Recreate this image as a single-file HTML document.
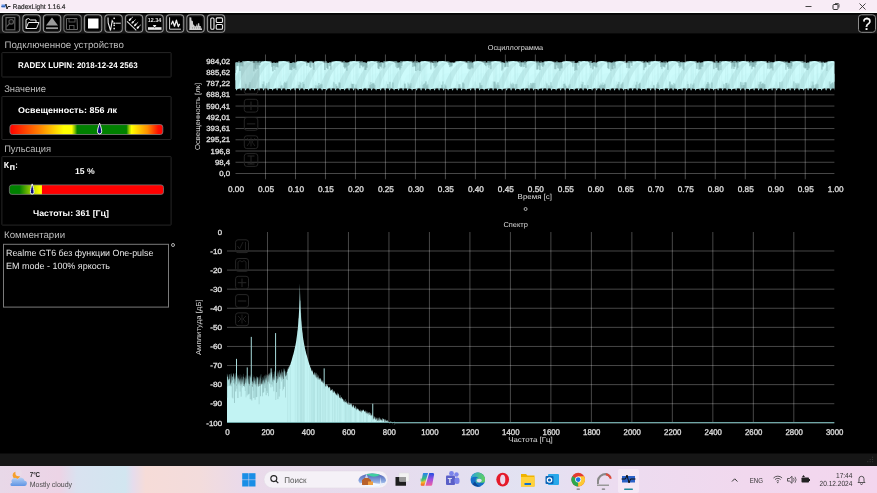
<!DOCTYPE html>
<html><head><meta charset="utf-8"><style>
*{margin:0;padding:0}
html,body{width:877px;height:493px;overflow:hidden;background:#000}
svg{display:block;will-change:transform;font-family:"Liberation Sans", sans-serif;-webkit-font-smoothing:antialiased}
text{text-rendering:geometricPrecision}
</style></head><body>
<svg width="877" height="493" viewBox="0 0 877 493">
<rect x="0" y="0" width="877" height="493" fill="#000"/>
<rect x="0" y="0" width="877" height="12" fill="#f8ecf6"/>
<rect x="0" y="11.6" width="877" height="1.4" fill="#ffffff"/>
<rect x="0" y="13" width="877" height="2" fill="#050505"/>
<rect x="0" y="14.8" width="877" height="18.6" fill="#181818"/>
<rect x="0" y="453.5" width="877" height="12.5" fill="#161616"/>
<defs><linearGradient id="tg" x1="0" x2="1" y1="0" y2="0">
<stop offset="0" stop-color="#e8d8e8"/>
<stop offset="0.068" stop-color="#ecd4e6"/>
<stop offset="0.088" stop-color="#d9e2f0"/>
<stop offset="0.143" stop-color="#d2e6f0"/>
<stop offset="0.152" stop-color="#e6dcec"/>
<stop offset="0.166" stop-color="#f6dcd8"/>
<stop offset="0.228" stop-color="#f3dcdc"/>
<stop offset="0.275" stop-color="#eadaea"/>
<stop offset="0.45" stop-color="#e6dcee"/>
<stop offset="0.6" stop-color="#e2e2f2"/>
<stop offset="0.7" stop-color="#ecdcf0"/>
<stop offset="0.85" stop-color="#f1d8ee"/>
<stop offset="1" stop-color="#f3d6ee"/>
</linearGradient></defs>
<rect x="0" y="466" width="877" height="27" fill="url(#tg)"/>
<path d="M1.5,6.5 L5,6.5 L6,4 L7,9 L8,6.5 L10.5,6.5" stroke="#222" stroke-width="1" fill="none"/>
<rect x="1.5" y="4.5" width="4" height="3" fill="#3b78e0" opacity="0.8"/>
<text x="12.80" y="8.80" font-size="6.8" font-weight="normal" fill="#1e1e1e" textLength="52.60" lengthAdjust="spacingAndGlyphs" stroke="#1e1e1e" stroke-width="0.15" >RadexLight 1.16.4</text>
<rect x="805.5" y="6" width="6" height="0.9" fill="#333"/>
<rect x="833" y="4.5" width="5" height="5" rx="1" fill="none" stroke="#333" stroke-width="1"/>
<path d="M835,3.5 h3 a1,1 0 0 1 1,1 v3" fill="none" stroke="#333" stroke-width="0.8"/>
<path d="M859.5,3.5 L865.5,9.5 M865.5,3.5 L859.5,9.5" stroke="#333" stroke-width="0.9"/>
<rect x="2.40" y="14.9" width="17.3" height="17.2" rx="3.2" fill="#0a0a0a" stroke="#707070" stroke-width="1.2"/>
<rect x="3.50" y="16.0" width="15.1" height="15.0" rx="2.2" fill="#000" stroke="#1e1e1e" stroke-width="0.8"/>
<rect x="22.90" y="14.9" width="17.3" height="17.2" rx="3.2" fill="#0a0a0a" stroke="#8e8e8e" stroke-width="1.2"/>
<rect x="24.00" y="16.0" width="15.1" height="15.0" rx="2.2" fill="#000" stroke="#1e1e1e" stroke-width="0.8"/>
<rect x="43.40" y="14.9" width="17.3" height="17.2" rx="3.2" fill="#0a0a0a" stroke="#8e8e8e" stroke-width="1.2"/>
<rect x="44.50" y="16.0" width="15.1" height="15.0" rx="2.2" fill="#000" stroke="#1e1e1e" stroke-width="0.8"/>
<rect x="63.90" y="14.9" width="17.3" height="17.2" rx="3.2" fill="#0a0a0a" stroke="#707070" stroke-width="1.2"/>
<rect x="65.00" y="16.0" width="15.1" height="15.0" rx="2.2" fill="#000" stroke="#1e1e1e" stroke-width="0.8"/>
<rect x="84.40" y="14.9" width="17.3" height="17.2" rx="3.2" fill="#0a0a0a" stroke="#8e8e8e" stroke-width="1.2"/>
<rect x="85.50" y="16.0" width="15.1" height="15.0" rx="2.2" fill="#000" stroke="#1e1e1e" stroke-width="0.8"/>
<rect x="104.90" y="14.9" width="17.3" height="17.2" rx="3.2" fill="#0a0a0a" stroke="#8e8e8e" stroke-width="1.2"/>
<rect x="106.00" y="16.0" width="15.1" height="15.0" rx="2.2" fill="#000" stroke="#1e1e1e" stroke-width="0.8"/>
<rect x="125.40" y="14.9" width="17.3" height="17.2" rx="3.2" fill="#0a0a0a" stroke="#8e8e8e" stroke-width="1.2"/>
<rect x="126.50" y="16.0" width="15.1" height="15.0" rx="2.2" fill="#000" stroke="#1e1e1e" stroke-width="0.8"/>
<rect x="145.90" y="14.9" width="17.3" height="17.2" rx="3.2" fill="#0a0a0a" stroke="#8e8e8e" stroke-width="1.2"/>
<rect x="147.00" y="16.0" width="15.1" height="15.0" rx="2.2" fill="#000" stroke="#1e1e1e" stroke-width="0.8"/>
<rect x="166.40" y="14.9" width="17.3" height="17.2" rx="3.2" fill="#0a0a0a" stroke="#8e8e8e" stroke-width="1.2"/>
<rect x="167.50" y="16.0" width="15.1" height="15.0" rx="2.2" fill="#000" stroke="#1e1e1e" stroke-width="0.8"/>
<rect x="186.90" y="14.9" width="17.3" height="17.2" rx="3.2" fill="#0a0a0a" stroke="#8e8e8e" stroke-width="1.2"/>
<rect x="188.00" y="16.0" width="15.1" height="15.0" rx="2.2" fill="#000" stroke="#1e1e1e" stroke-width="0.8"/>
<rect x="207.40" y="14.9" width="17.3" height="17.2" rx="3.2" fill="#0a0a0a" stroke="#8e8e8e" stroke-width="1.2"/>
<rect x="208.50" y="16.0" width="15.1" height="15.0" rx="2.2" fill="#000" stroke="#1e1e1e" stroke-width="0.8"/>
<rect x="858.5" y="14.8" width="17" height="17.5" rx="3" fill="#050505" stroke="#8c8c8c" stroke-width="1"/>
<text x="862.4" y="30.4" font-size="17.5" fill="#fff" stroke="#fff" stroke-width="0.2" textLength="8.6" lengthAdjust="spacingAndGlyphs">?</text>
<rect x="6" y="17.6" width="8.8" height="12.2" fill="none" stroke="#606060" stroke-width="1.2"/>
<circle cx="11.2" cy="21.8" r="2.3" fill="#111" stroke="#5a5a5a" stroke-width="1.1"/>
<path d="M9.6,23.5 L6.6,26.6" stroke="#5a5a5a" stroke-width="1.1"/>
<path d="M26,28.5 L26,19.5 L28.5,18.5 L30.5,20 L36,20 L36,22 M26,28.5 L36.5,28.5 L39,22.5 L28.5,22.5 L26,28.5" fill="none" stroke="#eee" stroke-width="1"/>
<path d="M52,17.5 L58,25.5 L46,25.5 Z" fill="#9a9a9a"/>
<rect x="46" y="27.3" width="12" height="1.8" fill="#9a9a9a"/>
<path d="M66.5,18.5 L77,18.5 L77.5,29.5 L66.5,29.5 Z" fill="none" stroke="#666" stroke-width="1"/>
<rect x="69" y="18.5" width="6" height="3.5" fill="none" stroke="#666" stroke-width="0.8"/>
<rect x="69.5" y="25.5" width="4.5" height="4" fill="none" stroke="#666" stroke-width="0.8"/>
<rect x="88" y="18.5" width="10.5" height="10" fill="#fff"/>
<path d="M108,17.5 L108.2,23 L110.5,30.5 L112.2,20.8 L113.2,22.3" fill="none" stroke="#eee" stroke-width="1.1"/>
<rect x="113.4" y="17.6" width="1.6" height="1.5" fill="#ddd"/>
<rect x="113.4" y="22.5" width="1.6" height="1.5" fill="#ddd"/>
<rect x="113.4" y="24.6" width="1.6" height="1.5" fill="#ddd"/>
<rect x="113.4" y="27.8" width="1.6" height="1.5" fill="#ddd"/>
<rect x="115.3" y="22.7" width="5.5" height="1" fill="#ddd"/>
<path d="M127,21.3 L136.3,30.4" stroke="#ddd" stroke-width="1.1"/>
<path d="M129.4,20.2 L132.6,17.2" stroke="#eee" stroke-width="0.8" stroke-linecap="round"/>
<ellipse cx="130.0" cy="19.6" rx="1.5" ry="0.95" transform="rotate(-45 130.0 19.6)" fill="#f2f2f2"/>
<path d="M132.1,22.9 L135.3,19.9" stroke="#eee" stroke-width="0.8" stroke-linecap="round"/>
<ellipse cx="132.7" cy="22.3" rx="1.5" ry="0.95" transform="rotate(-45 132.7 22.3)" fill="#f2f2f2"/>
<path d="M134.7,25.5 L137.9,22.5" stroke="#eee" stroke-width="0.8" stroke-linecap="round"/>
<ellipse cx="135.3" cy="24.9" rx="1.5" ry="0.95" transform="rotate(-45 135.3 24.9)" fill="#f2f2f2"/>
<path d="M137.3,28.1 L140.5,25.1" stroke="#eee" stroke-width="0.8" stroke-linecap="round"/>
<ellipse cx="137.9" cy="27.5" rx="1.5" ry="0.95" transform="rotate(-45 137.9 27.5)" fill="#f2f2f2"/>
<text x="147.8" y="21.8" font-size="5.8" font-weight="bold" fill="#ddd" textLength="13.5" lengthAdjust="spacingAndGlyphs">12.34</text>
<rect x="148" y="27.2" width="13.5" height="2.6" fill="#eee"/>
<path d="M152.8,25.1 L156.4,25.1 L154.6,27.9 Z" fill="#eee"/>
<circle cx="154.6" cy="27.6" r="0.6" fill="#555"/>
<path d="M169.6,17.3 L169.6,29.2 L180.9,29.2" fill="none" stroke="#ddd" stroke-width="1"/>
<path d="M171.3,24.5 L172.8,21.1 L174.5,26.2 L176.4,20.2 L178.3,26.6 L179.6,23.9" fill="none" stroke="#eee" stroke-width="1.3" stroke-linejoin="round"/>
<path d="M189.4,29.6 L189.4,17.3 L191.3,17.5 L191.5,20.6 L192.8,21 L193.2,24.5 L194.2,25 L194.6,26.2 L196.2,26.2 L196.6,23.8 L197.4,26.5 L198,23.2 L199.2,23.3 L199.5,25.9 L200.6,26 L201,27 L201.8,29.6 Z" fill="#cfcfcf"/>
<rect x="192.1" y="27" width="0.5" height="2" fill="#777"/>
<rect x="194.1" y="27" width="0.5" height="2" fill="#777"/>
<rect x="196.0" y="27" width="0.5" height="2" fill="#777"/>
<rect x="198.6" y="27" width="0.5" height="2" fill="#777"/>
<rect x="200.5" y="27" width="0.5" height="2" fill="#777"/>
<rect x="189.4" y="28.8" width="12.6" height="1" fill="#eee"/>
<rect x="210.8" y="18" width="3.2" height="11.2" rx="1" fill="none" stroke="#eee" stroke-width="1.1"/>
<rect x="216.2" y="17.9" width="6.3" height="4.6" rx="1" fill="none" stroke="#eee" stroke-width="1.1"/>
<rect x="216.2" y="24.5" width="6.3" height="4.8" rx="1" fill="none" stroke="#eee" stroke-width="1.1"/>
<text x="4.45" y="48.20" font-size="9.6" font-weight="normal" fill="#bdbdbd" textLength="119.35" lengthAdjust="spacingAndGlyphs"  >Подключенное устройство</text>
<rect x="1.9" y="52.6" width="169.2" height="24.4" rx="0.5" fill="none" stroke="#262626" stroke-width="1"/>
<text x="18.10" y="68.10" font-size="8.2" font-weight="bold" fill="#fff" textLength="119.50" lengthAdjust="spacingAndGlyphs"  >RADEX LUPIN: 2018-12-24 2563</text>
<text x="4.15" y="91.90" font-size="9.6" font-weight="normal" fill="#bdbdbd" textLength="41.85" lengthAdjust="spacingAndGlyphs"  >Значение</text>
<rect x="1.9" y="96.5" width="169.2" height="43" rx="0.5" fill="none" stroke="#262626" stroke-width="1"/>
<text x="18.10" y="113.40" font-size="8.4" font-weight="bold" fill="#fff" textLength="99.00" lengthAdjust="spacingAndGlyphs"  >Освещенность: 856 лк</text>
<defs><linearGradient id="g1" x1="0" x2="1">
<stop offset="0" stop-color="#ff0000"/><stop offset="0.19" stop-color="#ff8000"/><stop offset="0.352" stop-color="#ffff00"/>
<stop offset="0.405" stop-color="#ffff00"/><stop offset="0.425" stop-color="#80c000"/><stop offset="0.44" stop-color="#008000"/>
<stop offset="0.762" stop-color="#008000"/><stop offset="0.78" stop-color="#a0d000"/><stop offset="0.795" stop-color="#ffff00"/>
<stop offset="0.9" stop-color="#ff9000"/><stop offset="0.97" stop-color="#ff1000"/><stop offset="1" stop-color="#ff0000"/></linearGradient>
<linearGradient id="g2" x1="0" x2="1">
<stop offset="0" stop-color="#008000"/><stop offset="0.065" stop-color="#008000"/><stop offset="0.175" stop-color="#e0f000"/><stop offset="0.2" stop-color="#ffff00"/><stop offset="0.208" stop-color="#ffff00"/><stop offset="0.213" stop-color="#ff0000"/><stop offset="1" stop-color="#ff0000"/></linearGradient></defs>
<rect x="9.9" y="124.6" width="152.9" height="9.9" rx="2.5" fill="url(#g1)" stroke="#808080" stroke-width="0.8"/>
<path d="M99.6,123.2 C101,127 101.7,129.5 101.7,131.8 A2.1,2.1 0 0 1 97.5,131.8 C97.5,129.5 98.2,127 99.6,123.2 Z" fill="#0c0c80" stroke="#fff" stroke-width="0.9"/>
<text x="4.15" y="151.90" font-size="9.6" font-weight="normal" fill="#bdbdbd" textLength="46.95" lengthAdjust="spacingAndGlyphs"  >Пульсация</text>
<rect x="1.9" y="156.6" width="169.2" height="68.5" rx="0.5" fill="none" stroke="#262626" stroke-width="1"/>
<text x="3.80" y="167.90" font-size="8.8" font-weight="bold" fill="#fff" textLength="5.30" lengthAdjust="spacingAndGlyphs"  >К</text>
<text x="9.60" y="169.90" font-size="8.8" font-weight="bold" fill="#fff" textLength="5.70" lengthAdjust="spacingAndGlyphs"  >п</text>
<text x="15.40" y="167.90" font-size="8.8" font-weight="bold" fill="#fff" textLength="2.20" lengthAdjust="spacingAndGlyphs"  >:</text>
<text x="74.90" y="173.80" font-size="8.4" font-weight="bold" fill="#fff" textLength="19.70" lengthAdjust="spacingAndGlyphs"  >15 %</text>
<rect x="9.4" y="184.9" width="154.1" height="9.5" rx="2.5" fill="url(#g2)" stroke="#777" stroke-width="0.8"/>
<path d="M32.2,183.9 C33.4,187.5 34.0,189.8 34.0,192.3 A1.8,1.8 0 0 1 30.4,192.3 C30.4,189.8 31.0,187.5 32.2,183.9 Z" fill="#0c0c80" stroke="#fff" stroke-width="0.9"/>
<text x="33.00" y="216.00" font-size="8.4" font-weight="bold" fill="#fff" textLength="75.90" lengthAdjust="spacingAndGlyphs"  >Частоты: 361 [Гц]</text>
<text x="4.00" y="237.80" font-size="9.6" font-weight="normal" fill="#bdbdbd" textLength="61.10" lengthAdjust="spacingAndGlyphs"  >Комментарии</text>
<rect x="3.5" y="244.3" width="165" height="62.8" fill="none" stroke="#7a7a7a" stroke-width="1"/>
<text x="6.00" y="256.00" font-size="9.0" font-weight="normal" fill="#e6e6e6" textLength="147.30" lengthAdjust="spacingAndGlyphs"  >Realme GT6 без функции One-pulse</text>
<text x="6.00" y="268.80" font-size="9.0" font-weight="normal" fill="#e6e6e6" textLength="104.00" lengthAdjust="spacingAndGlyphs"  >EM mode - 100% яркость</text>
<circle cx="173" cy="245" r="1.5" fill="none" stroke="#d8d8d8" stroke-width="0.8"/>
<circle cx="525.6" cy="209" r="1.5" fill="none" stroke="#d8d8d8" stroke-width="0.8"/>
<line x1="235.5" y1="173.50" x2="834.4" y2="173.50" stroke="rgba(255,255,255,0.28)" stroke-width="1"/>
<line x1="235.5" y1="162.26" x2="834.4" y2="162.26" stroke="rgba(255,255,255,0.28)" stroke-width="1"/>
<line x1="235.5" y1="151.02" x2="834.4" y2="151.02" stroke="rgba(255,255,255,0.28)" stroke-width="1"/>
<line x1="235.5" y1="139.78" x2="834.4" y2="139.78" stroke="rgba(255,255,255,0.28)" stroke-width="1"/>
<line x1="235.5" y1="128.54" x2="834.4" y2="128.54" stroke="rgba(255,255,255,0.28)" stroke-width="1"/>
<line x1="235.5" y1="117.30" x2="834.4" y2="117.30" stroke="rgba(255,255,255,0.28)" stroke-width="1"/>
<line x1="235.5" y1="106.06" x2="834.4" y2="106.06" stroke="rgba(255,255,255,0.28)" stroke-width="1"/>
<line x1="235.5" y1="94.82" x2="834.4" y2="94.82" stroke="rgba(255,255,255,0.28)" stroke-width="1"/>
<line x1="265.49" y1="54.5" x2="265.49" y2="179.3" stroke="rgba(255,255,255,0.28)" stroke-width="1"/>
<line x1="295.47" y1="54.5" x2="295.47" y2="179.3" stroke="rgba(255,255,255,0.28)" stroke-width="1"/>
<line x1="325.45" y1="54.5" x2="325.45" y2="179.3" stroke="rgba(255,255,255,0.28)" stroke-width="1"/>
<line x1="355.44" y1="54.5" x2="355.44" y2="179.3" stroke="rgba(255,255,255,0.28)" stroke-width="1"/>
<line x1="385.43" y1="54.5" x2="385.43" y2="179.3" stroke="rgba(255,255,255,0.28)" stroke-width="1"/>
<line x1="415.41" y1="54.5" x2="415.41" y2="179.3" stroke="rgba(255,255,255,0.28)" stroke-width="1"/>
<line x1="445.39" y1="54.5" x2="445.39" y2="179.3" stroke="rgba(255,255,255,0.28)" stroke-width="1"/>
<line x1="475.38" y1="54.5" x2="475.38" y2="179.3" stroke="rgba(255,255,255,0.28)" stroke-width="1"/>
<line x1="505.37" y1="54.5" x2="505.37" y2="179.3" stroke="rgba(255,255,255,0.28)" stroke-width="1"/>
<line x1="535.35" y1="54.5" x2="535.35" y2="179.3" stroke="rgba(255,255,255,0.28)" stroke-width="1"/>
<line x1="565.34" y1="54.5" x2="565.34" y2="179.3" stroke="rgba(255,255,255,0.28)" stroke-width="1"/>
<line x1="595.32" y1="54.5" x2="595.32" y2="179.3" stroke="rgba(255,255,255,0.28)" stroke-width="1"/>
<line x1="625.31" y1="54.5" x2="625.31" y2="179.3" stroke="rgba(255,255,255,0.28)" stroke-width="1"/>
<line x1="655.29" y1="54.5" x2="655.29" y2="179.3" stroke="rgba(255,255,255,0.28)" stroke-width="1"/>
<line x1="685.28" y1="54.5" x2="685.28" y2="179.3" stroke="rgba(255,255,255,0.28)" stroke-width="1"/>
<line x1="715.26" y1="54.5" x2="715.26" y2="179.3" stroke="rgba(255,255,255,0.28)" stroke-width="1"/>
<line x1="745.25" y1="54.5" x2="745.25" y2="179.3" stroke="rgba(255,255,255,0.28)" stroke-width="1"/>
<line x1="775.23" y1="54.5" x2="775.23" y2="179.3" stroke="rgba(255,255,255,0.28)" stroke-width="1"/>
<line x1="805.22" y1="54.5" x2="805.22" y2="179.3" stroke="rgba(255,255,255,0.28)" stroke-width="1"/>
<rect x="244.3" y="81" width="13.5" height="12.8" rx="2.5" fill="none" stroke="#262626" stroke-width="1"/>
<rect x="244.3" y="99.3" width="13.5" height="12.8" rx="2.5" fill="none" stroke="#262626" stroke-width="1"/>
<rect x="244.3" y="117.5" width="13.5" height="12.8" rx="2.5" fill="none" stroke="#262626" stroke-width="1"/>
<rect x="244.3" y="135.8" width="13.5" height="12.8" rx="2.5" fill="none" stroke="#262626" stroke-width="1"/>
<rect x="244.3" y="153.6" width="13.5" height="12.8" rx="2.5" fill="none" stroke="#262626" stroke-width="1"/>
<path d="M251,101.5 v8.5 M246.8,105.7 h8.5" stroke="#262626" stroke-width="1"/>
<path d="M246.8,123.9 h8.5" stroke="#262626" stroke-width="1"/>
<path d="M247,138 L250,142 L247,146 M255,138 L252,142 L255,146 M251,137.5 v9" stroke="#262626" stroke-width="0.8" fill="none"/>
<path d="M247.5,156 h7 M251,156 v8 M247.5,164 h7" stroke="#262626" stroke-width="1" fill="none"/>
<clipPath id="bandclip"><rect x="235.5" y="55" width="598.9" height="40"/></clipPath><g clip-path="url(#bandclip)">
<rect x="235.5" y="63" width="598.9" height="25.4" fill="#bfefef"/>
<ellipse cx="230.19" cy="71.5" rx="9.6" ry="10.5" fill="#cdfbfb"/>
<ellipse cx="236.19" cy="81" rx="8.5" ry="8" fill="#c9f9f9"/>
<ellipse cx="247.89" cy="71.5" rx="9.6" ry="10.5" fill="#cdfbfb"/>
<ellipse cx="253.89" cy="81" rx="8.5" ry="8" fill="#c9f9f9"/>
<ellipse cx="265.59" cy="71.5" rx="9.6" ry="10.5" fill="#cdfbfb"/>
<ellipse cx="271.59" cy="81" rx="8.5" ry="8" fill="#c9f9f9"/>
<ellipse cx="283.29" cy="71.5" rx="9.6" ry="10.5" fill="#cdfbfb"/>
<ellipse cx="289.29" cy="81" rx="8.5" ry="8" fill="#c9f9f9"/>
<ellipse cx="300.99" cy="71.5" rx="9.6" ry="10.5" fill="#cdfbfb"/>
<ellipse cx="306.99" cy="81" rx="8.5" ry="8" fill="#c9f9f9"/>
<ellipse cx="318.69" cy="71.5" rx="9.6" ry="10.5" fill="#cdfbfb"/>
<ellipse cx="324.69" cy="81" rx="8.5" ry="8" fill="#c9f9f9"/>
<ellipse cx="336.39" cy="71.5" rx="9.6" ry="10.5" fill="#cdfbfb"/>
<ellipse cx="342.39" cy="81" rx="8.5" ry="8" fill="#c9f9f9"/>
<ellipse cx="354.09" cy="71.5" rx="9.6" ry="10.5" fill="#cdfbfb"/>
<ellipse cx="360.09" cy="81" rx="8.5" ry="8" fill="#c9f9f9"/>
<ellipse cx="371.79" cy="71.5" rx="9.6" ry="10.5" fill="#cdfbfb"/>
<ellipse cx="377.79" cy="81" rx="8.5" ry="8" fill="#c9f9f9"/>
<ellipse cx="389.49" cy="71.5" rx="9.6" ry="10.5" fill="#cdfbfb"/>
<ellipse cx="395.49" cy="81" rx="8.5" ry="8" fill="#c9f9f9"/>
<ellipse cx="407.19" cy="71.5" rx="9.6" ry="10.5" fill="#cdfbfb"/>
<ellipse cx="413.19" cy="81" rx="8.5" ry="8" fill="#c9f9f9"/>
<ellipse cx="424.89" cy="71.5" rx="9.6" ry="10.5" fill="#cdfbfb"/>
<ellipse cx="430.89" cy="81" rx="8.5" ry="8" fill="#c9f9f9"/>
<ellipse cx="442.59" cy="71.5" rx="9.6" ry="10.5" fill="#cdfbfb"/>
<ellipse cx="448.59" cy="81" rx="8.5" ry="8" fill="#c9f9f9"/>
<ellipse cx="460.29" cy="71.5" rx="9.6" ry="10.5" fill="#cdfbfb"/>
<ellipse cx="466.29" cy="81" rx="8.5" ry="8" fill="#c9f9f9"/>
<ellipse cx="477.99" cy="71.5" rx="9.6" ry="10.5" fill="#cdfbfb"/>
<ellipse cx="483.99" cy="81" rx="8.5" ry="8" fill="#c9f9f9"/>
<ellipse cx="495.69" cy="71.5" rx="9.6" ry="10.5" fill="#cdfbfb"/>
<ellipse cx="501.69" cy="81" rx="8.5" ry="8" fill="#c9f9f9"/>
<ellipse cx="513.39" cy="71.5" rx="9.6" ry="10.5" fill="#cdfbfb"/>
<ellipse cx="519.39" cy="81" rx="8.5" ry="8" fill="#c9f9f9"/>
<ellipse cx="531.09" cy="71.5" rx="9.6" ry="10.5" fill="#cdfbfb"/>
<ellipse cx="537.09" cy="81" rx="8.5" ry="8" fill="#c9f9f9"/>
<ellipse cx="548.79" cy="71.5" rx="9.6" ry="10.5" fill="#cdfbfb"/>
<ellipse cx="554.79" cy="81" rx="8.5" ry="8" fill="#c9f9f9"/>
<ellipse cx="566.49" cy="71.5" rx="9.6" ry="10.5" fill="#cdfbfb"/>
<ellipse cx="572.49" cy="81" rx="8.5" ry="8" fill="#c9f9f9"/>
<ellipse cx="584.19" cy="71.5" rx="9.6" ry="10.5" fill="#cdfbfb"/>
<ellipse cx="590.19" cy="81" rx="8.5" ry="8" fill="#c9f9f9"/>
<ellipse cx="601.89" cy="71.5" rx="9.6" ry="10.5" fill="#cdfbfb"/>
<ellipse cx="607.89" cy="81" rx="8.5" ry="8" fill="#c9f9f9"/>
<ellipse cx="619.59" cy="71.5" rx="9.6" ry="10.5" fill="#cdfbfb"/>
<ellipse cx="625.59" cy="81" rx="8.5" ry="8" fill="#c9f9f9"/>
<ellipse cx="637.29" cy="71.5" rx="9.6" ry="10.5" fill="#cdfbfb"/>
<ellipse cx="643.29" cy="81" rx="8.5" ry="8" fill="#c9f9f9"/>
<ellipse cx="654.99" cy="71.5" rx="9.6" ry="10.5" fill="#cdfbfb"/>
<ellipse cx="660.99" cy="81" rx="8.5" ry="8" fill="#c9f9f9"/>
<ellipse cx="672.69" cy="71.5" rx="9.6" ry="10.5" fill="#cdfbfb"/>
<ellipse cx="678.69" cy="81" rx="8.5" ry="8" fill="#c9f9f9"/>
<ellipse cx="690.39" cy="71.5" rx="9.6" ry="10.5" fill="#cdfbfb"/>
<ellipse cx="696.39" cy="81" rx="8.5" ry="8" fill="#c9f9f9"/>
<ellipse cx="708.09" cy="71.5" rx="9.6" ry="10.5" fill="#cdfbfb"/>
<ellipse cx="714.09" cy="81" rx="8.5" ry="8" fill="#c9f9f9"/>
<ellipse cx="725.79" cy="71.5" rx="9.6" ry="10.5" fill="#cdfbfb"/>
<ellipse cx="731.79" cy="81" rx="8.5" ry="8" fill="#c9f9f9"/>
<ellipse cx="743.49" cy="71.5" rx="9.6" ry="10.5" fill="#cdfbfb"/>
<ellipse cx="749.49" cy="81" rx="8.5" ry="8" fill="#c9f9f9"/>
<ellipse cx="761.19" cy="71.5" rx="9.6" ry="10.5" fill="#cdfbfb"/>
<ellipse cx="767.19" cy="81" rx="8.5" ry="8" fill="#c9f9f9"/>
<ellipse cx="778.89" cy="71.5" rx="9.6" ry="10.5" fill="#cdfbfb"/>
<ellipse cx="784.89" cy="81" rx="8.5" ry="8" fill="#c9f9f9"/>
<ellipse cx="796.59" cy="71.5" rx="9.6" ry="10.5" fill="#cdfbfb"/>
<ellipse cx="802.59" cy="81" rx="8.5" ry="8" fill="#c9f9f9"/>
<ellipse cx="814.29" cy="71.5" rx="9.6" ry="10.5" fill="#cdfbfb"/>
<ellipse cx="820.29" cy="81" rx="8.5" ry="8" fill="#c9f9f9"/>
<ellipse cx="831.99" cy="71.5" rx="9.6" ry="10.5" fill="#cdfbfb"/>
<ellipse cx="837.99" cy="81" rx="8.5" ry="8" fill="#c9f9f9"/>
<ellipse cx="849.69" cy="71.5" rx="9.6" ry="10.5" fill="#cdfbfb"/>
<ellipse cx="855.69" cy="81" rx="8.5" ry="8" fill="#c9f9f9"/>
<rect x="235.50" y="62.00" width="1" height="1.20" fill="#b8eaea"/>
<rect x="235.60" y="62.00" width="0.7" height="8.08" fill="#507e7e" opacity="0.76"/>
<rect x="236.50" y="62.12" width="1" height="1.08" fill="#b8eaea"/>
<rect x="236.60" y="62.12" width="0.7" height="4.02" fill="#507e7e" opacity="0.78"/>
<rect x="237.50" y="62.39" width="1" height="0.81" fill="#b8eaea"/>
<rect x="237.60" y="62.39" width="0.7" height="3.52" fill="#507e7e" opacity="0.71"/>
<rect x="238.50" y="61.20" width="1" height="2.00" fill="#b8eaea"/>
<rect x="239.50" y="62.53" width="1" height="0.67" fill="#b8eaea"/>
<rect x="239.60" y="62.53" width="0.7" height="8.40" fill="#507e7e" opacity="0.94"/>
<rect x="240.50" y="62.44" width="1" height="0.76" fill="#b8eaea"/>
<rect x="240.60" y="62.44" width="0.7" height="3.87" fill="#507e7e" opacity="0.61"/>
<rect x="241.50" y="62.16" width="1" height="1.04" fill="#b8eaea"/>
<rect x="241.60" y="62.16" width="0.7" height="4.05" fill="#507e7e" opacity="0.68"/>
<rect x="242.50" y="61.07" width="1" height="2.13" fill="#b8eaea"/>
<rect x="242.60" y="61.07" width="0.7" height="5.42" fill="#507e7e" opacity="0.89"/>
<rect x="243.50" y="61.36" width="1" height="1.84" fill="#c6f6f6"/>
<rect x="244.50" y="61.45" width="1" height="1.75" fill="#c6f6f6"/>
<rect x="245.50" y="61.35" width="1" height="1.85" fill="#c6f6f6"/>
<rect x="245.60" y="83.84" width="0.7" height="4.56" fill="#5a8a8a" opacity="0.56"/>
<rect x="246.50" y="61.70" width="1" height="1.50" fill="#c6f6f6"/>
<rect x="247.50" y="61.59" width="1" height="1.61" fill="#c6f6f6"/>
<rect x="248.50" y="61.22" width="1" height="1.98" fill="#c6f6f6"/>
<rect x="248.60" y="84.60" width="0.7" height="3.80" fill="#5a8a8a" opacity="0.48"/>
<rect x="249.50" y="61.54" width="1" height="1.66" fill="#c6f6f6"/>
<rect x="249.60" y="82.09" width="0.7" height="6.31" fill="#5a8a8a" opacity="0.60"/>
<rect x="250.50" y="61.67" width="1" height="1.53" fill="#c6f6f6"/>
<rect x="251.50" y="61.00" width="1" height="2.20" fill="#c6f6f6"/>
<rect x="252.50" y="61.15" width="1" height="2.05" fill="#c6f6f6"/>
<rect x="253.50" y="63.00" width="1" height="0.20" fill="#b8eaea"/>
<rect x="253.60" y="63.00" width="0.7" height="8.39" fill="#507e7e" opacity="0.74"/>
<rect x="254.50" y="61.16" width="1" height="2.04" fill="#b8eaea"/>
<rect x="254.60" y="61.16" width="0.7" height="7.28" fill="#507e7e" opacity="0.69"/>
<rect x="255.50" y="61.19" width="1" height="2.01" fill="#b8eaea"/>
<rect x="255.60" y="61.19" width="0.7" height="8.30" fill="#507e7e" opacity="0.87"/>
<rect x="256.50" y="61.26" width="1" height="1.94" fill="#b8eaea"/>
<rect x="256.60" y="61.26" width="0.7" height="3.56" fill="#507e7e" opacity="0.62"/>
<rect x="257.50" y="62.75" width="1" height="0.45" fill="#b8eaea"/>
<rect x="257.60" y="62.75" width="0.7" height="6.08" fill="#507e7e" opacity="0.76"/>
<rect x="258.50" y="61.42" width="1" height="1.78" fill="#b8eaea"/>
<rect x="258.60" y="61.42" width="0.7" height="3.72" fill="#507e7e" opacity="0.83"/>
<rect x="259.50" y="61.26" width="1" height="1.94" fill="#b8eaea"/>
<rect x="259.60" y="61.26" width="0.7" height="4.17" fill="#507e7e" opacity="0.69"/>
<rect x="260.50" y="63.14" width="1" height="0.06" fill="#b8eaea"/>
<rect x="261.50" y="61.21" width="1" height="1.99" fill="#c6f6f6"/>
<rect x="262.50" y="61.62" width="1" height="1.58" fill="#c6f6f6"/>
<rect x="262.60" y="84.13" width="0.7" height="4.27" fill="#5a8a8a" opacity="0.79"/>
<rect x="263.50" y="61.45" width="1" height="1.75" fill="#c6f6f6"/>
<rect x="263.60" y="81.45" width="0.7" height="6.95" fill="#5a8a8a" opacity="0.54"/>
<rect x="264.50" y="61.18" width="1" height="2.02" fill="#c6f6f6"/>
<rect x="265.50" y="61.23" width="1" height="1.97" fill="#c6f6f6"/>
<rect x="265.60" y="85.57" width="0.7" height="2.83" fill="#5a8a8a" opacity="0.49"/>
<rect x="266.50" y="61.41" width="1" height="1.79" fill="#c6f6f6"/>
<rect x="266.60" y="83.19" width="0.7" height="5.21" fill="#5a8a8a" opacity="0.60"/>
<rect x="267.50" y="61.32" width="1" height="1.88" fill="#c6f6f6"/>
<rect x="268.50" y="61.34" width="1" height="1.86" fill="#c6f6f6"/>
<rect x="268.60" y="82.00" width="0.7" height="6.40" fill="#5a8a8a" opacity="0.52"/>
<rect x="269.50" y="61.11" width="1" height="2.09" fill="#c6f6f6"/>
<rect x="270.50" y="61.64" width="1" height="1.56" fill="#c6f6f6"/>
<rect x="271.50" y="62.80" width="1" height="0.40" fill="#b8eaea"/>
<rect x="271.60" y="62.80" width="0.7" height="4.04" fill="#507e7e" opacity="0.86"/>
<rect x="272.50" y="63.07" width="1" height="0.13" fill="#b8eaea"/>
<rect x="272.60" y="63.07" width="0.7" height="8.23" fill="#507e7e" opacity="0.91"/>
<rect x="273.50" y="62.33" width="1" height="0.87" fill="#b8eaea"/>
<rect x="273.60" y="62.33" width="0.7" height="3.57" fill="#507e7e" opacity="0.61"/>
<rect x="274.50" y="63.12" width="1" height="0.08" fill="#b8eaea"/>
<rect x="274.60" y="63.12" width="0.7" height="6.88" fill="#507e7e" opacity="0.69"/>
<rect x="275.50" y="62.81" width="1" height="0.39" fill="#b8eaea"/>
<rect x="275.60" y="62.81" width="0.7" height="4.61" fill="#507e7e" opacity="0.66"/>
<rect x="276.50" y="62.58" width="1" height="0.62" fill="#b8eaea"/>
<rect x="276.60" y="62.58" width="0.7" height="4.26" fill="#507e7e" opacity="0.80"/>
<rect x="277.50" y="62.88" width="1" height="0.32" fill="#b8eaea"/>
<rect x="277.60" y="62.88" width="0.7" height="4.54" fill="#507e7e" opacity="0.92"/>
<rect x="278.50" y="61.14" width="1" height="2.06" fill="#c6f6f6"/>
<rect x="279.50" y="61.01" width="1" height="2.19" fill="#c6f6f6"/>
<rect x="280.50" y="61.19" width="1" height="2.01" fill="#c6f6f6"/>
<rect x="280.60" y="85.63" width="0.7" height="2.77" fill="#5a8a8a" opacity="0.52"/>
<rect x="281.50" y="61.26" width="1" height="1.94" fill="#c6f6f6"/>
<rect x="281.60" y="85.31" width="0.7" height="3.09" fill="#5a8a8a" opacity="0.59"/>
<rect x="282.50" y="61.62" width="1" height="1.58" fill="#c6f6f6"/>
<rect x="283.50" y="61.46" width="1" height="1.74" fill="#c6f6f6"/>
<rect x="283.60" y="83.27" width="0.7" height="5.13" fill="#5a8a8a" opacity="0.51"/>
<rect x="284.50" y="61.02" width="1" height="2.18" fill="#c6f6f6"/>
<rect x="284.60" y="81.80" width="0.7" height="6.60" fill="#5a8a8a" opacity="0.73"/>
<rect x="285.50" y="61.67" width="1" height="1.53" fill="#c6f6f6"/>
<rect x="285.60" y="83.04" width="0.7" height="5.36" fill="#5a8a8a" opacity="0.64"/>
<rect x="286.50" y="61.51" width="1" height="1.69" fill="#c6f6f6"/>
<rect x="286.60" y="81.40" width="0.7" height="7.00" fill="#5a8a8a" opacity="0.48"/>
<rect x="287.50" y="61.38" width="1" height="1.82" fill="#c6f6f6"/>
<rect x="288.50" y="61.52" width="1" height="1.68" fill="#c6f6f6"/>
<rect x="289.50" y="62.98" width="1" height="0.22" fill="#b8eaea"/>
<rect x="289.60" y="62.98" width="0.7" height="6.87" fill="#507e7e" opacity="0.88"/>
<rect x="290.50" y="63.01" width="1" height="0.19" fill="#b8eaea"/>
<rect x="290.60" y="63.01" width="0.7" height="6.77" fill="#507e7e" opacity="0.92"/>
<rect x="291.50" y="62.92" width="1" height="0.28" fill="#b8eaea"/>
<rect x="291.60" y="62.92" width="0.7" height="7.35" fill="#507e7e" opacity="0.90"/>
<rect x="292.50" y="62.26" width="1" height="0.94" fill="#b8eaea"/>
<rect x="292.60" y="62.26" width="0.7" height="5.10" fill="#507e7e" opacity="0.80"/>
<rect x="293.50" y="62.34" width="1" height="0.86" fill="#b8eaea"/>
<rect x="293.60" y="62.34" width="0.7" height="6.52" fill="#507e7e" opacity="0.95"/>
<rect x="294.50" y="62.94" width="1" height="0.26" fill="#b8eaea"/>
<rect x="294.60" y="62.94" width="0.7" height="5.14" fill="#507e7e" opacity="0.86"/>
<rect x="295.50" y="62.28" width="1" height="0.92" fill="#b8eaea"/>
<rect x="295.60" y="62.28" width="0.7" height="7.61" fill="#507e7e" opacity="0.63"/>
<rect x="296.50" y="61.53" width="1" height="1.67" fill="#c6f6f6"/>
<rect x="297.50" y="61.02" width="1" height="2.18" fill="#c6f6f6"/>
<rect x="298.50" y="61.42" width="1" height="1.78" fill="#c6f6f6"/>
<rect x="298.60" y="84.86" width="0.7" height="3.54" fill="#5a8a8a" opacity="0.73"/>
<rect x="299.50" y="61.35" width="1" height="1.85" fill="#c6f6f6"/>
<rect x="299.60" y="81.76" width="0.7" height="6.64" fill="#5a8a8a" opacity="0.55"/>
<rect x="300.50" y="61.01" width="1" height="2.19" fill="#c6f6f6"/>
<rect x="300.60" y="82.85" width="0.7" height="5.55" fill="#5a8a8a" opacity="0.53"/>
<rect x="301.50" y="61.12" width="1" height="2.08" fill="#c6f6f6"/>
<rect x="302.50" y="61.46" width="1" height="1.74" fill="#c6f6f6"/>
<rect x="302.60" y="81.89" width="0.7" height="6.51" fill="#5a8a8a" opacity="0.58"/>
<rect x="303.50" y="61.47" width="1" height="1.73" fill="#c6f6f6"/>
<rect x="303.60" y="83.96" width="0.7" height="4.44" fill="#5a8a8a" opacity="0.77"/>
<rect x="304.50" y="61.64" width="1" height="1.56" fill="#c6f6f6"/>
<rect x="305.50" y="61.27" width="1" height="1.93" fill="#c6f6f6"/>
<rect x="306.50" y="62.28" width="1" height="0.92" fill="#b8eaea"/>
<rect x="306.60" y="62.28" width="0.7" height="3.75" fill="#507e7e" opacity="0.77"/>
<rect x="307.50" y="62.84" width="1" height="0.36" fill="#b8eaea"/>
<rect x="308.50" y="62.56" width="1" height="0.64" fill="#b8eaea"/>
<rect x="309.50" y="61.61" width="1" height="1.59" fill="#b8eaea"/>
<rect x="309.60" y="61.61" width="0.7" height="5.48" fill="#507e7e" opacity="0.70"/>
<rect x="310.50" y="61.47" width="1" height="1.73" fill="#b8eaea"/>
<rect x="310.60" y="61.47" width="0.7" height="6.44" fill="#507e7e" opacity="0.77"/>
<rect x="311.50" y="61.69" width="1" height="1.51" fill="#b8eaea"/>
<rect x="312.50" y="63.16" width="1" height="0.04" fill="#b8eaea"/>
<rect x="312.60" y="63.16" width="0.7" height="3.41" fill="#507e7e" opacity="0.61"/>
<rect x="313.50" y="62.92" width="1" height="0.28" fill="#b8eaea"/>
<rect x="313.60" y="62.92" width="0.7" height="6.90" fill="#507e7e" opacity="0.80"/>
<rect x="314.50" y="61.22" width="1" height="1.98" fill="#c6f6f6"/>
<rect x="315.50" y="61.55" width="1" height="1.65" fill="#c6f6f6"/>
<rect x="315.60" y="85.29" width="0.7" height="3.11" fill="#5a8a8a" opacity="0.63"/>
<rect x="316.50" y="61.02" width="1" height="2.18" fill="#c6f6f6"/>
<rect x="317.50" y="61.17" width="1" height="2.03" fill="#c6f6f6"/>
<rect x="317.60" y="85.69" width="0.7" height="2.71" fill="#5a8a8a" opacity="0.70"/>
<rect x="318.50" y="61.31" width="1" height="1.89" fill="#c6f6f6"/>
<rect x="318.60" y="82.95" width="0.7" height="5.45" fill="#5a8a8a" opacity="0.77"/>
<rect x="319.50" y="61.67" width="1" height="1.53" fill="#c6f6f6"/>
<rect x="319.60" y="85.00" width="0.7" height="3.40" fill="#5a8a8a" opacity="0.64"/>
<rect x="320.50" y="61.13" width="1" height="2.07" fill="#c6f6f6"/>
<rect x="320.60" y="83.78" width="0.7" height="4.62" fill="#5a8a8a" opacity="0.74"/>
<rect x="321.50" y="61.13" width="1" height="2.07" fill="#c6f6f6"/>
<rect x="321.60" y="84.34" width="0.7" height="4.06" fill="#5a8a8a" opacity="0.73"/>
<rect x="322.50" y="61.36" width="1" height="1.84" fill="#c6f6f6"/>
<rect x="323.50" y="61.43" width="1" height="1.77" fill="#c6f6f6"/>
<rect x="324.50" y="62.66" width="1" height="0.54" fill="#b8eaea"/>
<rect x="324.60" y="62.66" width="0.7" height="7.36" fill="#507e7e" opacity="0.92"/>
<rect x="325.50" y="61.19" width="1" height="2.01" fill="#b8eaea"/>
<rect x="326.50" y="62.59" width="1" height="0.61" fill="#b8eaea"/>
<rect x="326.60" y="62.59" width="0.7" height="5.49" fill="#507e7e" opacity="0.82"/>
<rect x="327.50" y="63.00" width="1" height="0.20" fill="#b8eaea"/>
<rect x="327.60" y="63.00" width="0.7" height="6.13" fill="#507e7e" opacity="0.91"/>
<rect x="328.50" y="62.75" width="1" height="0.45" fill="#b8eaea"/>
<rect x="329.50" y="62.02" width="1" height="1.18" fill="#b8eaea"/>
<rect x="329.60" y="62.02" width="0.7" height="4.13" fill="#507e7e" opacity="0.85"/>
<rect x="330.50" y="62.80" width="1" height="0.40" fill="#b8eaea"/>
<rect x="330.60" y="62.80" width="0.7" height="6.95" fill="#507e7e" opacity="0.67"/>
<rect x="331.50" y="61.63" width="1" height="1.57" fill="#c6f6f6"/>
<rect x="332.50" y="61.69" width="1" height="1.51" fill="#c6f6f6"/>
<rect x="333.50" y="61.68" width="1" height="1.52" fill="#c6f6f6"/>
<rect x="333.60" y="82.34" width="0.7" height="6.06" fill="#5a8a8a" opacity="0.58"/>
<rect x="334.50" y="61.64" width="1" height="1.56" fill="#c6f6f6"/>
<rect x="335.50" y="61.24" width="1" height="1.96" fill="#c6f6f6"/>
<rect x="335.60" y="83.92" width="0.7" height="4.48" fill="#5a8a8a" opacity="0.67"/>
<rect x="336.50" y="61.54" width="1" height="1.66" fill="#c6f6f6"/>
<rect x="336.60" y="85.77" width="0.7" height="2.63" fill="#5a8a8a" opacity="0.77"/>
<rect x="337.50" y="61.04" width="1" height="2.16" fill="#c6f6f6"/>
<rect x="338.50" y="61.12" width="1" height="2.08" fill="#c6f6f6"/>
<rect x="338.60" y="82.35" width="0.7" height="6.05" fill="#5a8a8a" opacity="0.51"/>
<rect x="339.50" y="61.10" width="1" height="2.10" fill="#c6f6f6"/>
<rect x="339.60" y="82.64" width="0.7" height="5.76" fill="#5a8a8a" opacity="0.79"/>
<rect x="340.50" y="61.48" width="1" height="1.72" fill="#c6f6f6"/>
<rect x="341.50" y="61.66" width="1" height="1.54" fill="#c6f6f6"/>
<rect x="342.50" y="62.08" width="1" height="1.12" fill="#b8eaea"/>
<rect x="343.50" y="61.19" width="1" height="2.01" fill="#b8eaea"/>
<rect x="343.60" y="61.19" width="0.7" height="5.90" fill="#507e7e" opacity="0.70"/>
<rect x="344.50" y="62.60" width="1" height="0.60" fill="#b8eaea"/>
<rect x="344.60" y="62.60" width="0.7" height="5.88" fill="#507e7e" opacity="0.90"/>
<rect x="345.50" y="62.23" width="1" height="0.97" fill="#b8eaea"/>
<rect x="345.60" y="62.23" width="0.7" height="5.10" fill="#507e7e" opacity="0.90"/>
<rect x="346.50" y="62.98" width="1" height="0.22" fill="#b8eaea"/>
<rect x="346.60" y="62.98" width="0.7" height="7.68" fill="#507e7e" opacity="0.94"/>
<rect x="347.50" y="62.15" width="1" height="1.05" fill="#b8eaea"/>
<rect x="347.60" y="62.15" width="0.7" height="4.11" fill="#507e7e" opacity="0.79"/>
<rect x="348.50" y="62.11" width="1" height="1.09" fill="#b8eaea"/>
<rect x="348.60" y="62.11" width="0.7" height="3.15" fill="#507e7e" opacity="0.94"/>
<rect x="349.50" y="61.36" width="1" height="1.84" fill="#c6f6f6"/>
<rect x="350.50" y="61.28" width="1" height="1.92" fill="#c6f6f6"/>
<rect x="351.50" y="61.56" width="1" height="1.64" fill="#c6f6f6"/>
<rect x="351.60" y="83.69" width="0.7" height="4.71" fill="#5a8a8a" opacity="0.73"/>
<rect x="352.50" y="61.05" width="1" height="2.15" fill="#c6f6f6"/>
<rect x="352.60" y="84.04" width="0.7" height="4.36" fill="#5a8a8a" opacity="0.83"/>
<rect x="353.50" y="61.65" width="1" height="1.55" fill="#c6f6f6"/>
<rect x="353.60" y="83.77" width="0.7" height="4.63" fill="#5a8a8a" opacity="0.50"/>
<rect x="354.50" y="61.30" width="1" height="1.90" fill="#c6f6f6"/>
<rect x="355.50" y="61.63" width="1" height="1.57" fill="#c6f6f6"/>
<rect x="355.60" y="84.47" width="0.7" height="3.93" fill="#5a8a8a" opacity="0.53"/>
<rect x="356.50" y="61.43" width="1" height="1.77" fill="#c6f6f6"/>
<rect x="357.50" y="61.09" width="1" height="2.11" fill="#c6f6f6"/>
<rect x="358.50" y="61.02" width="1" height="2.18" fill="#c6f6f6"/>
<rect x="359.50" y="61.43" width="1" height="1.77" fill="#b8eaea"/>
<rect x="359.60" y="61.43" width="0.7" height="6.78" fill="#507e7e" opacity="0.71"/>
<rect x="360.50" y="61.78" width="1" height="1.42" fill="#b8eaea"/>
<rect x="360.60" y="61.78" width="0.7" height="3.58" fill="#507e7e" opacity="0.86"/>
<rect x="361.50" y="61.27" width="1" height="1.93" fill="#b8eaea"/>
<rect x="361.60" y="61.27" width="0.7" height="4.38" fill="#507e7e" opacity="0.67"/>
<rect x="362.50" y="62.17" width="1" height="1.03" fill="#b8eaea"/>
<rect x="362.60" y="62.17" width="0.7" height="5.07" fill="#507e7e" opacity="0.74"/>
<rect x="363.50" y="62.16" width="1" height="1.04" fill="#b8eaea"/>
<rect x="363.60" y="62.16" width="0.7" height="4.12" fill="#507e7e" opacity="0.82"/>
<rect x="364.50" y="62.40" width="1" height="0.80" fill="#b8eaea"/>
<rect x="364.60" y="62.40" width="0.7" height="7.68" fill="#507e7e" opacity="0.81"/>
<rect x="365.50" y="62.88" width="1" height="0.32" fill="#b8eaea"/>
<rect x="365.60" y="62.88" width="0.7" height="7.07" fill="#507e7e" opacity="0.88"/>
<rect x="366.50" y="62.99" width="1" height="0.21" fill="#b8eaea"/>
<rect x="366.60" y="62.99" width="0.7" height="4.73" fill="#507e7e" opacity="0.92"/>
<rect x="367.50" y="61.15" width="1" height="2.05" fill="#c6f6f6"/>
<rect x="368.50" y="61.70" width="1" height="1.50" fill="#c6f6f6"/>
<rect x="369.50" y="61.62" width="1" height="1.58" fill="#c6f6f6"/>
<rect x="369.60" y="84.82" width="0.7" height="3.58" fill="#5a8a8a" opacity="0.74"/>
<rect x="370.50" y="61.18" width="1" height="2.02" fill="#c6f6f6"/>
<rect x="370.60" y="82.16" width="0.7" height="6.24" fill="#5a8a8a" opacity="0.62"/>
<rect x="371.50" y="61.55" width="1" height="1.65" fill="#c6f6f6"/>
<rect x="371.60" y="84.09" width="0.7" height="4.31" fill="#5a8a8a" opacity="0.72"/>
<rect x="372.50" y="61.01" width="1" height="2.19" fill="#c6f6f6"/>
<rect x="372.60" y="82.83" width="0.7" height="5.57" fill="#5a8a8a" opacity="0.81"/>
<rect x="373.50" y="61.68" width="1" height="1.52" fill="#c6f6f6"/>
<rect x="373.60" y="83.62" width="0.7" height="4.78" fill="#5a8a8a" opacity="0.75"/>
<rect x="374.50" y="61.35" width="1" height="1.85" fill="#c6f6f6"/>
<rect x="374.60" y="85.05" width="0.7" height="3.35" fill="#5a8a8a" opacity="0.48"/>
<rect x="375.50" y="61.07" width="1" height="2.13" fill="#c6f6f6"/>
<rect x="376.50" y="61.03" width="1" height="2.17" fill="#c6f6f6"/>
<rect x="377.50" y="62.21" width="1" height="0.99" fill="#b8eaea"/>
<rect x="377.60" y="62.21" width="0.7" height="6.13" fill="#507e7e" opacity="0.65"/>
<rect x="378.50" y="61.41" width="1" height="1.79" fill="#b8eaea"/>
<rect x="378.60" y="61.41" width="0.7" height="7.62" fill="#507e7e" opacity="0.95"/>
<rect x="379.50" y="63.04" width="1" height="0.16" fill="#b8eaea"/>
<rect x="379.60" y="63.04" width="0.7" height="3.34" fill="#507e7e" opacity="0.93"/>
<rect x="380.50" y="62.02" width="1" height="1.18" fill="#b8eaea"/>
<rect x="380.60" y="62.02" width="0.7" height="4.80" fill="#507e7e" opacity="0.76"/>
<rect x="381.50" y="62.13" width="1" height="1.07" fill="#b8eaea"/>
<rect x="381.60" y="62.13" width="0.7" height="6.31" fill="#507e7e" opacity="0.60"/>
<rect x="382.50" y="62.54" width="1" height="0.66" fill="#b8eaea"/>
<rect x="383.50" y="61.40" width="1" height="1.80" fill="#b8eaea"/>
<rect x="383.60" y="61.40" width="0.7" height="7.07" fill="#507e7e" opacity="0.74"/>
<rect x="384.50" y="61.43" width="1" height="1.77" fill="#b8eaea"/>
<rect x="384.60" y="61.43" width="0.7" height="5.82" fill="#507e7e" opacity="0.61"/>
<rect x="385.50" y="61.63" width="1" height="1.57" fill="#c6f6f6"/>
<rect x="386.50" y="61.56" width="1" height="1.64" fill="#c6f6f6"/>
<rect x="387.50" y="61.60" width="1" height="1.60" fill="#c6f6f6"/>
<rect x="387.60" y="84.08" width="0.7" height="4.32" fill="#5a8a8a" opacity="0.69"/>
<rect x="388.50" y="61.35" width="1" height="1.85" fill="#c6f6f6"/>
<rect x="389.50" y="61.56" width="1" height="1.64" fill="#c6f6f6"/>
<rect x="389.60" y="81.80" width="0.7" height="6.60" fill="#5a8a8a" opacity="0.75"/>
<rect x="390.50" y="61.54" width="1" height="1.66" fill="#c6f6f6"/>
<rect x="391.50" y="61.28" width="1" height="1.92" fill="#c6f6f6"/>
<rect x="392.50" y="61.62" width="1" height="1.58" fill="#c6f6f6"/>
<rect x="392.60" y="82.45" width="0.7" height="5.95" fill="#5a8a8a" opacity="0.76"/>
<rect x="393.50" y="61.28" width="1" height="1.92" fill="#c6f6f6"/>
<rect x="394.50" y="61.51" width="1" height="1.69" fill="#c6f6f6"/>
<rect x="395.50" y="61.16" width="1" height="2.04" fill="#b8eaea"/>
<rect x="395.60" y="61.16" width="0.7" height="5.58" fill="#507e7e" opacity="0.60"/>
<rect x="396.50" y="61.78" width="1" height="1.42" fill="#b8eaea"/>
<rect x="396.60" y="61.78" width="0.7" height="6.43" fill="#507e7e" opacity="0.68"/>
<rect x="397.50" y="63.08" width="1" height="0.12" fill="#b8eaea"/>
<rect x="397.60" y="63.08" width="0.7" height="4.86" fill="#507e7e" opacity="0.83"/>
<rect x="398.50" y="62.25" width="1" height="0.95" fill="#b8eaea"/>
<rect x="398.60" y="62.25" width="0.7" height="5.14" fill="#507e7e" opacity="0.95"/>
<rect x="399.50" y="62.41" width="1" height="0.79" fill="#b8eaea"/>
<rect x="399.60" y="62.41" width="0.7" height="7.19" fill="#507e7e" opacity="0.94"/>
<rect x="400.50" y="61.05" width="1" height="2.15" fill="#b8eaea"/>
<rect x="400.60" y="61.05" width="0.7" height="7.06" fill="#507e7e" opacity="0.69"/>
<rect x="401.50" y="61.88" width="1" height="1.32" fill="#b8eaea"/>
<rect x="401.60" y="61.88" width="0.7" height="4.07" fill="#507e7e" opacity="0.73"/>
<rect x="402.50" y="61.07" width="1" height="2.13" fill="#c6f6f6"/>
<rect x="403.50" y="61.18" width="1" height="2.02" fill="#c6f6f6"/>
<rect x="404.50" y="61.63" width="1" height="1.57" fill="#c6f6f6"/>
<rect x="404.60" y="83.61" width="0.7" height="4.79" fill="#5a8a8a" opacity="0.84"/>
<rect x="405.50" y="61.40" width="1" height="1.80" fill="#c6f6f6"/>
<rect x="406.50" y="61.45" width="1" height="1.75" fill="#c6f6f6"/>
<rect x="407.50" y="61.05" width="1" height="2.15" fill="#c6f6f6"/>
<rect x="407.60" y="82.48" width="0.7" height="5.92" fill="#5a8a8a" opacity="0.47"/>
<rect x="408.50" y="61.65" width="1" height="1.55" fill="#c6f6f6"/>
<rect x="408.60" y="83.78" width="0.7" height="4.62" fill="#5a8a8a" opacity="0.52"/>
<rect x="409.50" y="61.35" width="1" height="1.85" fill="#c6f6f6"/>
<rect x="409.60" y="85.64" width="0.7" height="2.76" fill="#5a8a8a" opacity="0.83"/>
<rect x="410.50" y="61.29" width="1" height="1.91" fill="#c6f6f6"/>
<rect x="410.60" y="83.21" width="0.7" height="5.19" fill="#5a8a8a" opacity="0.60"/>
<rect x="411.50" y="61.20" width="1" height="2.00" fill="#c6f6f6"/>
<rect x="412.50" y="62.44" width="1" height="0.76" fill="#b8eaea"/>
<rect x="412.60" y="62.44" width="0.7" height="4.56" fill="#507e7e" opacity="0.85"/>
<rect x="413.50" y="61.65" width="1" height="1.55" fill="#b8eaea"/>
<rect x="413.60" y="61.65" width="0.7" height="4.35" fill="#507e7e" opacity="0.61"/>
<rect x="414.50" y="61.34" width="1" height="1.86" fill="#b8eaea"/>
<rect x="414.60" y="61.34" width="0.7" height="5.14" fill="#507e7e" opacity="0.91"/>
<rect x="415.50" y="62.65" width="1" height="0.55" fill="#b8eaea"/>
<rect x="415.60" y="62.65" width="0.7" height="8.44" fill="#507e7e" opacity="0.93"/>
<rect x="416.50" y="61.16" width="1" height="2.04" fill="#b8eaea"/>
<rect x="417.50" y="61.94" width="1" height="1.26" fill="#b8eaea"/>
<rect x="417.60" y="61.94" width="0.7" height="8.35" fill="#507e7e" opacity="0.69"/>
<rect x="418.50" y="62.15" width="1" height="1.05" fill="#b8eaea"/>
<rect x="419.50" y="62.59" width="1" height="0.61" fill="#b8eaea"/>
<rect x="419.60" y="62.59" width="0.7" height="8.38" fill="#507e7e" opacity="0.89"/>
<rect x="420.50" y="61.42" width="1" height="1.78" fill="#c6f6f6"/>
<rect x="421.50" y="61.08" width="1" height="2.12" fill="#c6f6f6"/>
<rect x="422.50" y="61.44" width="1" height="1.76" fill="#c6f6f6"/>
<rect x="422.60" y="84.98" width="0.7" height="3.42" fill="#5a8a8a" opacity="0.47"/>
<rect x="423.50" y="61.37" width="1" height="1.83" fill="#c6f6f6"/>
<rect x="423.60" y="83.91" width="0.7" height="4.49" fill="#5a8a8a" opacity="0.72"/>
<rect x="424.50" y="61.32" width="1" height="1.88" fill="#c6f6f6"/>
<rect x="424.60" y="83.28" width="0.7" height="5.12" fill="#5a8a8a" opacity="0.62"/>
<rect x="425.50" y="61.54" width="1" height="1.66" fill="#c6f6f6"/>
<rect x="425.60" y="81.41" width="0.7" height="6.99" fill="#5a8a8a" opacity="0.83"/>
<rect x="426.50" y="61.51" width="1" height="1.69" fill="#c6f6f6"/>
<rect x="426.60" y="85.39" width="0.7" height="3.01" fill="#5a8a8a" opacity="0.81"/>
<rect x="427.50" y="61.55" width="1" height="1.65" fill="#c6f6f6"/>
<rect x="427.60" y="84.28" width="0.7" height="4.12" fill="#5a8a8a" opacity="0.56"/>
<rect x="428.50" y="61.48" width="1" height="1.72" fill="#c6f6f6"/>
<rect x="429.50" y="61.40" width="1" height="1.80" fill="#c6f6f6"/>
<rect x="430.50" y="62.30" width="1" height="0.90" fill="#b8eaea"/>
<rect x="430.60" y="62.30" width="0.7" height="7.14" fill="#507e7e" opacity="0.67"/>
<rect x="431.50" y="61.55" width="1" height="1.65" fill="#b8eaea"/>
<rect x="432.50" y="63.01" width="1" height="0.19" fill="#b8eaea"/>
<rect x="433.50" y="61.09" width="1" height="2.11" fill="#b8eaea"/>
<rect x="433.60" y="61.09" width="0.7" height="4.49" fill="#507e7e" opacity="0.75"/>
<rect x="434.50" y="62.37" width="1" height="0.83" fill="#b8eaea"/>
<rect x="434.60" y="62.37" width="0.7" height="5.98" fill="#507e7e" opacity="0.63"/>
<rect x="435.50" y="61.19" width="1" height="2.01" fill="#b8eaea"/>
<rect x="435.60" y="61.19" width="0.7" height="6.03" fill="#507e7e" opacity="0.82"/>
<rect x="436.50" y="61.82" width="1" height="1.38" fill="#b8eaea"/>
<rect x="436.60" y="61.82" width="0.7" height="4.16" fill="#507e7e" opacity="0.72"/>
<rect x="437.50" y="62.64" width="1" height="0.56" fill="#b8eaea"/>
<rect x="438.50" y="61.05" width="1" height="2.15" fill="#c6f6f6"/>
<rect x="439.50" y="61.08" width="1" height="2.12" fill="#c6f6f6"/>
<rect x="440.50" y="61.44" width="1" height="1.76" fill="#c6f6f6"/>
<rect x="441.50" y="61.15" width="1" height="2.05" fill="#c6f6f6"/>
<rect x="441.60" y="84.74" width="0.7" height="3.66" fill="#5a8a8a" opacity="0.77"/>
<rect x="442.50" y="61.26" width="1" height="1.94" fill="#c6f6f6"/>
<rect x="442.60" y="81.45" width="0.7" height="6.95" fill="#5a8a8a" opacity="0.58"/>
<rect x="443.50" y="61.38" width="1" height="1.82" fill="#c6f6f6"/>
<rect x="444.50" y="61.64" width="1" height="1.56" fill="#c6f6f6"/>
<rect x="444.60" y="84.24" width="0.7" height="4.16" fill="#5a8a8a" opacity="0.49"/>
<rect x="445.50" y="61.61" width="1" height="1.59" fill="#c6f6f6"/>
<rect x="445.60" y="85.53" width="0.7" height="2.87" fill="#5a8a8a" opacity="0.68"/>
<rect x="446.50" y="61.34" width="1" height="1.86" fill="#c6f6f6"/>
<rect x="447.50" y="61.48" width="1" height="1.72" fill="#c6f6f6"/>
<rect x="448.50" y="61.66" width="1" height="1.54" fill="#b8eaea"/>
<rect x="448.60" y="61.66" width="0.7" height="3.42" fill="#507e7e" opacity="0.67"/>
<rect x="449.50" y="62.46" width="1" height="0.74" fill="#b8eaea"/>
<rect x="449.60" y="62.46" width="0.7" height="4.67" fill="#507e7e" opacity="0.85"/>
<rect x="450.50" y="62.53" width="1" height="0.67" fill="#b8eaea"/>
<rect x="450.60" y="62.53" width="0.7" height="3.79" fill="#507e7e" opacity="0.73"/>
<rect x="451.50" y="62.60" width="1" height="0.60" fill="#b8eaea"/>
<rect x="451.60" y="62.60" width="0.7" height="3.65" fill="#507e7e" opacity="0.85"/>
<rect x="452.50" y="62.25" width="1" height="0.95" fill="#b8eaea"/>
<rect x="453.50" y="63.07" width="1" height="0.13" fill="#b8eaea"/>
<rect x="454.50" y="61.96" width="1" height="1.24" fill="#b8eaea"/>
<rect x="455.50" y="61.21" width="1" height="1.99" fill="#c6f6f6"/>
<rect x="456.50" y="61.22" width="1" height="1.98" fill="#c6f6f6"/>
<rect x="457.50" y="61.28" width="1" height="1.92" fill="#c6f6f6"/>
<rect x="458.50" y="61.63" width="1" height="1.57" fill="#c6f6f6"/>
<rect x="458.60" y="84.27" width="0.7" height="4.13" fill="#5a8a8a" opacity="0.60"/>
<rect x="459.50" y="61.25" width="1" height="1.95" fill="#c6f6f6"/>
<rect x="459.60" y="84.16" width="0.7" height="4.24" fill="#5a8a8a" opacity="0.53"/>
<rect x="460.50" y="61.39" width="1" height="1.81" fill="#c6f6f6"/>
<rect x="461.50" y="61.38" width="1" height="1.82" fill="#c6f6f6"/>
<rect x="462.50" y="61.39" width="1" height="1.81" fill="#c6f6f6"/>
<rect x="462.60" y="82.48" width="0.7" height="5.92" fill="#5a8a8a" opacity="0.80"/>
<rect x="463.50" y="61.20" width="1" height="2.00" fill="#c6f6f6"/>
<rect x="463.60" y="83.58" width="0.7" height="4.82" fill="#5a8a8a" opacity="0.67"/>
<rect x="464.50" y="61.40" width="1" height="1.80" fill="#c6f6f6"/>
<rect x="465.50" y="61.68" width="1" height="1.52" fill="#c6f6f6"/>
<rect x="466.50" y="62.43" width="1" height="0.77" fill="#b8eaea"/>
<rect x="467.50" y="61.14" width="1" height="2.06" fill="#b8eaea"/>
<rect x="467.60" y="61.14" width="0.7" height="7.33" fill="#507e7e" opacity="0.63"/>
<rect x="468.50" y="61.18" width="1" height="2.02" fill="#b8eaea"/>
<rect x="468.60" y="61.18" width="0.7" height="7.94" fill="#507e7e" opacity="0.63"/>
<rect x="469.50" y="62.40" width="1" height="0.80" fill="#b8eaea"/>
<rect x="469.60" y="62.40" width="0.7" height="7.10" fill="#507e7e" opacity="0.83"/>
<rect x="470.50" y="61.54" width="1" height="1.66" fill="#b8eaea"/>
<rect x="470.60" y="61.54" width="0.7" height="7.21" fill="#507e7e" opacity="0.78"/>
<rect x="471.50" y="62.68" width="1" height="0.52" fill="#b8eaea"/>
<rect x="471.60" y="62.68" width="0.7" height="4.86" fill="#507e7e" opacity="0.94"/>
<rect x="472.50" y="62.48" width="1" height="0.72" fill="#b8eaea"/>
<rect x="472.60" y="62.48" width="0.7" height="5.96" fill="#507e7e" opacity="0.85"/>
<rect x="473.50" y="61.50" width="1" height="1.70" fill="#c6f6f6"/>
<rect x="474.50" y="61.64" width="1" height="1.56" fill="#c6f6f6"/>
<rect x="475.50" y="61.29" width="1" height="1.91" fill="#c6f6f6"/>
<rect x="476.50" y="61.47" width="1" height="1.73" fill="#c6f6f6"/>
<rect x="477.50" y="61.56" width="1" height="1.64" fill="#c6f6f6"/>
<rect x="478.50" y="61.62" width="1" height="1.58" fill="#c6f6f6"/>
<rect x="479.50" y="61.45" width="1" height="1.75" fill="#c6f6f6"/>
<rect x="479.60" y="82.70" width="0.7" height="5.70" fill="#5a8a8a" opacity="0.77"/>
<rect x="480.50" y="61.30" width="1" height="1.90" fill="#c6f6f6"/>
<rect x="480.60" y="85.24" width="0.7" height="3.16" fill="#5a8a8a" opacity="0.75"/>
<rect x="481.50" y="61.69" width="1" height="1.51" fill="#c6f6f6"/>
<rect x="481.60" y="85.15" width="0.7" height="3.25" fill="#5a8a8a" opacity="0.53"/>
<rect x="482.50" y="61.30" width="1" height="1.90" fill="#c6f6f6"/>
<rect x="483.50" y="61.64" width="1" height="1.56" fill="#b8eaea"/>
<rect x="484.50" y="61.13" width="1" height="2.07" fill="#b8eaea"/>
<rect x="484.60" y="61.13" width="0.7" height="3.63" fill="#507e7e" opacity="0.83"/>
<rect x="485.50" y="62.71" width="1" height="0.49" fill="#b8eaea"/>
<rect x="485.60" y="62.71" width="0.7" height="3.34" fill="#507e7e" opacity="0.76"/>
<rect x="486.50" y="62.28" width="1" height="0.92" fill="#b8eaea"/>
<rect x="487.50" y="61.08" width="1" height="2.12" fill="#b8eaea"/>
<rect x="487.60" y="61.08" width="0.7" height="4.01" fill="#507e7e" opacity="0.68"/>
<rect x="488.50" y="61.52" width="1" height="1.68" fill="#b8eaea"/>
<rect x="488.60" y="61.52" width="0.7" height="6.27" fill="#507e7e" opacity="0.68"/>
<rect x="489.50" y="61.41" width="1" height="1.79" fill="#b8eaea"/>
<rect x="489.60" y="61.41" width="0.7" height="3.95" fill="#507e7e" opacity="0.87"/>
<rect x="490.50" y="61.69" width="1" height="1.51" fill="#b8eaea"/>
<rect x="490.60" y="61.69" width="0.7" height="7.49" fill="#507e7e" opacity="0.77"/>
<rect x="491.50" y="61.18" width="1" height="2.02" fill="#c6f6f6"/>
<rect x="492.50" y="61.62" width="1" height="1.58" fill="#c6f6f6"/>
<rect x="493.50" y="61.24" width="1" height="1.96" fill="#c6f6f6"/>
<rect x="493.60" y="81.59" width="0.7" height="6.81" fill="#5a8a8a" opacity="0.64"/>
<rect x="494.50" y="61.15" width="1" height="2.05" fill="#c6f6f6"/>
<rect x="494.60" y="81.64" width="0.7" height="6.76" fill="#5a8a8a" opacity="0.77"/>
<rect x="495.50" y="61.27" width="1" height="1.93" fill="#c6f6f6"/>
<rect x="495.60" y="83.58" width="0.7" height="4.82" fill="#5a8a8a" opacity="0.56"/>
<rect x="496.50" y="61.69" width="1" height="1.51" fill="#c6f6f6"/>
<rect x="496.60" y="84.83" width="0.7" height="3.57" fill="#5a8a8a" opacity="0.45"/>
<rect x="497.50" y="61.33" width="1" height="1.87" fill="#c6f6f6"/>
<rect x="497.60" y="82.31" width="0.7" height="6.09" fill="#5a8a8a" opacity="0.74"/>
<rect x="498.50" y="61.42" width="1" height="1.78" fill="#c6f6f6"/>
<rect x="498.60" y="85.19" width="0.7" height="3.21" fill="#5a8a8a" opacity="0.58"/>
<rect x="499.50" y="61.18" width="1" height="2.02" fill="#c6f6f6"/>
<rect x="500.50" y="61.61" width="1" height="1.59" fill="#c6f6f6"/>
<rect x="501.50" y="62.14" width="1" height="1.06" fill="#b8eaea"/>
<rect x="501.60" y="62.14" width="0.7" height="8.46" fill="#507e7e" opacity="0.69"/>
<rect x="502.50" y="62.18" width="1" height="1.02" fill="#b8eaea"/>
<rect x="502.60" y="62.18" width="0.7" height="7.24" fill="#507e7e" opacity="0.60"/>
<rect x="503.50" y="62.81" width="1" height="0.39" fill="#b8eaea"/>
<rect x="504.50" y="62.81" width="1" height="0.39" fill="#b8eaea"/>
<rect x="504.60" y="62.81" width="0.7" height="4.48" fill="#507e7e" opacity="0.85"/>
<rect x="505.50" y="61.21" width="1" height="1.99" fill="#b8eaea"/>
<rect x="505.60" y="61.21" width="0.7" height="5.58" fill="#507e7e" opacity="0.93"/>
<rect x="506.50" y="62.29" width="1" height="0.91" fill="#b8eaea"/>
<rect x="507.50" y="61.67" width="1" height="1.53" fill="#b8eaea"/>
<rect x="507.60" y="61.67" width="0.7" height="5.29" fill="#507e7e" opacity="0.92"/>
<rect x="508.50" y="61.06" width="1" height="2.14" fill="#c6f6f6"/>
<rect x="509.50" y="61.58" width="1" height="1.62" fill="#c6f6f6"/>
<rect x="510.50" y="61.15" width="1" height="2.05" fill="#c6f6f6"/>
<rect x="510.60" y="83.53" width="0.7" height="4.87" fill="#5a8a8a" opacity="0.51"/>
<rect x="511.50" y="61.58" width="1" height="1.62" fill="#c6f6f6"/>
<rect x="511.60" y="84.50" width="0.7" height="3.90" fill="#5a8a8a" opacity="0.48"/>
<rect x="512.50" y="61.21" width="1" height="1.99" fill="#c6f6f6"/>
<rect x="512.60" y="82.68" width="0.7" height="5.72" fill="#5a8a8a" opacity="0.59"/>
<rect x="513.50" y="61.48" width="1" height="1.72" fill="#c6f6f6"/>
<rect x="513.60" y="84.13" width="0.7" height="4.27" fill="#5a8a8a" opacity="0.63"/>
<rect x="514.50" y="61.68" width="1" height="1.52" fill="#c6f6f6"/>
<rect x="515.50" y="61.46" width="1" height="1.74" fill="#c6f6f6"/>
<rect x="515.60" y="84.20" width="0.7" height="4.20" fill="#5a8a8a" opacity="0.73"/>
<rect x="516.50" y="61.17" width="1" height="2.03" fill="#c6f6f6"/>
<rect x="516.60" y="83.84" width="0.7" height="4.56" fill="#5a8a8a" opacity="0.45"/>
<rect x="517.50" y="61.69" width="1" height="1.51" fill="#c6f6f6"/>
<rect x="518.50" y="61.56" width="1" height="1.64" fill="#c6f6f6"/>
<rect x="519.50" y="61.45" width="1" height="1.75" fill="#b8eaea"/>
<rect x="519.60" y="61.45" width="0.7" height="4.60" fill="#507e7e" opacity="0.73"/>
<rect x="520.50" y="62.19" width="1" height="1.01" fill="#b8eaea"/>
<rect x="520.60" y="62.19" width="0.7" height="4.86" fill="#507e7e" opacity="0.74"/>
<rect x="521.50" y="62.47" width="1" height="0.73" fill="#b8eaea"/>
<rect x="521.60" y="62.47" width="0.7" height="4.10" fill="#507e7e" opacity="0.86"/>
<rect x="522.50" y="61.72" width="1" height="1.48" fill="#b8eaea"/>
<rect x="523.50" y="62.24" width="1" height="0.96" fill="#b8eaea"/>
<rect x="523.60" y="62.24" width="0.7" height="4.82" fill="#507e7e" opacity="0.89"/>
<rect x="524.50" y="61.20" width="1" height="2.00" fill="#b8eaea"/>
<rect x="524.60" y="61.20" width="0.7" height="3.52" fill="#507e7e" opacity="0.84"/>
<rect x="525.50" y="62.56" width="1" height="0.64" fill="#b8eaea"/>
<rect x="525.60" y="62.56" width="0.7" height="5.21" fill="#507e7e" opacity="0.89"/>
<rect x="526.50" y="61.41" width="1" height="1.79" fill="#c6f6f6"/>
<rect x="527.50" y="61.06" width="1" height="2.14" fill="#c6f6f6"/>
<rect x="528.50" y="61.16" width="1" height="2.04" fill="#c6f6f6"/>
<rect x="528.60" y="85.34" width="0.7" height="3.06" fill="#5a8a8a" opacity="0.61"/>
<rect x="529.50" y="61.05" width="1" height="2.15" fill="#c6f6f6"/>
<rect x="530.50" y="61.30" width="1" height="1.90" fill="#c6f6f6"/>
<rect x="530.60" y="82.99" width="0.7" height="5.41" fill="#5a8a8a" opacity="0.76"/>
<rect x="531.50" y="61.57" width="1" height="1.63" fill="#c6f6f6"/>
<rect x="531.60" y="84.41" width="0.7" height="3.99" fill="#5a8a8a" opacity="0.61"/>
<rect x="532.50" y="61.01" width="1" height="2.19" fill="#c6f6f6"/>
<rect x="532.60" y="82.75" width="0.7" height="5.65" fill="#5a8a8a" opacity="0.84"/>
<rect x="533.50" y="61.55" width="1" height="1.65" fill="#c6f6f6"/>
<rect x="533.60" y="83.16" width="0.7" height="5.24" fill="#5a8a8a" opacity="0.46"/>
<rect x="534.50" y="61.23" width="1" height="1.97" fill="#c6f6f6"/>
<rect x="534.60" y="82.97" width="0.7" height="5.43" fill="#5a8a8a" opacity="0.49"/>
<rect x="535.50" y="61.26" width="1" height="1.94" fill="#c6f6f6"/>
<rect x="536.50" y="62.12" width="1" height="1.08" fill="#b8eaea"/>
<rect x="536.60" y="62.12" width="0.7" height="7.54" fill="#507e7e" opacity="0.81"/>
<rect x="537.50" y="61.35" width="1" height="1.85" fill="#b8eaea"/>
<rect x="537.60" y="61.35" width="0.7" height="7.97" fill="#507e7e" opacity="0.79"/>
<rect x="538.50" y="61.78" width="1" height="1.42" fill="#b8eaea"/>
<rect x="538.60" y="61.78" width="0.7" height="3.78" fill="#507e7e" opacity="0.85"/>
<rect x="539.50" y="63.17" width="1" height="0.03" fill="#b8eaea"/>
<rect x="539.60" y="63.17" width="0.7" height="6.93" fill="#507e7e" opacity="0.89"/>
<rect x="540.50" y="61.43" width="1" height="1.77" fill="#b8eaea"/>
<rect x="541.50" y="62.38" width="1" height="0.82" fill="#b8eaea"/>
<rect x="541.60" y="62.38" width="0.7" height="3.46" fill="#507e7e" opacity="0.69"/>
<rect x="542.50" y="62.27" width="1" height="0.93" fill="#b8eaea"/>
<rect x="542.60" y="62.27" width="0.7" height="4.81" fill="#507e7e" opacity="0.93"/>
<rect x="543.50" y="61.79" width="1" height="1.41" fill="#b8eaea"/>
<rect x="543.60" y="61.79" width="0.7" height="3.68" fill="#507e7e" opacity="0.94"/>
<rect x="544.50" y="61.09" width="1" height="2.11" fill="#c6f6f6"/>
<rect x="545.50" y="61.63" width="1" height="1.57" fill="#c6f6f6"/>
<rect x="546.50" y="61.38" width="1" height="1.82" fill="#c6f6f6"/>
<rect x="546.60" y="83.38" width="0.7" height="5.02" fill="#5a8a8a" opacity="0.56"/>
<rect x="547.50" y="61.64" width="1" height="1.56" fill="#c6f6f6"/>
<rect x="548.50" y="61.57" width="1" height="1.63" fill="#c6f6f6"/>
<rect x="548.60" y="85.35" width="0.7" height="3.05" fill="#5a8a8a" opacity="0.78"/>
<rect x="549.50" y="61.20" width="1" height="2.00" fill="#c6f6f6"/>
<rect x="550.50" y="61.17" width="1" height="2.03" fill="#c6f6f6"/>
<rect x="550.60" y="82.16" width="0.7" height="6.24" fill="#5a8a8a" opacity="0.52"/>
<rect x="551.50" y="61.38" width="1" height="1.82" fill="#c6f6f6"/>
<rect x="551.60" y="85.76" width="0.7" height="2.64" fill="#5a8a8a" opacity="0.52"/>
<rect x="552.50" y="61.69" width="1" height="1.51" fill="#c6f6f6"/>
<rect x="553.50" y="61.66" width="1" height="1.54" fill="#c6f6f6"/>
<rect x="554.50" y="62.45" width="1" height="0.75" fill="#b8eaea"/>
<rect x="554.60" y="62.45" width="0.7" height="6.69" fill="#507e7e" opacity="0.86"/>
<rect x="555.50" y="61.84" width="1" height="1.36" fill="#b8eaea"/>
<rect x="555.60" y="61.84" width="0.7" height="7.42" fill="#507e7e" opacity="0.61"/>
<rect x="556.50" y="61.44" width="1" height="1.76" fill="#b8eaea"/>
<rect x="556.60" y="61.44" width="0.7" height="3.79" fill="#507e7e" opacity="0.74"/>
<rect x="557.50" y="62.25" width="1" height="0.95" fill="#b8eaea"/>
<rect x="557.60" y="62.25" width="0.7" height="5.86" fill="#507e7e" opacity="0.69"/>
<rect x="558.50" y="62.25" width="1" height="0.95" fill="#b8eaea"/>
<rect x="558.60" y="62.25" width="0.7" height="6.53" fill="#507e7e" opacity="0.61"/>
<rect x="559.50" y="62.48" width="1" height="0.72" fill="#b8eaea"/>
<rect x="559.60" y="62.48" width="0.7" height="8.28" fill="#507e7e" opacity="0.81"/>
<rect x="560.50" y="62.03" width="1" height="1.17" fill="#b8eaea"/>
<rect x="560.60" y="62.03" width="0.7" height="6.43" fill="#507e7e" opacity="0.84"/>
<rect x="561.50" y="62.67" width="1" height="0.53" fill="#b8eaea"/>
<rect x="561.60" y="62.67" width="0.7" height="5.67" fill="#507e7e" opacity="0.95"/>
<rect x="562.50" y="61.59" width="1" height="1.61" fill="#c6f6f6"/>
<rect x="563.50" y="61.60" width="1" height="1.60" fill="#c6f6f6"/>
<rect x="563.60" y="83.95" width="0.7" height="4.45" fill="#5a8a8a" opacity="0.68"/>
<rect x="564.50" y="61.63" width="1" height="1.57" fill="#c6f6f6"/>
<rect x="564.60" y="83.54" width="0.7" height="4.86" fill="#5a8a8a" opacity="0.62"/>
<rect x="565.50" y="61.63" width="1" height="1.57" fill="#c6f6f6"/>
<rect x="565.60" y="85.65" width="0.7" height="2.75" fill="#5a8a8a" opacity="0.74"/>
<rect x="566.50" y="61.63" width="1" height="1.57" fill="#c6f6f6"/>
<rect x="567.50" y="61.42" width="1" height="1.78" fill="#c6f6f6"/>
<rect x="568.50" y="61.21" width="1" height="1.99" fill="#c6f6f6"/>
<rect x="568.60" y="85.59" width="0.7" height="2.81" fill="#5a8a8a" opacity="0.50"/>
<rect x="569.50" y="61.31" width="1" height="1.89" fill="#c6f6f6"/>
<rect x="569.60" y="84.11" width="0.7" height="4.29" fill="#5a8a8a" opacity="0.47"/>
<rect x="570.50" y="61.49" width="1" height="1.71" fill="#c6f6f6"/>
<rect x="571.50" y="61.37" width="1" height="1.83" fill="#c6f6f6"/>
<rect x="572.50" y="61.53" width="1" height="1.67" fill="#b8eaea"/>
<rect x="572.60" y="61.53" width="0.7" height="5.18" fill="#507e7e" opacity="0.68"/>
<rect x="573.50" y="61.15" width="1" height="2.05" fill="#b8eaea"/>
<rect x="574.50" y="63.13" width="1" height="0.07" fill="#b8eaea"/>
<rect x="574.60" y="63.13" width="0.7" height="7.77" fill="#507e7e" opacity="0.75"/>
<rect x="575.50" y="62.77" width="1" height="0.43" fill="#b8eaea"/>
<rect x="575.60" y="62.77" width="0.7" height="7.11" fill="#507e7e" opacity="0.80"/>
<rect x="576.50" y="62.99" width="1" height="0.21" fill="#b8eaea"/>
<rect x="576.60" y="62.99" width="0.7" height="7.36" fill="#507e7e" opacity="0.64"/>
<rect x="577.50" y="62.18" width="1" height="1.02" fill="#b8eaea"/>
<rect x="578.50" y="61.00" width="1" height="2.20" fill="#b8eaea"/>
<rect x="578.60" y="61.00" width="0.7" height="4.65" fill="#507e7e" opacity="0.71"/>
<rect x="579.50" y="61.04" width="1" height="2.16" fill="#c6f6f6"/>
<rect x="580.50" y="61.63" width="1" height="1.57" fill="#c6f6f6"/>
<rect x="581.50" y="61.57" width="1" height="1.63" fill="#c6f6f6"/>
<rect x="581.60" y="84.30" width="0.7" height="4.10" fill="#5a8a8a" opacity="0.68"/>
<rect x="582.50" y="61.03" width="1" height="2.17" fill="#c6f6f6"/>
<rect x="582.60" y="81.86" width="0.7" height="6.54" fill="#5a8a8a" opacity="0.57"/>
<rect x="583.50" y="61.35" width="1" height="1.85" fill="#c6f6f6"/>
<rect x="584.50" y="61.68" width="1" height="1.52" fill="#c6f6f6"/>
<rect x="584.60" y="84.97" width="0.7" height="3.43" fill="#5a8a8a" opacity="0.57"/>
<rect x="585.50" y="61.65" width="1" height="1.55" fill="#c6f6f6"/>
<rect x="586.50" y="61.14" width="1" height="2.06" fill="#c6f6f6"/>
<rect x="587.50" y="61.25" width="1" height="1.95" fill="#c6f6f6"/>
<rect x="587.60" y="85.13" width="0.7" height="3.27" fill="#5a8a8a" opacity="0.80"/>
<rect x="588.50" y="61.70" width="1" height="1.50" fill="#c6f6f6"/>
<rect x="589.50" y="61.44" width="1" height="1.76" fill="#b8eaea"/>
<rect x="589.60" y="61.44" width="0.7" height="4.05" fill="#507e7e" opacity="0.91"/>
<rect x="590.50" y="61.11" width="1" height="2.09" fill="#b8eaea"/>
<rect x="590.60" y="61.11" width="0.7" height="6.99" fill="#507e7e" opacity="0.71"/>
<rect x="591.50" y="62.98" width="1" height="0.22" fill="#b8eaea"/>
<rect x="592.50" y="62.57" width="1" height="0.63" fill="#b8eaea"/>
<rect x="592.60" y="62.57" width="0.7" height="6.83" fill="#507e7e" opacity="0.93"/>
<rect x="593.50" y="61.98" width="1" height="1.22" fill="#b8eaea"/>
<rect x="593.60" y="61.98" width="0.7" height="4.23" fill="#507e7e" opacity="0.71"/>
<rect x="594.50" y="62.56" width="1" height="0.64" fill="#b8eaea"/>
<rect x="594.60" y="62.56" width="0.7" height="4.00" fill="#507e7e" opacity="0.68"/>
<rect x="595.50" y="62.46" width="1" height="0.74" fill="#b8eaea"/>
<rect x="595.60" y="62.46" width="0.7" height="5.05" fill="#507e7e" opacity="0.83"/>
<rect x="596.50" y="62.95" width="1" height="0.25" fill="#b8eaea"/>
<rect x="596.60" y="62.95" width="0.7" height="4.26" fill="#507e7e" opacity="0.71"/>
<rect x="597.50" y="61.65" width="1" height="1.55" fill="#c6f6f6"/>
<rect x="598.50" y="61.47" width="1" height="1.73" fill="#c6f6f6"/>
<rect x="599.50" y="61.19" width="1" height="2.01" fill="#c6f6f6"/>
<rect x="599.60" y="85.50" width="0.7" height="2.90" fill="#5a8a8a" opacity="0.84"/>
<rect x="600.50" y="61.31" width="1" height="1.89" fill="#c6f6f6"/>
<rect x="600.60" y="83.51" width="0.7" height="4.89" fill="#5a8a8a" opacity="0.47"/>
<rect x="601.50" y="61.42" width="1" height="1.78" fill="#c6f6f6"/>
<rect x="601.60" y="84.77" width="0.7" height="3.63" fill="#5a8a8a" opacity="0.77"/>
<rect x="602.50" y="61.06" width="1" height="2.14" fill="#c6f6f6"/>
<rect x="602.60" y="82.50" width="0.7" height="5.90" fill="#5a8a8a" opacity="0.55"/>
<rect x="603.50" y="61.20" width="1" height="2.00" fill="#c6f6f6"/>
<rect x="603.60" y="85.06" width="0.7" height="3.34" fill="#5a8a8a" opacity="0.81"/>
<rect x="604.50" y="61.69" width="1" height="1.51" fill="#c6f6f6"/>
<rect x="604.60" y="83.82" width="0.7" height="4.58" fill="#5a8a8a" opacity="0.75"/>
<rect x="605.50" y="61.27" width="1" height="1.93" fill="#c6f6f6"/>
<rect x="606.50" y="61.65" width="1" height="1.55" fill="#c6f6f6"/>
<rect x="607.50" y="62.10" width="1" height="1.10" fill="#b8eaea"/>
<rect x="607.60" y="62.10" width="0.7" height="6.06" fill="#507e7e" opacity="0.83"/>
<rect x="608.50" y="61.79" width="1" height="1.41" fill="#b8eaea"/>
<rect x="608.60" y="61.79" width="0.7" height="7.31" fill="#507e7e" opacity="0.78"/>
<rect x="609.50" y="62.11" width="1" height="1.09" fill="#b8eaea"/>
<rect x="610.50" y="62.51" width="1" height="0.69" fill="#b8eaea"/>
<rect x="610.60" y="62.51" width="0.7" height="8.23" fill="#507e7e" opacity="0.66"/>
<rect x="611.50" y="62.72" width="1" height="0.48" fill="#b8eaea"/>
<rect x="611.60" y="62.72" width="0.7" height="6.34" fill="#507e7e" opacity="0.68"/>
<rect x="612.50" y="61.97" width="1" height="1.23" fill="#b8eaea"/>
<rect x="612.60" y="61.97" width="0.7" height="7.33" fill="#507e7e" opacity="0.88"/>
<rect x="613.50" y="61.52" width="1" height="1.68" fill="#b8eaea"/>
<rect x="613.60" y="61.52" width="0.7" height="4.22" fill="#507e7e" opacity="0.80"/>
<rect x="614.50" y="62.10" width="1" height="1.10" fill="#b8eaea"/>
<rect x="614.60" y="62.10" width="0.7" height="6.28" fill="#507e7e" opacity="0.85"/>
<rect x="615.50" y="61.40" width="1" height="1.80" fill="#c6f6f6"/>
<rect x="616.50" y="61.61" width="1" height="1.59" fill="#c6f6f6"/>
<rect x="616.60" y="85.22" width="0.7" height="3.18" fill="#5a8a8a" opacity="0.46"/>
<rect x="617.50" y="61.35" width="1" height="1.85" fill="#c6f6f6"/>
<rect x="617.60" y="83.91" width="0.7" height="4.49" fill="#5a8a8a" opacity="0.56"/>
<rect x="618.50" y="61.56" width="1" height="1.64" fill="#c6f6f6"/>
<rect x="618.60" y="81.82" width="0.7" height="6.58" fill="#5a8a8a" opacity="0.68"/>
<rect x="619.50" y="61.38" width="1" height="1.82" fill="#c6f6f6"/>
<rect x="620.50" y="61.17" width="1" height="2.03" fill="#c6f6f6"/>
<rect x="620.60" y="84.50" width="0.7" height="3.90" fill="#5a8a8a" opacity="0.47"/>
<rect x="621.50" y="61.22" width="1" height="1.98" fill="#c6f6f6"/>
<rect x="621.60" y="83.54" width="0.7" height="4.86" fill="#5a8a8a" opacity="0.56"/>
<rect x="622.50" y="61.41" width="1" height="1.79" fill="#c6f6f6"/>
<rect x="622.60" y="82.21" width="0.7" height="6.19" fill="#5a8a8a" opacity="0.52"/>
<rect x="623.50" y="61.18" width="1" height="2.02" fill="#c6f6f6"/>
<rect x="624.50" y="61.11" width="1" height="2.09" fill="#c6f6f6"/>
<rect x="625.50" y="62.52" width="1" height="0.68" fill="#b8eaea"/>
<rect x="626.50" y="62.73" width="1" height="0.47" fill="#b8eaea"/>
<rect x="626.60" y="62.73" width="0.7" height="5.26" fill="#507e7e" opacity="0.73"/>
<rect x="627.50" y="61.48" width="1" height="1.72" fill="#b8eaea"/>
<rect x="628.50" y="61.09" width="1" height="2.11" fill="#b8eaea"/>
<rect x="628.60" y="61.09" width="0.7" height="7.19" fill="#507e7e" opacity="0.95"/>
<rect x="629.50" y="61.32" width="1" height="1.88" fill="#b8eaea"/>
<rect x="629.60" y="61.32" width="0.7" height="7.10" fill="#507e7e" opacity="0.61"/>
<rect x="630.50" y="61.53" width="1" height="1.67" fill="#b8eaea"/>
<rect x="631.50" y="61.31" width="1" height="1.89" fill="#b8eaea"/>
<rect x="631.60" y="61.31" width="0.7" height="4.64" fill="#507e7e" opacity="0.75"/>
<rect x="632.50" y="61.05" width="1" height="2.15" fill="#c6f6f6"/>
<rect x="633.50" y="61.02" width="1" height="2.18" fill="#c6f6f6"/>
<rect x="634.50" y="61.70" width="1" height="1.50" fill="#c6f6f6"/>
<rect x="635.50" y="61.51" width="1" height="1.69" fill="#c6f6f6"/>
<rect x="635.60" y="84.76" width="0.7" height="3.64" fill="#5a8a8a" opacity="0.67"/>
<rect x="636.50" y="61.17" width="1" height="2.03" fill="#c6f6f6"/>
<rect x="636.60" y="81.70" width="0.7" height="6.70" fill="#5a8a8a" opacity="0.60"/>
<rect x="637.50" y="61.24" width="1" height="1.96" fill="#c6f6f6"/>
<rect x="638.50" y="61.43" width="1" height="1.77" fill="#c6f6f6"/>
<rect x="638.60" y="84.09" width="0.7" height="4.31" fill="#5a8a8a" opacity="0.71"/>
<rect x="639.50" y="61.04" width="1" height="2.16" fill="#c6f6f6"/>
<rect x="639.60" y="82.77" width="0.7" height="5.63" fill="#5a8a8a" opacity="0.80"/>
<rect x="640.50" y="61.41" width="1" height="1.79" fill="#c6f6f6"/>
<rect x="641.50" y="61.32" width="1" height="1.88" fill="#c6f6f6"/>
<rect x="642.50" y="61.28" width="1" height="1.92" fill="#c6f6f6"/>
<rect x="643.50" y="62.85" width="1" height="0.35" fill="#b8eaea"/>
<rect x="643.60" y="62.85" width="0.7" height="7.30" fill="#507e7e" opacity="0.68"/>
<rect x="644.50" y="61.76" width="1" height="1.44" fill="#b8eaea"/>
<rect x="644.60" y="61.76" width="0.7" height="6.02" fill="#507e7e" opacity="0.66"/>
<rect x="645.50" y="61.45" width="1" height="1.75" fill="#b8eaea"/>
<rect x="645.60" y="61.45" width="0.7" height="5.57" fill="#507e7e" opacity="0.71"/>
<rect x="646.50" y="61.98" width="1" height="1.22" fill="#b8eaea"/>
<rect x="647.50" y="62.49" width="1" height="0.71" fill="#b8eaea"/>
<rect x="648.50" y="61.45" width="1" height="1.75" fill="#b8eaea"/>
<rect x="648.60" y="61.45" width="0.7" height="3.40" fill="#507e7e" opacity="0.84"/>
<rect x="649.50" y="61.80" width="1" height="1.40" fill="#b8eaea"/>
<rect x="649.60" y="61.80" width="0.7" height="3.10" fill="#507e7e" opacity="0.66"/>
<rect x="650.50" y="61.18" width="1" height="2.02" fill="#c6f6f6"/>
<rect x="651.50" y="61.28" width="1" height="1.92" fill="#c6f6f6"/>
<rect x="652.50" y="61.65" width="1" height="1.55" fill="#c6f6f6"/>
<rect x="653.50" y="61.19" width="1" height="2.01" fill="#c6f6f6"/>
<rect x="653.60" y="85.21" width="0.7" height="3.19" fill="#5a8a8a" opacity="0.82"/>
<rect x="654.50" y="61.25" width="1" height="1.95" fill="#c6f6f6"/>
<rect x="655.50" y="61.51" width="1" height="1.69" fill="#c6f6f6"/>
<rect x="656.50" y="61.01" width="1" height="2.19" fill="#c6f6f6"/>
<rect x="656.60" y="84.17" width="0.7" height="4.23" fill="#5a8a8a" opacity="0.48"/>
<rect x="657.50" y="61.62" width="1" height="1.58" fill="#c6f6f6"/>
<rect x="657.60" y="82.43" width="0.7" height="5.97" fill="#5a8a8a" opacity="0.66"/>
<rect x="658.50" y="61.04" width="1" height="2.16" fill="#c6f6f6"/>
<rect x="658.60" y="84.83" width="0.7" height="3.57" fill="#5a8a8a" opacity="0.47"/>
<rect x="659.50" y="61.11" width="1" height="2.09" fill="#c6f6f6"/>
<rect x="660.50" y="62.31" width="1" height="0.89" fill="#b8eaea"/>
<rect x="660.60" y="62.31" width="0.7" height="4.72" fill="#507e7e" opacity="0.75"/>
<rect x="661.50" y="62.20" width="1" height="1.00" fill="#b8eaea"/>
<rect x="661.60" y="62.20" width="0.7" height="6.89" fill="#507e7e" opacity="0.69"/>
<rect x="662.50" y="62.60" width="1" height="0.60" fill="#b8eaea"/>
<rect x="662.60" y="62.60" width="0.7" height="3.81" fill="#507e7e" opacity="0.67"/>
<rect x="663.50" y="61.62" width="1" height="1.58" fill="#b8eaea"/>
<rect x="663.60" y="61.62" width="0.7" height="5.23" fill="#507e7e" opacity="0.74"/>
<rect x="664.50" y="62.91" width="1" height="0.29" fill="#b8eaea"/>
<rect x="664.60" y="62.91" width="0.7" height="4.61" fill="#507e7e" opacity="0.72"/>
<rect x="665.50" y="61.47" width="1" height="1.73" fill="#b8eaea"/>
<rect x="665.60" y="61.47" width="0.7" height="3.13" fill="#507e7e" opacity="0.82"/>
<rect x="666.50" y="62.25" width="1" height="0.95" fill="#b8eaea"/>
<rect x="667.50" y="63.15" width="1" height="0.05" fill="#b8eaea"/>
<rect x="667.60" y="63.15" width="0.7" height="6.69" fill="#507e7e" opacity="0.92"/>
<rect x="668.50" y="61.15" width="1" height="2.05" fill="#c6f6f6"/>
<rect x="669.50" y="61.48" width="1" height="1.72" fill="#c6f6f6"/>
<rect x="669.60" y="81.60" width="0.7" height="6.80" fill="#5a8a8a" opacity="0.80"/>
<rect x="670.50" y="61.16" width="1" height="2.04" fill="#c6f6f6"/>
<rect x="670.60" y="85.50" width="0.7" height="2.90" fill="#5a8a8a" opacity="0.62"/>
<rect x="671.50" y="61.27" width="1" height="1.93" fill="#c6f6f6"/>
<rect x="671.60" y="84.17" width="0.7" height="4.23" fill="#5a8a8a" opacity="0.58"/>
<rect x="672.50" y="61.35" width="1" height="1.85" fill="#c6f6f6"/>
<rect x="672.60" y="85.19" width="0.7" height="3.21" fill="#5a8a8a" opacity="0.61"/>
<rect x="673.50" y="61.33" width="1" height="1.87" fill="#c6f6f6"/>
<rect x="673.60" y="82.91" width="0.7" height="5.49" fill="#5a8a8a" opacity="0.55"/>
<rect x="674.50" y="61.07" width="1" height="2.13" fill="#c6f6f6"/>
<rect x="674.60" y="84.00" width="0.7" height="4.40" fill="#5a8a8a" opacity="0.51"/>
<rect x="675.50" y="61.41" width="1" height="1.79" fill="#c6f6f6"/>
<rect x="676.50" y="61.39" width="1" height="1.81" fill="#c6f6f6"/>
<rect x="677.50" y="61.49" width="1" height="1.71" fill="#c6f6f6"/>
<rect x="678.50" y="61.05" width="1" height="2.15" fill="#b8eaea"/>
<rect x="678.60" y="61.05" width="0.7" height="5.00" fill="#507e7e" opacity="0.62"/>
<rect x="679.50" y="61.89" width="1" height="1.31" fill="#b8eaea"/>
<rect x="679.60" y="61.89" width="0.7" height="5.73" fill="#507e7e" opacity="0.81"/>
<rect x="680.50" y="62.03" width="1" height="1.17" fill="#b8eaea"/>
<rect x="680.60" y="62.03" width="0.7" height="4.39" fill="#507e7e" opacity="0.61"/>
<rect x="681.50" y="61.76" width="1" height="1.44" fill="#b8eaea"/>
<rect x="682.50" y="62.24" width="1" height="0.96" fill="#b8eaea"/>
<rect x="682.60" y="62.24" width="0.7" height="6.67" fill="#507e7e" opacity="0.67"/>
<rect x="683.50" y="62.03" width="1" height="1.17" fill="#b8eaea"/>
<rect x="683.60" y="62.03" width="0.7" height="8.25" fill="#507e7e" opacity="0.73"/>
<rect x="684.50" y="62.27" width="1" height="0.93" fill="#b8eaea"/>
<rect x="685.50" y="61.54" width="1" height="1.66" fill="#c6f6f6"/>
<rect x="686.50" y="61.44" width="1" height="1.76" fill="#c6f6f6"/>
<rect x="687.50" y="61.43" width="1" height="1.77" fill="#c6f6f6"/>
<rect x="687.60" y="84.03" width="0.7" height="4.37" fill="#5a8a8a" opacity="0.56"/>
<rect x="688.50" y="61.58" width="1" height="1.62" fill="#c6f6f6"/>
<rect x="689.50" y="61.27" width="1" height="1.93" fill="#c6f6f6"/>
<rect x="690.50" y="61.03" width="1" height="2.17" fill="#c6f6f6"/>
<rect x="690.60" y="83.62" width="0.7" height="4.78" fill="#5a8a8a" opacity="0.57"/>
<rect x="691.50" y="61.25" width="1" height="1.95" fill="#c6f6f6"/>
<rect x="692.50" y="61.10" width="1" height="2.10" fill="#c6f6f6"/>
<rect x="692.60" y="84.87" width="0.7" height="3.53" fill="#5a8a8a" opacity="0.72"/>
<rect x="693.50" y="61.16" width="1" height="2.04" fill="#c6f6f6"/>
<rect x="693.60" y="83.45" width="0.7" height="4.95" fill="#5a8a8a" opacity="0.61"/>
<rect x="694.50" y="61.17" width="1" height="2.03" fill="#c6f6f6"/>
<rect x="695.50" y="61.35" width="1" height="1.85" fill="#c6f6f6"/>
<rect x="696.50" y="62.43" width="1" height="0.77" fill="#b8eaea"/>
<rect x="696.60" y="62.43" width="0.7" height="6.43" fill="#507e7e" opacity="0.80"/>
<rect x="697.50" y="62.83" width="1" height="0.37" fill="#b8eaea"/>
<rect x="698.50" y="61.73" width="1" height="1.47" fill="#b8eaea"/>
<rect x="698.60" y="61.73" width="0.7" height="7.87" fill="#507e7e" opacity="0.71"/>
<rect x="699.50" y="62.58" width="1" height="0.62" fill="#b8eaea"/>
<rect x="699.60" y="62.58" width="0.7" height="6.78" fill="#507e7e" opacity="0.94"/>
<rect x="700.50" y="62.81" width="1" height="0.39" fill="#b8eaea"/>
<rect x="700.60" y="62.81" width="0.7" height="6.42" fill="#507e7e" opacity="0.77"/>
<rect x="701.50" y="62.24" width="1" height="0.96" fill="#b8eaea"/>
<rect x="701.60" y="62.24" width="0.7" height="4.57" fill="#507e7e" opacity="0.86"/>
<rect x="702.50" y="62.17" width="1" height="1.03" fill="#b8eaea"/>
<rect x="702.60" y="62.17" width="0.7" height="4.37" fill="#507e7e" opacity="0.71"/>
<rect x="703.50" y="61.12" width="1" height="2.08" fill="#c6f6f6"/>
<rect x="704.50" y="61.36" width="1" height="1.84" fill="#c6f6f6"/>
<rect x="705.50" y="61.09" width="1" height="2.11" fill="#c6f6f6"/>
<rect x="705.60" y="85.59" width="0.7" height="2.81" fill="#5a8a8a" opacity="0.49"/>
<rect x="706.50" y="61.49" width="1" height="1.71" fill="#c6f6f6"/>
<rect x="706.60" y="83.87" width="0.7" height="4.53" fill="#5a8a8a" opacity="0.76"/>
<rect x="707.50" y="61.34" width="1" height="1.86" fill="#c6f6f6"/>
<rect x="707.60" y="82.00" width="0.7" height="6.40" fill="#5a8a8a" opacity="0.80"/>
<rect x="708.50" y="61.04" width="1" height="2.16" fill="#c6f6f6"/>
<rect x="708.60" y="83.62" width="0.7" height="4.78" fill="#5a8a8a" opacity="0.77"/>
<rect x="709.50" y="61.27" width="1" height="1.93" fill="#c6f6f6"/>
<rect x="710.50" y="61.18" width="1" height="2.02" fill="#c6f6f6"/>
<rect x="711.50" y="61.23" width="1" height="1.97" fill="#c6f6f6"/>
<rect x="711.60" y="82.48" width="0.7" height="5.92" fill="#5a8a8a" opacity="0.79"/>
<rect x="712.50" y="61.58" width="1" height="1.62" fill="#c6f6f6"/>
<rect x="713.50" y="62.25" width="1" height="0.95" fill="#b8eaea"/>
<rect x="713.60" y="62.25" width="0.7" height="6.89" fill="#507e7e" opacity="0.82"/>
<rect x="714.50" y="62.83" width="1" height="0.37" fill="#b8eaea"/>
<rect x="715.50" y="61.28" width="1" height="1.92" fill="#b8eaea"/>
<rect x="715.60" y="61.28" width="0.7" height="6.68" fill="#507e7e" opacity="0.68"/>
<rect x="716.50" y="61.41" width="1" height="1.79" fill="#b8eaea"/>
<rect x="716.60" y="61.41" width="0.7" height="6.22" fill="#507e7e" opacity="0.93"/>
<rect x="717.50" y="63.13" width="1" height="0.07" fill="#b8eaea"/>
<rect x="717.60" y="63.13" width="0.7" height="6.78" fill="#507e7e" opacity="0.75"/>
<rect x="718.50" y="62.39" width="1" height="0.81" fill="#b8eaea"/>
<rect x="718.60" y="62.39" width="0.7" height="8.13" fill="#507e7e" opacity="0.95"/>
<rect x="719.50" y="61.11" width="1" height="2.09" fill="#b8eaea"/>
<rect x="719.60" y="61.11" width="0.7" height="3.65" fill="#507e7e" opacity="0.61"/>
<rect x="720.50" y="61.63" width="1" height="1.57" fill="#b8eaea"/>
<rect x="720.60" y="61.63" width="0.7" height="8.46" fill="#507e7e" opacity="0.64"/>
<rect x="721.50" y="61.23" width="1" height="1.97" fill="#c6f6f6"/>
<rect x="722.50" y="61.02" width="1" height="2.18" fill="#c6f6f6"/>
<rect x="723.50" y="61.38" width="1" height="1.82" fill="#c6f6f6"/>
<rect x="723.60" y="84.22" width="0.7" height="4.18" fill="#5a8a8a" opacity="0.57"/>
<rect x="724.50" y="61.56" width="1" height="1.64" fill="#c6f6f6"/>
<rect x="725.50" y="61.20" width="1" height="2.00" fill="#c6f6f6"/>
<rect x="725.60" y="83.12" width="0.7" height="5.28" fill="#5a8a8a" opacity="0.76"/>
<rect x="726.50" y="61.69" width="1" height="1.51" fill="#c6f6f6"/>
<rect x="726.60" y="82.78" width="0.7" height="5.62" fill="#5a8a8a" opacity="0.67"/>
<rect x="727.50" y="61.56" width="1" height="1.64" fill="#c6f6f6"/>
<rect x="727.60" y="85.11" width="0.7" height="3.29" fill="#5a8a8a" opacity="0.49"/>
<rect x="728.50" y="61.65" width="1" height="1.55" fill="#c6f6f6"/>
<rect x="728.60" y="83.70" width="0.7" height="4.70" fill="#5a8a8a" opacity="0.50"/>
<rect x="729.50" y="61.23" width="1" height="1.97" fill="#c6f6f6"/>
<rect x="730.50" y="61.01" width="1" height="2.19" fill="#c6f6f6"/>
<rect x="731.50" y="62.25" width="1" height="0.95" fill="#b8eaea"/>
<rect x="731.60" y="62.25" width="0.7" height="6.44" fill="#507e7e" opacity="0.70"/>
<rect x="732.50" y="61.50" width="1" height="1.70" fill="#b8eaea"/>
<rect x="732.60" y="61.50" width="0.7" height="5.01" fill="#507e7e" opacity="0.69"/>
<rect x="733.50" y="61.11" width="1" height="2.09" fill="#b8eaea"/>
<rect x="733.60" y="61.11" width="0.7" height="7.91" fill="#507e7e" opacity="0.71"/>
<rect x="734.50" y="61.17" width="1" height="2.03" fill="#b8eaea"/>
<rect x="734.60" y="61.17" width="0.7" height="5.66" fill="#507e7e" opacity="0.95"/>
<rect x="735.50" y="61.44" width="1" height="1.76" fill="#b8eaea"/>
<rect x="736.50" y="62.07" width="1" height="1.13" fill="#b8eaea"/>
<rect x="736.60" y="62.07" width="0.7" height="7.44" fill="#507e7e" opacity="0.74"/>
<rect x="737.50" y="61.13" width="1" height="2.07" fill="#b8eaea"/>
<rect x="737.60" y="61.13" width="0.7" height="6.61" fill="#507e7e" opacity="0.82"/>
<rect x="738.50" y="61.61" width="1" height="1.59" fill="#b8eaea"/>
<rect x="739.50" y="61.61" width="1" height="1.59" fill="#c6f6f6"/>
<rect x="740.50" y="61.70" width="1" height="1.50" fill="#c6f6f6"/>
<rect x="740.60" y="82.15" width="0.7" height="6.25" fill="#5a8a8a" opacity="0.74"/>
<rect x="741.50" y="61.12" width="1" height="2.08" fill="#c6f6f6"/>
<rect x="741.60" y="85.14" width="0.7" height="3.26" fill="#5a8a8a" opacity="0.50"/>
<rect x="742.50" y="61.05" width="1" height="2.15" fill="#c6f6f6"/>
<rect x="742.60" y="82.51" width="0.7" height="5.89" fill="#5a8a8a" opacity="0.57"/>
<rect x="743.50" y="61.36" width="1" height="1.84" fill="#c6f6f6"/>
<rect x="743.60" y="84.95" width="0.7" height="3.45" fill="#5a8a8a" opacity="0.83"/>
<rect x="744.50" y="61.01" width="1" height="2.19" fill="#c6f6f6"/>
<rect x="744.60" y="82.25" width="0.7" height="6.15" fill="#5a8a8a" opacity="0.77"/>
<rect x="745.50" y="61.51" width="1" height="1.69" fill="#c6f6f6"/>
<rect x="745.60" y="82.29" width="0.7" height="6.11" fill="#5a8a8a" opacity="0.78"/>
<rect x="746.50" y="61.54" width="1" height="1.66" fill="#c6f6f6"/>
<rect x="747.50" y="61.07" width="1" height="2.13" fill="#c6f6f6"/>
<rect x="748.50" y="61.67" width="1" height="1.53" fill="#c6f6f6"/>
<rect x="749.50" y="61.88" width="1" height="1.32" fill="#b8eaea"/>
<rect x="749.60" y="61.88" width="0.7" height="4.38" fill="#507e7e" opacity="0.92"/>
<rect x="750.50" y="61.05" width="1" height="2.15" fill="#b8eaea"/>
<rect x="750.60" y="61.05" width="0.7" height="4.25" fill="#507e7e" opacity="0.74"/>
<rect x="751.50" y="61.81" width="1" height="1.39" fill="#b8eaea"/>
<rect x="751.60" y="61.81" width="0.7" height="7.46" fill="#507e7e" opacity="0.73"/>
<rect x="752.50" y="62.40" width="1" height="0.80" fill="#b8eaea"/>
<rect x="752.60" y="62.40" width="0.7" height="4.54" fill="#507e7e" opacity="0.92"/>
<rect x="753.50" y="61.71" width="1" height="1.49" fill="#b8eaea"/>
<rect x="753.60" y="61.71" width="0.7" height="4.84" fill="#507e7e" opacity="0.86"/>
<rect x="754.50" y="61.46" width="1" height="1.74" fill="#b8eaea"/>
<rect x="754.60" y="61.46" width="0.7" height="6.00" fill="#507e7e" opacity="0.84"/>
<rect x="755.50" y="61.39" width="1" height="1.81" fill="#b8eaea"/>
<rect x="755.60" y="61.39" width="0.7" height="3.79" fill="#507e7e" opacity="0.72"/>
<rect x="756.50" y="61.30" width="1" height="1.90" fill="#c6f6f6"/>
<rect x="757.50" y="61.01" width="1" height="2.19" fill="#c6f6f6"/>
<rect x="758.50" y="61.35" width="1" height="1.85" fill="#c6f6f6"/>
<rect x="758.60" y="84.45" width="0.7" height="3.95" fill="#5a8a8a" opacity="0.66"/>
<rect x="759.50" y="61.67" width="1" height="1.53" fill="#c6f6f6"/>
<rect x="759.60" y="81.94" width="0.7" height="6.46" fill="#5a8a8a" opacity="0.58"/>
<rect x="760.50" y="61.53" width="1" height="1.67" fill="#c6f6f6"/>
<rect x="760.60" y="81.46" width="0.7" height="6.94" fill="#5a8a8a" opacity="0.62"/>
<rect x="761.50" y="61.67" width="1" height="1.53" fill="#c6f6f6"/>
<rect x="761.60" y="84.06" width="0.7" height="4.34" fill="#5a8a8a" opacity="0.73"/>
<rect x="762.50" y="61.12" width="1" height="2.08" fill="#c6f6f6"/>
<rect x="762.60" y="82.85" width="0.7" height="5.55" fill="#5a8a8a" opacity="0.83"/>
<rect x="763.50" y="61.23" width="1" height="1.97" fill="#c6f6f6"/>
<rect x="763.60" y="84.29" width="0.7" height="4.11" fill="#5a8a8a" opacity="0.85"/>
<rect x="764.50" y="61.10" width="1" height="2.10" fill="#c6f6f6"/>
<rect x="764.60" y="84.20" width="0.7" height="4.20" fill="#5a8a8a" opacity="0.71"/>
<rect x="765.50" y="61.15" width="1" height="2.05" fill="#c6f6f6"/>
<rect x="766.50" y="62.36" width="1" height="0.84" fill="#b8eaea"/>
<rect x="767.50" y="62.88" width="1" height="0.32" fill="#b8eaea"/>
<rect x="767.60" y="62.88" width="0.7" height="5.78" fill="#507e7e" opacity="0.80"/>
<rect x="768.50" y="61.25" width="1" height="1.95" fill="#b8eaea"/>
<rect x="769.50" y="62.52" width="1" height="0.68" fill="#b8eaea"/>
<rect x="769.60" y="62.52" width="0.7" height="6.66" fill="#507e7e" opacity="0.75"/>
<rect x="770.50" y="61.85" width="1" height="1.35" fill="#b8eaea"/>
<rect x="770.60" y="61.85" width="0.7" height="6.30" fill="#507e7e" opacity="0.80"/>
<rect x="771.50" y="62.13" width="1" height="1.07" fill="#b8eaea"/>
<rect x="771.60" y="62.13" width="0.7" height="6.45" fill="#507e7e" opacity="0.76"/>
<rect x="772.50" y="62.31" width="1" height="0.89" fill="#b8eaea"/>
<rect x="772.60" y="62.31" width="0.7" height="8.12" fill="#507e7e" opacity="0.65"/>
<rect x="773.50" y="62.03" width="1" height="1.17" fill="#b8eaea"/>
<rect x="774.50" y="61.52" width="1" height="1.68" fill="#c6f6f6"/>
<rect x="775.50" y="61.22" width="1" height="1.98" fill="#c6f6f6"/>
<rect x="776.50" y="61.52" width="1" height="1.68" fill="#c6f6f6"/>
<rect x="777.50" y="61.28" width="1" height="1.92" fill="#c6f6f6"/>
<rect x="778.50" y="61.09" width="1" height="2.11" fill="#c6f6f6"/>
<rect x="779.50" y="61.34" width="1" height="1.86" fill="#c6f6f6"/>
<rect x="779.60" y="82.12" width="0.7" height="6.28" fill="#5a8a8a" opacity="0.71"/>
<rect x="780.50" y="61.66" width="1" height="1.54" fill="#c6f6f6"/>
<rect x="781.50" y="61.56" width="1" height="1.64" fill="#c6f6f6"/>
<rect x="781.60" y="81.43" width="0.7" height="6.97" fill="#5a8a8a" opacity="0.48"/>
<rect x="782.50" y="61.61" width="1" height="1.59" fill="#c6f6f6"/>
<rect x="783.50" y="61.50" width="1" height="1.70" fill="#c6f6f6"/>
<rect x="784.50" y="61.55" width="1" height="1.65" fill="#b8eaea"/>
<rect x="785.50" y="62.00" width="1" height="1.20" fill="#b8eaea"/>
<rect x="785.60" y="62.00" width="0.7" height="7.76" fill="#507e7e" opacity="0.67"/>
<rect x="786.50" y="61.62" width="1" height="1.58" fill="#b8eaea"/>
<rect x="786.60" y="61.62" width="0.7" height="3.40" fill="#507e7e" opacity="0.79"/>
<rect x="787.50" y="62.73" width="1" height="0.47" fill="#b8eaea"/>
<rect x="787.60" y="62.73" width="0.7" height="4.33" fill="#507e7e" opacity="0.88"/>
<rect x="788.50" y="62.88" width="1" height="0.32" fill="#b8eaea"/>
<rect x="788.60" y="62.88" width="0.7" height="6.02" fill="#507e7e" opacity="0.92"/>
<rect x="789.50" y="62.75" width="1" height="0.45" fill="#b8eaea"/>
<rect x="789.60" y="62.75" width="0.7" height="5.01" fill="#507e7e" opacity="0.64"/>
<rect x="790.50" y="61.08" width="1" height="2.12" fill="#b8eaea"/>
<rect x="790.60" y="61.08" width="0.7" height="7.76" fill="#507e7e" opacity="0.89"/>
<rect x="791.50" y="61.26" width="1" height="1.94" fill="#b8eaea"/>
<rect x="791.60" y="61.26" width="0.7" height="5.14" fill="#507e7e" opacity="0.90"/>
<rect x="792.50" y="61.43" width="1" height="1.77" fill="#c6f6f6"/>
<rect x="793.50" y="61.63" width="1" height="1.57" fill="#c6f6f6"/>
<rect x="793.60" y="81.45" width="0.7" height="6.95" fill="#5a8a8a" opacity="0.53"/>
<rect x="794.50" y="61.44" width="1" height="1.76" fill="#c6f6f6"/>
<rect x="795.50" y="61.51" width="1" height="1.69" fill="#c6f6f6"/>
<rect x="795.60" y="82.89" width="0.7" height="5.51" fill="#5a8a8a" opacity="0.62"/>
<rect x="796.50" y="61.01" width="1" height="2.19" fill="#c6f6f6"/>
<rect x="796.60" y="84.48" width="0.7" height="3.92" fill="#5a8a8a" opacity="0.70"/>
<rect x="797.50" y="61.19" width="1" height="2.01" fill="#c6f6f6"/>
<rect x="797.60" y="82.77" width="0.7" height="5.63" fill="#5a8a8a" opacity="0.52"/>
<rect x="798.50" y="61.09" width="1" height="2.11" fill="#c6f6f6"/>
<rect x="798.60" y="83.80" width="0.7" height="4.60" fill="#5a8a8a" opacity="0.50"/>
<rect x="799.50" y="61.08" width="1" height="2.12" fill="#c6f6f6"/>
<rect x="800.50" y="61.43" width="1" height="1.77" fill="#c6f6f6"/>
<rect x="801.50" y="61.25" width="1" height="1.95" fill="#c6f6f6"/>
<rect x="802.50" y="61.43" width="1" height="1.77" fill="#b8eaea"/>
<rect x="803.50" y="62.52" width="1" height="0.68" fill="#b8eaea"/>
<rect x="803.60" y="62.52" width="0.7" height="4.98" fill="#507e7e" opacity="0.71"/>
<rect x="804.50" y="61.90" width="1" height="1.30" fill="#b8eaea"/>
<rect x="804.60" y="61.90" width="0.7" height="6.47" fill="#507e7e" opacity="0.75"/>
<rect x="805.50" y="62.80" width="1" height="0.40" fill="#b8eaea"/>
<rect x="805.60" y="62.80" width="0.7" height="5.51" fill="#507e7e" opacity="0.78"/>
<rect x="806.50" y="63.07" width="1" height="0.13" fill="#b8eaea"/>
<rect x="806.60" y="63.07" width="0.7" height="6.87" fill="#507e7e" opacity="0.68"/>
<rect x="807.50" y="62.27" width="1" height="0.93" fill="#b8eaea"/>
<rect x="807.60" y="62.27" width="0.7" height="7.80" fill="#507e7e" opacity="0.70"/>
<rect x="808.50" y="62.88" width="1" height="0.32" fill="#b8eaea"/>
<rect x="808.60" y="62.88" width="0.7" height="5.50" fill="#507e7e" opacity="0.93"/>
<rect x="809.50" y="61.27" width="1" height="1.93" fill="#c6f6f6"/>
<rect x="810.50" y="61.52" width="1" height="1.68" fill="#c6f6f6"/>
<rect x="811.50" y="61.42" width="1" height="1.78" fill="#c6f6f6"/>
<rect x="811.60" y="85.61" width="0.7" height="2.79" fill="#5a8a8a" opacity="0.62"/>
<rect x="812.50" y="61.20" width="1" height="2.00" fill="#c6f6f6"/>
<rect x="812.60" y="81.60" width="0.7" height="6.80" fill="#5a8a8a" opacity="0.57"/>
<rect x="813.50" y="61.49" width="1" height="1.71" fill="#c6f6f6"/>
<rect x="813.60" y="84.80" width="0.7" height="3.60" fill="#5a8a8a" opacity="0.61"/>
<rect x="814.50" y="61.09" width="1" height="2.11" fill="#c6f6f6"/>
<rect x="815.50" y="61.18" width="1" height="2.02" fill="#c6f6f6"/>
<rect x="815.60" y="84.36" width="0.7" height="4.04" fill="#5a8a8a" opacity="0.78"/>
<rect x="816.50" y="61.60" width="1" height="1.60" fill="#c6f6f6"/>
<rect x="816.60" y="83.44" width="0.7" height="4.96" fill="#5a8a8a" opacity="0.49"/>
<rect x="817.50" y="61.63" width="1" height="1.57" fill="#c6f6f6"/>
<rect x="817.60" y="84.26" width="0.7" height="4.14" fill="#5a8a8a" opacity="0.60"/>
<rect x="818.50" y="61.51" width="1" height="1.69" fill="#c6f6f6"/>
<rect x="819.50" y="61.47" width="1" height="1.73" fill="#c6f6f6"/>
<rect x="820.50" y="61.76" width="1" height="1.44" fill="#b8eaea"/>
<rect x="821.50" y="63.09" width="1" height="0.11" fill="#b8eaea"/>
<rect x="821.60" y="63.09" width="0.7" height="6.48" fill="#507e7e" opacity="0.76"/>
<rect x="822.50" y="61.80" width="1" height="1.40" fill="#b8eaea"/>
<rect x="822.60" y="61.80" width="0.7" height="4.74" fill="#507e7e" opacity="0.83"/>
<rect x="823.50" y="62.33" width="1" height="0.87" fill="#b8eaea"/>
<rect x="824.50" y="63.15" width="1" height="0.05" fill="#b8eaea"/>
<rect x="825.50" y="61.87" width="1" height="1.33" fill="#b8eaea"/>
<rect x="826.50" y="62.43" width="1" height="0.77" fill="#b8eaea"/>
<rect x="826.60" y="62.43" width="0.7" height="8.49" fill="#507e7e" opacity="0.62"/>
<rect x="827.50" y="61.32" width="1" height="1.88" fill="#c6f6f6"/>
<rect x="828.50" y="61.28" width="1" height="1.92" fill="#c6f6f6"/>
<rect x="829.50" y="61.46" width="1" height="1.74" fill="#c6f6f6"/>
<rect x="829.60" y="81.45" width="0.7" height="6.95" fill="#5a8a8a" opacity="0.53"/>
<rect x="830.50" y="61.26" width="1" height="1.94" fill="#c6f6f6"/>
<rect x="830.60" y="84.12" width="0.7" height="4.28" fill="#5a8a8a" opacity="0.75"/>
<rect x="831.50" y="61.06" width="1" height="2.14" fill="#c6f6f6"/>
<rect x="831.60" y="82.98" width="0.7" height="5.42" fill="#5a8a8a" opacity="0.70"/>
<rect x="832.50" y="61.52" width="1" height="1.68" fill="#c6f6f6"/>
<rect x="832.60" y="82.25" width="0.7" height="6.15" fill="#5a8a8a" opacity="0.74"/>
<rect x="833.50" y="61.54" width="1" height="1.66" fill="#c6f6f6"/>
<rect x="833.60" y="83.79" width="0.7" height="4.61" fill="#5a8a8a" opacity="0.46"/>
<path d="M195.50,88.3 C199.50,76 204.50,68 211.50,63 L216.50,63 C210.50,68 205.50,76 202.50,88.3 Z" fill="#8fc0c0" opacity="0.25"/>
<path d="M213.20,88.3 C217.20,76 222.20,68 229.20,63 L234.20,63 C228.20,68 223.20,76 220.20,88.3 Z" fill="#8fc0c0" opacity="0.25"/>
<path d="M230.90,88.3 C234.90,76 239.90,68 246.90,63 L251.90,63 C245.90,68 240.90,76 237.90,88.3 Z" fill="#8fc0c0" opacity="0.25"/>
<path d="M248.60,88.3 C252.60,76 257.60,68 264.60,63 L269.60,63 C263.60,68 258.60,76 255.60,88.3 Z" fill="#8fc0c0" opacity="0.25"/>
<path d="M266.30,88.3 C270.30,76 275.30,68 282.30,63 L287.30,63 C281.30,68 276.30,76 273.30,88.3 Z" fill="#8fc0c0" opacity="0.25"/>
<path d="M284.00,88.3 C288.00,76 293.00,68 300.00,63 L305.00,63 C299.00,68 294.00,76 291.00,88.3 Z" fill="#8fc0c0" opacity="0.25"/>
<path d="M301.70,88.3 C305.70,76 310.70,68 317.70,63 L322.70,63 C316.70,68 311.70,76 308.70,88.3 Z" fill="#8fc0c0" opacity="0.25"/>
<path d="M319.40,88.3 C323.40,76 328.40,68 335.40,63 L340.40,63 C334.40,68 329.40,76 326.40,88.3 Z" fill="#8fc0c0" opacity="0.25"/>
<path d="M337.10,88.3 C341.10,76 346.10,68 353.10,63 L358.10,63 C352.10,68 347.10,76 344.10,88.3 Z" fill="#8fc0c0" opacity="0.25"/>
<path d="M354.80,88.3 C358.80,76 363.80,68 370.80,63 L375.80,63 C369.80,68 364.80,76 361.80,88.3 Z" fill="#8fc0c0" opacity="0.25"/>
<path d="M372.50,88.3 C376.50,76 381.50,68 388.50,63 L393.50,63 C387.50,68 382.50,76 379.50,88.3 Z" fill="#8fc0c0" opacity="0.25"/>
<path d="M390.20,88.3 C394.20,76 399.20,68 406.20,63 L411.20,63 C405.20,68 400.20,76 397.20,88.3 Z" fill="#8fc0c0" opacity="0.25"/>
<path d="M407.90,88.3 C411.90,76 416.90,68 423.90,63 L428.90,63 C422.90,68 417.90,76 414.90,88.3 Z" fill="#8fc0c0" opacity="0.25"/>
<path d="M425.60,88.3 C429.60,76 434.60,68 441.60,63 L446.60,63 C440.60,68 435.60,76 432.60,88.3 Z" fill="#8fc0c0" opacity="0.25"/>
<path d="M443.30,88.3 C447.30,76 452.30,68 459.30,63 L464.30,63 C458.30,68 453.30,76 450.30,88.3 Z" fill="#8fc0c0" opacity="0.25"/>
<path d="M461.00,88.3 C465.00,76 470.00,68 477.00,63 L482.00,63 C476.00,68 471.00,76 468.00,88.3 Z" fill="#8fc0c0" opacity="0.25"/>
<path d="M478.70,88.3 C482.70,76 487.70,68 494.70,63 L499.70,63 C493.70,68 488.70,76 485.70,88.3 Z" fill="#8fc0c0" opacity="0.25"/>
<path d="M496.40,88.3 C500.40,76 505.40,68 512.40,63 L517.40,63 C511.40,68 506.40,76 503.40,88.3 Z" fill="#8fc0c0" opacity="0.25"/>
<path d="M514.10,88.3 C518.10,76 523.10,68 530.10,63 L535.10,63 C529.10,68 524.10,76 521.10,88.3 Z" fill="#8fc0c0" opacity="0.25"/>
<path d="M531.80,88.3 C535.80,76 540.80,68 547.80,63 L552.80,63 C546.80,68 541.80,76 538.80,88.3 Z" fill="#8fc0c0" opacity="0.25"/>
<path d="M549.50,88.3 C553.50,76 558.50,68 565.50,63 L570.50,63 C564.50,68 559.50,76 556.50,88.3 Z" fill="#8fc0c0" opacity="0.25"/>
<path d="M567.20,88.3 C571.20,76 576.20,68 583.20,63 L588.20,63 C582.20,68 577.20,76 574.20,88.3 Z" fill="#8fc0c0" opacity="0.25"/>
<path d="M584.90,88.3 C588.90,76 593.90,68 600.90,63 L605.90,63 C599.90,68 594.90,76 591.90,88.3 Z" fill="#8fc0c0" opacity="0.25"/>
<path d="M602.60,88.3 C606.60,76 611.60,68 618.60,63 L623.60,63 C617.60,68 612.60,76 609.60,88.3 Z" fill="#8fc0c0" opacity="0.25"/>
<path d="M620.30,88.3 C624.30,76 629.30,68 636.30,63 L641.30,63 C635.30,68 630.30,76 627.30,88.3 Z" fill="#8fc0c0" opacity="0.25"/>
<path d="M638.00,88.3 C642.00,76 647.00,68 654.00,63 L659.00,63 C653.00,68 648.00,76 645.00,88.3 Z" fill="#8fc0c0" opacity="0.25"/>
<path d="M655.70,88.3 C659.70,76 664.70,68 671.70,63 L676.70,63 C670.70,68 665.70,76 662.70,88.3 Z" fill="#8fc0c0" opacity="0.25"/>
<path d="M673.40,88.3 C677.40,76 682.40,68 689.40,63 L694.40,63 C688.40,68 683.40,76 680.40,88.3 Z" fill="#8fc0c0" opacity="0.25"/>
<path d="M691.10,88.3 C695.10,76 700.10,68 707.10,63 L712.10,63 C706.10,68 701.10,76 698.10,88.3 Z" fill="#8fc0c0" opacity="0.25"/>
<path d="M708.80,88.3 C712.80,76 717.80,68 724.80,63 L729.80,63 C723.80,68 718.80,76 715.80,88.3 Z" fill="#8fc0c0" opacity="0.25"/>
<path d="M726.50,88.3 C730.50,76 735.50,68 742.50,63 L747.50,63 C741.50,68 736.50,76 733.50,88.3 Z" fill="#8fc0c0" opacity="0.25"/>
<path d="M744.20,88.3 C748.20,76 753.20,68 760.20,63 L765.20,63 C759.20,68 754.20,76 751.20,88.3 Z" fill="#8fc0c0" opacity="0.25"/>
<path d="M761.90,88.3 C765.90,76 770.90,68 777.90,63 L782.90,63 C776.90,68 771.90,76 768.90,88.3 Z" fill="#8fc0c0" opacity="0.25"/>
<path d="M779.60,88.3 C783.60,76 788.60,68 795.60,63 L800.60,63 C794.60,68 789.60,76 786.60,88.3 Z" fill="#8fc0c0" opacity="0.25"/>
<path d="M797.30,88.3 C801.30,76 806.30,68 813.30,63 L818.30,63 C812.30,68 807.30,76 804.30,88.3 Z" fill="#8fc0c0" opacity="0.25"/>
<path d="M815.00,88.3 C819.00,76 824.00,68 831.00,63 L836.00,63 C830.00,68 825.00,76 822.00,88.3 Z" fill="#8fc0c0" opacity="0.25"/>
<path d="M832.70,88.3 C836.70,76 841.70,68 848.70,63 L853.70,63 C847.70,68 842.70,76 839.70,88.3 Z" fill="#8fc0c0" opacity="0.25"/>
<path d="M235.50,88.3 L236.60,90.7 L237.80,88.3 Z" fill="#b4e6e6"/>
<path d="M240.00,88.3 L241.10,90.7 L242.30,88.3 Z" fill="#b4e6e6"/>
<path d="M244.50,88.3 L245.60,90.7 L246.80,88.3 Z" fill="#b4e6e6"/>
<path d="M249.00,88.3 L250.10,90.7 L251.30,88.3 Z" fill="#b4e6e6"/>
<path d="M253.50,88.3 L254.60,90.7 L255.80,88.3 Z" fill="#b4e6e6"/>
<path d="M258.00,88.3 L259.10,90.7 L260.30,88.3 Z" fill="#b4e6e6"/>
<path d="M262.50,88.3 L263.60,90.7 L264.80,88.3 Z" fill="#b4e6e6"/>
<path d="M267.00,88.3 L268.10,90.7 L269.30,88.3 Z" fill="#b4e6e6"/>
<path d="M271.50,88.3 L272.60,90.7 L273.80,88.3 Z" fill="#b4e6e6"/>
<path d="M276.00,88.3 L277.10,90.7 L278.30,88.3 Z" fill="#b4e6e6"/>
<path d="M280.50,88.3 L281.60,90.7 L282.80,88.3 Z" fill="#b4e6e6"/>
<path d="M285.00,88.3 L286.10,90.7 L287.30,88.3 Z" fill="#b4e6e6"/>
<path d="M289.50,88.3 L290.60,90.7 L291.80,88.3 Z" fill="#b4e6e6"/>
<path d="M294.00,88.3 L295.10,90.7 L296.30,88.3 Z" fill="#b4e6e6"/>
<path d="M298.50,88.3 L299.60,90.7 L300.80,88.3 Z" fill="#b4e6e6"/>
<path d="M303.00,88.3 L304.10,90.7 L305.30,88.3 Z" fill="#b4e6e6"/>
<path d="M307.50,88.3 L308.60,90.7 L309.80,88.3 Z" fill="#b4e6e6"/>
<path d="M312.00,88.3 L313.10,90.7 L314.30,88.3 Z" fill="#b4e6e6"/>
<path d="M316.50,88.3 L317.60,90.7 L318.80,88.3 Z" fill="#b4e6e6"/>
<path d="M321.00,88.3 L322.10,90.7 L323.30,88.3 Z" fill="#b4e6e6"/>
<path d="M325.50,88.3 L326.60,90.7 L327.80,88.3 Z" fill="#b4e6e6"/>
<path d="M330.00,88.3 L331.10,90.7 L332.30,88.3 Z" fill="#b4e6e6"/>
<path d="M334.50,88.3 L335.60,90.7 L336.80,88.3 Z" fill="#b4e6e6"/>
<path d="M339.00,88.3 L340.10,90.7 L341.30,88.3 Z" fill="#b4e6e6"/>
<path d="M343.50,88.3 L344.60,90.7 L345.80,88.3 Z" fill="#b4e6e6"/>
<path d="M348.00,88.3 L349.10,90.7 L350.30,88.3 Z" fill="#b4e6e6"/>
<path d="M352.50,88.3 L353.60,90.7 L354.80,88.3 Z" fill="#b4e6e6"/>
<path d="M357.00,88.3 L358.10,90.7 L359.30,88.3 Z" fill="#b4e6e6"/>
<path d="M361.50,88.3 L362.60,90.7 L363.80,88.3 Z" fill="#b4e6e6"/>
<path d="M366.00,88.3 L367.10,90.7 L368.30,88.3 Z" fill="#b4e6e6"/>
<path d="M370.50,88.3 L371.60,90.7 L372.80,88.3 Z" fill="#b4e6e6"/>
<path d="M375.00,88.3 L376.10,90.7 L377.30,88.3 Z" fill="#b4e6e6"/>
<path d="M379.50,88.3 L380.60,90.7 L381.80,88.3 Z" fill="#b4e6e6"/>
<path d="M384.00,88.3 L385.10,90.7 L386.30,88.3 Z" fill="#b4e6e6"/>
<path d="M388.50,88.3 L389.60,90.7 L390.80,88.3 Z" fill="#b4e6e6"/>
<path d="M393.00,88.3 L394.10,90.7 L395.30,88.3 Z" fill="#b4e6e6"/>
<path d="M397.50,88.3 L398.60,90.7 L399.80,88.3 Z" fill="#b4e6e6"/>
<path d="M402.00,88.3 L403.10,90.7 L404.30,88.3 Z" fill="#b4e6e6"/>
<path d="M406.50,88.3 L407.60,90.7 L408.80,88.3 Z" fill="#b4e6e6"/>
<path d="M411.00,88.3 L412.10,90.7 L413.30,88.3 Z" fill="#b4e6e6"/>
<path d="M415.50,88.3 L416.60,90.7 L417.80,88.3 Z" fill="#b4e6e6"/>
<path d="M420.00,88.3 L421.10,90.7 L422.30,88.3 Z" fill="#b4e6e6"/>
<path d="M424.50,88.3 L425.60,90.7 L426.80,88.3 Z" fill="#b4e6e6"/>
<path d="M429.00,88.3 L430.10,90.7 L431.30,88.3 Z" fill="#b4e6e6"/>
<path d="M433.50,88.3 L434.60,90.7 L435.80,88.3 Z" fill="#b4e6e6"/>
<path d="M438.00,88.3 L439.10,90.7 L440.30,88.3 Z" fill="#b4e6e6"/>
<path d="M442.50,88.3 L443.60,90.7 L444.80,88.3 Z" fill="#b4e6e6"/>
<path d="M447.00,88.3 L448.10,90.7 L449.30,88.3 Z" fill="#b4e6e6"/>
<path d="M451.50,88.3 L452.60,90.7 L453.80,88.3 Z" fill="#b4e6e6"/>
<path d="M456.00,88.3 L457.10,90.7 L458.30,88.3 Z" fill="#b4e6e6"/>
<path d="M460.50,88.3 L461.60,90.7 L462.80,88.3 Z" fill="#b4e6e6"/>
<path d="M465.00,88.3 L466.10,90.7 L467.30,88.3 Z" fill="#b4e6e6"/>
<path d="M469.50,88.3 L470.60,90.7 L471.80,88.3 Z" fill="#b4e6e6"/>
<path d="M474.00,88.3 L475.10,90.7 L476.30,88.3 Z" fill="#b4e6e6"/>
<path d="M478.50,88.3 L479.60,90.7 L480.80,88.3 Z" fill="#b4e6e6"/>
<path d="M483.00,88.3 L484.10,90.7 L485.30,88.3 Z" fill="#b4e6e6"/>
<path d="M487.50,88.3 L488.60,90.7 L489.80,88.3 Z" fill="#b4e6e6"/>
<path d="M492.00,88.3 L493.10,90.7 L494.30,88.3 Z" fill="#b4e6e6"/>
<path d="M496.50,88.3 L497.60,90.7 L498.80,88.3 Z" fill="#b4e6e6"/>
<path d="M501.00,88.3 L502.10,90.7 L503.30,88.3 Z" fill="#b4e6e6"/>
<path d="M505.50,88.3 L506.60,90.7 L507.80,88.3 Z" fill="#b4e6e6"/>
<path d="M510.00,88.3 L511.10,90.7 L512.30,88.3 Z" fill="#b4e6e6"/>
<path d="M514.50,88.3 L515.60,90.7 L516.80,88.3 Z" fill="#b4e6e6"/>
<path d="M519.00,88.3 L520.10,90.7 L521.30,88.3 Z" fill="#b4e6e6"/>
<path d="M523.50,88.3 L524.60,90.7 L525.80,88.3 Z" fill="#b4e6e6"/>
<path d="M528.00,88.3 L529.10,90.7 L530.30,88.3 Z" fill="#b4e6e6"/>
<path d="M532.50,88.3 L533.60,90.7 L534.80,88.3 Z" fill="#b4e6e6"/>
<path d="M537.00,88.3 L538.10,90.7 L539.30,88.3 Z" fill="#b4e6e6"/>
<path d="M541.50,88.3 L542.60,90.7 L543.80,88.3 Z" fill="#b4e6e6"/>
<path d="M546.00,88.3 L547.10,90.7 L548.30,88.3 Z" fill="#b4e6e6"/>
<path d="M550.50,88.3 L551.60,90.7 L552.80,88.3 Z" fill="#b4e6e6"/>
<path d="M555.00,88.3 L556.10,90.7 L557.30,88.3 Z" fill="#b4e6e6"/>
<path d="M559.50,88.3 L560.60,90.7 L561.80,88.3 Z" fill="#b4e6e6"/>
<path d="M564.00,88.3 L565.10,90.7 L566.30,88.3 Z" fill="#b4e6e6"/>
<path d="M568.50,88.3 L569.60,90.7 L570.80,88.3 Z" fill="#b4e6e6"/>
<path d="M573.00,88.3 L574.10,90.7 L575.30,88.3 Z" fill="#b4e6e6"/>
<path d="M577.50,88.3 L578.60,90.7 L579.80,88.3 Z" fill="#b4e6e6"/>
<path d="M582.00,88.3 L583.10,90.7 L584.30,88.3 Z" fill="#b4e6e6"/>
<path d="M586.50,88.3 L587.60,90.7 L588.80,88.3 Z" fill="#b4e6e6"/>
<path d="M591.00,88.3 L592.10,90.7 L593.30,88.3 Z" fill="#b4e6e6"/>
<path d="M595.50,88.3 L596.60,90.7 L597.80,88.3 Z" fill="#b4e6e6"/>
<path d="M600.00,88.3 L601.10,90.7 L602.30,88.3 Z" fill="#b4e6e6"/>
<path d="M604.50,88.3 L605.60,90.7 L606.80,88.3 Z" fill="#b4e6e6"/>
<path d="M609.00,88.3 L610.10,90.7 L611.30,88.3 Z" fill="#b4e6e6"/>
<path d="M613.50,88.3 L614.60,90.7 L615.80,88.3 Z" fill="#b4e6e6"/>
<path d="M618.00,88.3 L619.10,90.7 L620.30,88.3 Z" fill="#b4e6e6"/>
<path d="M622.50,88.3 L623.60,90.7 L624.80,88.3 Z" fill="#b4e6e6"/>
<path d="M627.00,88.3 L628.10,90.7 L629.30,88.3 Z" fill="#b4e6e6"/>
<path d="M631.50,88.3 L632.60,90.7 L633.80,88.3 Z" fill="#b4e6e6"/>
<path d="M636.00,88.3 L637.10,90.7 L638.30,88.3 Z" fill="#b4e6e6"/>
<path d="M640.50,88.3 L641.60,90.7 L642.80,88.3 Z" fill="#b4e6e6"/>
<path d="M645.00,88.3 L646.10,90.7 L647.30,88.3 Z" fill="#b4e6e6"/>
<path d="M649.50,88.3 L650.60,90.7 L651.80,88.3 Z" fill="#b4e6e6"/>
<path d="M654.00,88.3 L655.10,90.7 L656.30,88.3 Z" fill="#b4e6e6"/>
<path d="M658.50,88.3 L659.60,90.7 L660.80,88.3 Z" fill="#b4e6e6"/>
<path d="M663.00,88.3 L664.10,90.7 L665.30,88.3 Z" fill="#b4e6e6"/>
<path d="M667.50,88.3 L668.60,90.7 L669.80,88.3 Z" fill="#b4e6e6"/>
<path d="M672.00,88.3 L673.10,90.7 L674.30,88.3 Z" fill="#b4e6e6"/>
<path d="M676.50,88.3 L677.60,90.7 L678.80,88.3 Z" fill="#b4e6e6"/>
<path d="M681.00,88.3 L682.10,90.7 L683.30,88.3 Z" fill="#b4e6e6"/>
<path d="M685.50,88.3 L686.60,90.7 L687.80,88.3 Z" fill="#b4e6e6"/>
<path d="M690.00,88.3 L691.10,90.7 L692.30,88.3 Z" fill="#b4e6e6"/>
<path d="M694.50,88.3 L695.60,90.7 L696.80,88.3 Z" fill="#b4e6e6"/>
<path d="M699.00,88.3 L700.10,90.7 L701.30,88.3 Z" fill="#b4e6e6"/>
<path d="M703.50,88.3 L704.60,90.7 L705.80,88.3 Z" fill="#b4e6e6"/>
<path d="M708.00,88.3 L709.10,90.7 L710.30,88.3 Z" fill="#b4e6e6"/>
<path d="M712.50,88.3 L713.60,90.7 L714.80,88.3 Z" fill="#b4e6e6"/>
<path d="M717.00,88.3 L718.10,90.7 L719.30,88.3 Z" fill="#b4e6e6"/>
<path d="M721.50,88.3 L722.60,90.7 L723.80,88.3 Z" fill="#b4e6e6"/>
<path d="M726.00,88.3 L727.10,90.7 L728.30,88.3 Z" fill="#b4e6e6"/>
<path d="M730.50,88.3 L731.60,90.7 L732.80,88.3 Z" fill="#b4e6e6"/>
<path d="M735.00,88.3 L736.10,90.7 L737.30,88.3 Z" fill="#b4e6e6"/>
<path d="M739.50,88.3 L740.60,90.7 L741.80,88.3 Z" fill="#b4e6e6"/>
<path d="M744.00,88.3 L745.10,90.7 L746.30,88.3 Z" fill="#b4e6e6"/>
<path d="M748.50,88.3 L749.60,90.7 L750.80,88.3 Z" fill="#b4e6e6"/>
<path d="M753.00,88.3 L754.10,90.7 L755.30,88.3 Z" fill="#b4e6e6"/>
<path d="M757.50,88.3 L758.60,90.7 L759.80,88.3 Z" fill="#b4e6e6"/>
<path d="M762.00,88.3 L763.10,90.7 L764.30,88.3 Z" fill="#b4e6e6"/>
<path d="M766.50,88.3 L767.60,90.7 L768.80,88.3 Z" fill="#b4e6e6"/>
<path d="M771.00,88.3 L772.10,90.7 L773.30,88.3 Z" fill="#b4e6e6"/>
<path d="M775.50,88.3 L776.60,90.7 L777.80,88.3 Z" fill="#b4e6e6"/>
<path d="M780.00,88.3 L781.10,90.7 L782.30,88.3 Z" fill="#b4e6e6"/>
<path d="M784.50,88.3 L785.60,90.7 L786.80,88.3 Z" fill="#b4e6e6"/>
<path d="M789.00,88.3 L790.10,90.7 L791.30,88.3 Z" fill="#b4e6e6"/>
<path d="M793.50,88.3 L794.60,90.7 L795.80,88.3 Z" fill="#b4e6e6"/>
<path d="M798.00,88.3 L799.10,90.7 L800.30,88.3 Z" fill="#b4e6e6"/>
<path d="M802.50,88.3 L803.60,90.7 L804.80,88.3 Z" fill="#b4e6e6"/>
<path d="M807.00,88.3 L808.10,90.7 L809.30,88.3 Z" fill="#b4e6e6"/>
<path d="M811.50,88.3 L812.60,90.7 L813.80,88.3 Z" fill="#b4e6e6"/>
<path d="M816.00,88.3 L817.10,90.7 L818.30,88.3 Z" fill="#b4e6e6"/>
<path d="M820.50,88.3 L821.60,90.7 L822.80,88.3 Z" fill="#b4e6e6"/>
<path d="M825.00,88.3 L826.10,90.7 L827.30,88.3 Z" fill="#b4e6e6"/>
<path d="M829.50,88.3 L830.60,90.7 L831.80,88.3 Z" fill="#b4e6e6"/>
<path d="M834.00,88.3 L835.10,90.7 L836.30,88.3 Z" fill="#b4e6e6"/>
<rect x="238.50" y="63" width="0.6" height="25.4" fill="#9fd0d0" opacity="0.22"/>
<rect x="241.50" y="63" width="0.6" height="25.4" fill="#9fd0d0" opacity="0.31"/>
<rect x="242.50" y="63" width="0.6" height="25.4" fill="#9fd0d0" opacity="0.25"/>
<rect x="243.50" y="63" width="0.6" height="25.4" fill="#9fd0d0" opacity="0.26"/>
<rect x="244.50" y="63" width="0.6" height="25.4" fill="#9fd0d0" opacity="0.17"/>
<rect x="246.50" y="63" width="0.6" height="25.4" fill="#9fd0d0" opacity="0.31"/>
<rect x="247.50" y="63" width="0.6" height="25.4" fill="#9fd0d0" opacity="0.23"/>
<rect x="248.50" y="63" width="0.6" height="25.4" fill="#9fd0d0" opacity="0.19"/>
<rect x="249.50" y="63" width="0.6" height="25.4" fill="#9fd0d0" opacity="0.26"/>
<rect x="250.50" y="63" width="0.6" height="25.4" fill="#9fd0d0" opacity="0.32"/>
<rect x="251.50" y="63" width="0.6" height="25.4" fill="#9fd0d0" opacity="0.32"/>
<rect x="252.50" y="63" width="0.6" height="25.4" fill="#9fd0d0" opacity="0.34"/>
<rect x="254.50" y="63" width="0.6" height="25.4" fill="#9fd0d0" opacity="0.27"/>
<rect x="257.50" y="63" width="0.6" height="25.4" fill="#9fd0d0" opacity="0.15"/>
<rect x="258.50" y="63" width="0.6" height="25.4" fill="#9fd0d0" opacity="0.31"/>
<rect x="261.50" y="63" width="0.6" height="25.4" fill="#9fd0d0" opacity="0.26"/>
<rect x="262.50" y="63" width="0.6" height="25.4" fill="#9fd0d0" opacity="0.17"/>
<rect x="263.50" y="63" width="0.6" height="25.4" fill="#9fd0d0" opacity="0.34"/>
<rect x="266.50" y="63" width="0.6" height="25.4" fill="#9fd0d0" opacity="0.23"/>
<rect x="267.50" y="63" width="0.6" height="25.4" fill="#9fd0d0" opacity="0.20"/>
<rect x="268.50" y="63" width="0.6" height="25.4" fill="#9fd0d0" opacity="0.33"/>
<rect x="269.50" y="63" width="0.6" height="25.4" fill="#9fd0d0" opacity="0.25"/>
<rect x="276.50" y="63" width="0.6" height="25.4" fill="#9fd0d0" opacity="0.21"/>
<rect x="278.50" y="63" width="0.6" height="25.4" fill="#9fd0d0" opacity="0.22"/>
<rect x="279.50" y="63" width="0.6" height="25.4" fill="#9fd0d0" opacity="0.25"/>
<rect x="280.50" y="63" width="0.6" height="25.4" fill="#9fd0d0" opacity="0.24"/>
<rect x="281.50" y="63" width="0.6" height="25.4" fill="#9fd0d0" opacity="0.16"/>
<rect x="283.50" y="63" width="0.6" height="25.4" fill="#9fd0d0" opacity="0.26"/>
<rect x="285.50" y="63" width="0.6" height="25.4" fill="#9fd0d0" opacity="0.19"/>
<rect x="286.50" y="63" width="0.6" height="25.4" fill="#9fd0d0" opacity="0.22"/>
<rect x="287.50" y="63" width="0.6" height="25.4" fill="#9fd0d0" opacity="0.25"/>
<rect x="288.50" y="63" width="0.6" height="25.4" fill="#9fd0d0" opacity="0.30"/>
<rect x="289.50" y="63" width="0.6" height="25.4" fill="#9fd0d0" opacity="0.15"/>
<rect x="290.50" y="63" width="0.6" height="25.4" fill="#9fd0d0" opacity="0.34"/>
<rect x="291.50" y="63" width="0.6" height="25.4" fill="#9fd0d0" opacity="0.27"/>
<rect x="293.50" y="63" width="0.6" height="25.4" fill="#9fd0d0" opacity="0.27"/>
<rect x="294.50" y="63" width="0.6" height="25.4" fill="#9fd0d0" opacity="0.21"/>
<rect x="297.50" y="63" width="0.6" height="25.4" fill="#9fd0d0" opacity="0.25"/>
<rect x="300.50" y="63" width="0.6" height="25.4" fill="#9fd0d0" opacity="0.17"/>
<rect x="301.50" y="63" width="0.6" height="25.4" fill="#9fd0d0" opacity="0.20"/>
<rect x="303.50" y="63" width="0.6" height="25.4" fill="#9fd0d0" opacity="0.32"/>
<rect x="304.50" y="63" width="0.6" height="25.4" fill="#9fd0d0" opacity="0.21"/>
<rect x="306.50" y="63" width="0.6" height="25.4" fill="#9fd0d0" opacity="0.35"/>
<rect x="308.50" y="63" width="0.6" height="25.4" fill="#9fd0d0" opacity="0.21"/>
<rect x="312.50" y="63" width="0.6" height="25.4" fill="#9fd0d0" opacity="0.30"/>
<rect x="313.50" y="63" width="0.6" height="25.4" fill="#9fd0d0" opacity="0.27"/>
<rect x="317.50" y="63" width="0.6" height="25.4" fill="#9fd0d0" opacity="0.34"/>
<rect x="320.50" y="63" width="0.6" height="25.4" fill="#9fd0d0" opacity="0.30"/>
<rect x="321.50" y="63" width="0.6" height="25.4" fill="#9fd0d0" opacity="0.29"/>
<rect x="324.50" y="63" width="0.6" height="25.4" fill="#9fd0d0" opacity="0.31"/>
<rect x="325.50" y="63" width="0.6" height="25.4" fill="#9fd0d0" opacity="0.30"/>
<rect x="326.50" y="63" width="0.6" height="25.4" fill="#9fd0d0" opacity="0.24"/>
<rect x="327.50" y="63" width="0.6" height="25.4" fill="#9fd0d0" opacity="0.17"/>
<rect x="328.50" y="63" width="0.6" height="25.4" fill="#9fd0d0" opacity="0.30"/>
<rect x="329.50" y="63" width="0.6" height="25.4" fill="#9fd0d0" opacity="0.17"/>
<rect x="333.50" y="63" width="0.6" height="25.4" fill="#9fd0d0" opacity="0.17"/>
<rect x="334.50" y="63" width="0.6" height="25.4" fill="#9fd0d0" opacity="0.34"/>
<rect x="337.50" y="63" width="0.6" height="25.4" fill="#9fd0d0" opacity="0.23"/>
<rect x="340.50" y="63" width="0.6" height="25.4" fill="#9fd0d0" opacity="0.32"/>
<rect x="341.50" y="63" width="0.6" height="25.4" fill="#9fd0d0" opacity="0.16"/>
<rect x="342.50" y="63" width="0.6" height="25.4" fill="#9fd0d0" opacity="0.23"/>
<rect x="345.50" y="63" width="0.6" height="25.4" fill="#9fd0d0" opacity="0.29"/>
<rect x="346.50" y="63" width="0.6" height="25.4" fill="#9fd0d0" opacity="0.31"/>
<rect x="347.50" y="63" width="0.6" height="25.4" fill="#9fd0d0" opacity="0.30"/>
<rect x="348.50" y="63" width="0.6" height="25.4" fill="#9fd0d0" opacity="0.27"/>
<rect x="349.50" y="63" width="0.6" height="25.4" fill="#9fd0d0" opacity="0.22"/>
<rect x="350.50" y="63" width="0.6" height="25.4" fill="#9fd0d0" opacity="0.22"/>
<rect x="353.50" y="63" width="0.6" height="25.4" fill="#9fd0d0" opacity="0.26"/>
<rect x="355.50" y="63" width="0.6" height="25.4" fill="#9fd0d0" opacity="0.27"/>
<rect x="356.50" y="63" width="0.6" height="25.4" fill="#9fd0d0" opacity="0.35"/>
<rect x="357.50" y="63" width="0.6" height="25.4" fill="#9fd0d0" opacity="0.29"/>
<rect x="358.50" y="63" width="0.6" height="25.4" fill="#9fd0d0" opacity="0.20"/>
<rect x="361.50" y="63" width="0.6" height="25.4" fill="#9fd0d0" opacity="0.16"/>
<rect x="363.50" y="63" width="0.6" height="25.4" fill="#9fd0d0" opacity="0.29"/>
<rect x="364.50" y="63" width="0.6" height="25.4" fill="#9fd0d0" opacity="0.27"/>
<rect x="368.50" y="63" width="0.6" height="25.4" fill="#9fd0d0" opacity="0.25"/>
<rect x="369.50" y="63" width="0.6" height="25.4" fill="#9fd0d0" opacity="0.30"/>
<rect x="370.50" y="63" width="0.6" height="25.4" fill="#9fd0d0" opacity="0.21"/>
<rect x="372.50" y="63" width="0.6" height="25.4" fill="#9fd0d0" opacity="0.29"/>
<rect x="375.50" y="63" width="0.6" height="25.4" fill="#9fd0d0" opacity="0.18"/>
<rect x="379.50" y="63" width="0.6" height="25.4" fill="#9fd0d0" opacity="0.31"/>
<rect x="380.50" y="63" width="0.6" height="25.4" fill="#9fd0d0" opacity="0.19"/>
<rect x="383.50" y="63" width="0.6" height="25.4" fill="#9fd0d0" opacity="0.30"/>
<rect x="388.50" y="63" width="0.6" height="25.4" fill="#9fd0d0" opacity="0.34"/>
<rect x="390.50" y="63" width="0.6" height="25.4" fill="#9fd0d0" opacity="0.32"/>
<rect x="392.50" y="63" width="0.6" height="25.4" fill="#9fd0d0" opacity="0.20"/>
<rect x="393.50" y="63" width="0.6" height="25.4" fill="#9fd0d0" opacity="0.26"/>
<rect x="394.50" y="63" width="0.6" height="25.4" fill="#9fd0d0" opacity="0.21"/>
<rect x="395.50" y="63" width="0.6" height="25.4" fill="#9fd0d0" opacity="0.18"/>
<rect x="396.50" y="63" width="0.6" height="25.4" fill="#9fd0d0" opacity="0.20"/>
<rect x="397.50" y="63" width="0.6" height="25.4" fill="#9fd0d0" opacity="0.21"/>
<rect x="400.50" y="63" width="0.6" height="25.4" fill="#9fd0d0" opacity="0.32"/>
<rect x="409.50" y="63" width="0.6" height="25.4" fill="#9fd0d0" opacity="0.16"/>
<rect x="411.50" y="63" width="0.6" height="25.4" fill="#9fd0d0" opacity="0.31"/>
<rect x="412.50" y="63" width="0.6" height="25.4" fill="#9fd0d0" opacity="0.24"/>
<rect x="413.50" y="63" width="0.6" height="25.4" fill="#9fd0d0" opacity="0.30"/>
<rect x="417.50" y="63" width="0.6" height="25.4" fill="#9fd0d0" opacity="0.20"/>
<rect x="419.50" y="63" width="0.6" height="25.4" fill="#9fd0d0" opacity="0.34"/>
<rect x="421.50" y="63" width="0.6" height="25.4" fill="#9fd0d0" opacity="0.33"/>
<rect x="422.50" y="63" width="0.6" height="25.4" fill="#9fd0d0" opacity="0.26"/>
<rect x="423.50" y="63" width="0.6" height="25.4" fill="#9fd0d0" opacity="0.35"/>
<rect x="424.50" y="63" width="0.6" height="25.4" fill="#9fd0d0" opacity="0.32"/>
<rect x="425.50" y="63" width="0.6" height="25.4" fill="#9fd0d0" opacity="0.28"/>
<rect x="426.50" y="63" width="0.6" height="25.4" fill="#9fd0d0" opacity="0.16"/>
<rect x="433.50" y="63" width="0.6" height="25.4" fill="#9fd0d0" opacity="0.26"/>
<rect x="434.50" y="63" width="0.6" height="25.4" fill="#9fd0d0" opacity="0.26"/>
<rect x="435.50" y="63" width="0.6" height="25.4" fill="#9fd0d0" opacity="0.25"/>
<rect x="436.50" y="63" width="0.6" height="25.4" fill="#9fd0d0" opacity="0.29"/>
<rect x="437.50" y="63" width="0.6" height="25.4" fill="#9fd0d0" opacity="0.25"/>
<rect x="438.50" y="63" width="0.6" height="25.4" fill="#9fd0d0" opacity="0.25"/>
<rect x="442.50" y="63" width="0.6" height="25.4" fill="#9fd0d0" opacity="0.21"/>
<rect x="443.50" y="63" width="0.6" height="25.4" fill="#9fd0d0" opacity="0.29"/>
<rect x="450.50" y="63" width="0.6" height="25.4" fill="#9fd0d0" opacity="0.25"/>
<rect x="456.50" y="63" width="0.6" height="25.4" fill="#9fd0d0" opacity="0.25"/>
<rect x="458.50" y="63" width="0.6" height="25.4" fill="#9fd0d0" opacity="0.17"/>
<rect x="461.50" y="63" width="0.6" height="25.4" fill="#9fd0d0" opacity="0.16"/>
<rect x="468.50" y="63" width="0.6" height="25.4" fill="#9fd0d0" opacity="0.16"/>
<rect x="472.50" y="63" width="0.6" height="25.4" fill="#9fd0d0" opacity="0.22"/>
<rect x="473.50" y="63" width="0.6" height="25.4" fill="#9fd0d0" opacity="0.15"/>
<rect x="475.50" y="63" width="0.6" height="25.4" fill="#9fd0d0" opacity="0.27"/>
<rect x="477.50" y="63" width="0.6" height="25.4" fill="#9fd0d0" opacity="0.28"/>
<rect x="478.50" y="63" width="0.6" height="25.4" fill="#9fd0d0" opacity="0.20"/>
<rect x="480.50" y="63" width="0.6" height="25.4" fill="#9fd0d0" opacity="0.18"/>
<rect x="481.50" y="63" width="0.6" height="25.4" fill="#9fd0d0" opacity="0.25"/>
<rect x="483.50" y="63" width="0.6" height="25.4" fill="#9fd0d0" opacity="0.20"/>
<rect x="485.50" y="63" width="0.6" height="25.4" fill="#9fd0d0" opacity="0.25"/>
<rect x="486.50" y="63" width="0.6" height="25.4" fill="#9fd0d0" opacity="0.33"/>
<rect x="487.50" y="63" width="0.6" height="25.4" fill="#9fd0d0" opacity="0.20"/>
<rect x="488.50" y="63" width="0.6" height="25.4" fill="#9fd0d0" opacity="0.22"/>
<rect x="493.50" y="63" width="0.6" height="25.4" fill="#9fd0d0" opacity="0.30"/>
<rect x="494.50" y="63" width="0.6" height="25.4" fill="#9fd0d0" opacity="0.19"/>
<rect x="495.50" y="63" width="0.6" height="25.4" fill="#9fd0d0" opacity="0.35"/>
<rect x="496.50" y="63" width="0.6" height="25.4" fill="#9fd0d0" opacity="0.22"/>
<rect x="499.50" y="63" width="0.6" height="25.4" fill="#9fd0d0" opacity="0.18"/>
<rect x="502.50" y="63" width="0.6" height="25.4" fill="#9fd0d0" opacity="0.31"/>
<rect x="503.50" y="63" width="0.6" height="25.4" fill="#9fd0d0" opacity="0.21"/>
<rect x="506.50" y="63" width="0.6" height="25.4" fill="#9fd0d0" opacity="0.31"/>
<rect x="507.50" y="63" width="0.6" height="25.4" fill="#9fd0d0" opacity="0.25"/>
<rect x="508.50" y="63" width="0.6" height="25.4" fill="#9fd0d0" opacity="0.16"/>
<rect x="510.50" y="63" width="0.6" height="25.4" fill="#9fd0d0" opacity="0.19"/>
<rect x="514.50" y="63" width="0.6" height="25.4" fill="#9fd0d0" opacity="0.34"/>
<rect x="515.50" y="63" width="0.6" height="25.4" fill="#9fd0d0" opacity="0.29"/>
<rect x="517.50" y="63" width="0.6" height="25.4" fill="#9fd0d0" opacity="0.18"/>
<rect x="522.50" y="63" width="0.6" height="25.4" fill="#9fd0d0" opacity="0.22"/>
<rect x="523.50" y="63" width="0.6" height="25.4" fill="#9fd0d0" opacity="0.20"/>
<rect x="525.50" y="63" width="0.6" height="25.4" fill="#9fd0d0" opacity="0.19"/>
<rect x="526.50" y="63" width="0.6" height="25.4" fill="#9fd0d0" opacity="0.16"/>
<rect x="527.50" y="63" width="0.6" height="25.4" fill="#9fd0d0" opacity="0.19"/>
<rect x="528.50" y="63" width="0.6" height="25.4" fill="#9fd0d0" opacity="0.26"/>
<rect x="534.50" y="63" width="0.6" height="25.4" fill="#9fd0d0" opacity="0.19"/>
<rect x="535.50" y="63" width="0.6" height="25.4" fill="#9fd0d0" opacity="0.21"/>
<rect x="539.50" y="63" width="0.6" height="25.4" fill="#9fd0d0" opacity="0.22"/>
<rect x="541.50" y="63" width="0.6" height="25.4" fill="#9fd0d0" opacity="0.31"/>
<rect x="543.50" y="63" width="0.6" height="25.4" fill="#9fd0d0" opacity="0.27"/>
<rect x="545.50" y="63" width="0.6" height="25.4" fill="#9fd0d0" opacity="0.19"/>
<rect x="548.50" y="63" width="0.6" height="25.4" fill="#9fd0d0" opacity="0.30"/>
<rect x="549.50" y="63" width="0.6" height="25.4" fill="#9fd0d0" opacity="0.16"/>
<rect x="550.50" y="63" width="0.6" height="25.4" fill="#9fd0d0" opacity="0.18"/>
<rect x="552.50" y="63" width="0.6" height="25.4" fill="#9fd0d0" opacity="0.15"/>
<rect x="553.50" y="63" width="0.6" height="25.4" fill="#9fd0d0" opacity="0.31"/>
<rect x="554.50" y="63" width="0.6" height="25.4" fill="#9fd0d0" opacity="0.28"/>
<rect x="555.50" y="63" width="0.6" height="25.4" fill="#9fd0d0" opacity="0.19"/>
<rect x="556.50" y="63" width="0.6" height="25.4" fill="#9fd0d0" opacity="0.21"/>
<rect x="557.50" y="63" width="0.6" height="25.4" fill="#9fd0d0" opacity="0.20"/>
<rect x="559.50" y="63" width="0.6" height="25.4" fill="#9fd0d0" opacity="0.24"/>
<rect x="561.50" y="63" width="0.6" height="25.4" fill="#9fd0d0" opacity="0.22"/>
<rect x="564.50" y="63" width="0.6" height="25.4" fill="#9fd0d0" opacity="0.26"/>
<rect x="565.50" y="63" width="0.6" height="25.4" fill="#9fd0d0" opacity="0.22"/>
<rect x="567.50" y="63" width="0.6" height="25.4" fill="#9fd0d0" opacity="0.34"/>
<rect x="570.50" y="63" width="0.6" height="25.4" fill="#9fd0d0" opacity="0.25"/>
<rect x="572.50" y="63" width="0.6" height="25.4" fill="#9fd0d0" opacity="0.18"/>
<rect x="574.50" y="63" width="0.6" height="25.4" fill="#9fd0d0" opacity="0.27"/>
<rect x="575.50" y="63" width="0.6" height="25.4" fill="#9fd0d0" opacity="0.34"/>
<rect x="576.50" y="63" width="0.6" height="25.4" fill="#9fd0d0" opacity="0.17"/>
<rect x="578.50" y="63" width="0.6" height="25.4" fill="#9fd0d0" opacity="0.26"/>
<rect x="579.50" y="63" width="0.6" height="25.4" fill="#9fd0d0" opacity="0.33"/>
<rect x="581.50" y="63" width="0.6" height="25.4" fill="#9fd0d0" opacity="0.15"/>
<rect x="582.50" y="63" width="0.6" height="25.4" fill="#9fd0d0" opacity="0.20"/>
<rect x="585.50" y="63" width="0.6" height="25.4" fill="#9fd0d0" opacity="0.17"/>
<rect x="586.50" y="63" width="0.6" height="25.4" fill="#9fd0d0" opacity="0.25"/>
<rect x="589.50" y="63" width="0.6" height="25.4" fill="#9fd0d0" opacity="0.24"/>
<rect x="590.50" y="63" width="0.6" height="25.4" fill="#9fd0d0" opacity="0.31"/>
<rect x="591.50" y="63" width="0.6" height="25.4" fill="#9fd0d0" opacity="0.32"/>
<rect x="593.50" y="63" width="0.6" height="25.4" fill="#9fd0d0" opacity="0.33"/>
<rect x="595.50" y="63" width="0.6" height="25.4" fill="#9fd0d0" opacity="0.26"/>
<rect x="597.50" y="63" width="0.6" height="25.4" fill="#9fd0d0" opacity="0.25"/>
<rect x="598.50" y="63" width="0.6" height="25.4" fill="#9fd0d0" opacity="0.32"/>
<rect x="600.50" y="63" width="0.6" height="25.4" fill="#9fd0d0" opacity="0.19"/>
<rect x="601.50" y="63" width="0.6" height="25.4" fill="#9fd0d0" opacity="0.32"/>
<rect x="610.50" y="63" width="0.6" height="25.4" fill="#9fd0d0" opacity="0.31"/>
<rect x="611.50" y="63" width="0.6" height="25.4" fill="#9fd0d0" opacity="0.20"/>
<rect x="613.50" y="63" width="0.6" height="25.4" fill="#9fd0d0" opacity="0.25"/>
<rect x="614.50" y="63" width="0.6" height="25.4" fill="#9fd0d0" opacity="0.31"/>
<rect x="619.50" y="63" width="0.6" height="25.4" fill="#9fd0d0" opacity="0.28"/>
<rect x="620.50" y="63" width="0.6" height="25.4" fill="#9fd0d0" opacity="0.35"/>
<rect x="622.50" y="63" width="0.6" height="25.4" fill="#9fd0d0" opacity="0.19"/>
<rect x="627.50" y="63" width="0.6" height="25.4" fill="#9fd0d0" opacity="0.30"/>
<rect x="628.50" y="63" width="0.6" height="25.4" fill="#9fd0d0" opacity="0.32"/>
<rect x="635.50" y="63" width="0.6" height="25.4" fill="#9fd0d0" opacity="0.23"/>
<rect x="636.50" y="63" width="0.6" height="25.4" fill="#9fd0d0" opacity="0.15"/>
<rect x="637.50" y="63" width="0.6" height="25.4" fill="#9fd0d0" opacity="0.31"/>
<rect x="638.50" y="63" width="0.6" height="25.4" fill="#9fd0d0" opacity="0.28"/>
<rect x="642.50" y="63" width="0.6" height="25.4" fill="#9fd0d0" opacity="0.20"/>
<rect x="643.50" y="63" width="0.6" height="25.4" fill="#9fd0d0" opacity="0.28"/>
<rect x="646.50" y="63" width="0.6" height="25.4" fill="#9fd0d0" opacity="0.34"/>
<rect x="648.50" y="63" width="0.6" height="25.4" fill="#9fd0d0" opacity="0.34"/>
<rect x="652.50" y="63" width="0.6" height="25.4" fill="#9fd0d0" opacity="0.21"/>
<rect x="654.50" y="63" width="0.6" height="25.4" fill="#9fd0d0" opacity="0.16"/>
<rect x="657.50" y="63" width="0.6" height="25.4" fill="#9fd0d0" opacity="0.30"/>
<rect x="658.50" y="63" width="0.6" height="25.4" fill="#9fd0d0" opacity="0.19"/>
<rect x="660.50" y="63" width="0.6" height="25.4" fill="#9fd0d0" opacity="0.22"/>
<rect x="661.50" y="63" width="0.6" height="25.4" fill="#9fd0d0" opacity="0.16"/>
<rect x="662.50" y="63" width="0.6" height="25.4" fill="#9fd0d0" opacity="0.26"/>
<rect x="665.50" y="63" width="0.6" height="25.4" fill="#9fd0d0" opacity="0.23"/>
<rect x="666.50" y="63" width="0.6" height="25.4" fill="#9fd0d0" opacity="0.24"/>
<rect x="668.50" y="63" width="0.6" height="25.4" fill="#9fd0d0" opacity="0.24"/>
<rect x="675.50" y="63" width="0.6" height="25.4" fill="#9fd0d0" opacity="0.26"/>
<rect x="678.50" y="63" width="0.6" height="25.4" fill="#9fd0d0" opacity="0.30"/>
<rect x="679.50" y="63" width="0.6" height="25.4" fill="#9fd0d0" opacity="0.18"/>
<rect x="681.50" y="63" width="0.6" height="25.4" fill="#9fd0d0" opacity="0.29"/>
<rect x="683.50" y="63" width="0.6" height="25.4" fill="#9fd0d0" opacity="0.30"/>
<rect x="686.50" y="63" width="0.6" height="25.4" fill="#9fd0d0" opacity="0.24"/>
<rect x="687.50" y="63" width="0.6" height="25.4" fill="#9fd0d0" opacity="0.24"/>
<rect x="690.50" y="63" width="0.6" height="25.4" fill="#9fd0d0" opacity="0.16"/>
<rect x="691.50" y="63" width="0.6" height="25.4" fill="#9fd0d0" opacity="0.29"/>
<rect x="692.50" y="63" width="0.6" height="25.4" fill="#9fd0d0" opacity="0.18"/>
<rect x="693.50" y="63" width="0.6" height="25.4" fill="#9fd0d0" opacity="0.26"/>
<rect x="695.50" y="63" width="0.6" height="25.4" fill="#9fd0d0" opacity="0.28"/>
<rect x="698.50" y="63" width="0.6" height="25.4" fill="#9fd0d0" opacity="0.29"/>
<rect x="699.50" y="63" width="0.6" height="25.4" fill="#9fd0d0" opacity="0.16"/>
<rect x="700.50" y="63" width="0.6" height="25.4" fill="#9fd0d0" opacity="0.15"/>
<rect x="701.50" y="63" width="0.6" height="25.4" fill="#9fd0d0" opacity="0.23"/>
<rect x="702.50" y="63" width="0.6" height="25.4" fill="#9fd0d0" opacity="0.17"/>
<rect x="705.50" y="63" width="0.6" height="25.4" fill="#9fd0d0" opacity="0.27"/>
<rect x="706.50" y="63" width="0.6" height="25.4" fill="#9fd0d0" opacity="0.35"/>
<rect x="707.50" y="63" width="0.6" height="25.4" fill="#9fd0d0" opacity="0.21"/>
<rect x="708.50" y="63" width="0.6" height="25.4" fill="#9fd0d0" opacity="0.32"/>
<rect x="710.50" y="63" width="0.6" height="25.4" fill="#9fd0d0" opacity="0.23"/>
<rect x="712.50" y="63" width="0.6" height="25.4" fill="#9fd0d0" opacity="0.31"/>
<rect x="714.50" y="63" width="0.6" height="25.4" fill="#9fd0d0" opacity="0.22"/>
<rect x="715.50" y="63" width="0.6" height="25.4" fill="#9fd0d0" opacity="0.24"/>
<rect x="716.50" y="63" width="0.6" height="25.4" fill="#9fd0d0" opacity="0.27"/>
<rect x="717.50" y="63" width="0.6" height="25.4" fill="#9fd0d0" opacity="0.21"/>
<rect x="719.50" y="63" width="0.6" height="25.4" fill="#9fd0d0" opacity="0.24"/>
<rect x="721.50" y="63" width="0.6" height="25.4" fill="#9fd0d0" opacity="0.23"/>
<rect x="725.50" y="63" width="0.6" height="25.4" fill="#9fd0d0" opacity="0.28"/>
<rect x="727.50" y="63" width="0.6" height="25.4" fill="#9fd0d0" opacity="0.29"/>
<rect x="731.50" y="63" width="0.6" height="25.4" fill="#9fd0d0" opacity="0.28"/>
<rect x="732.50" y="63" width="0.6" height="25.4" fill="#9fd0d0" opacity="0.30"/>
<rect x="735.50" y="63" width="0.6" height="25.4" fill="#9fd0d0" opacity="0.29"/>
<rect x="736.50" y="63" width="0.6" height="25.4" fill="#9fd0d0" opacity="0.23"/>
<rect x="738.50" y="63" width="0.6" height="25.4" fill="#9fd0d0" opacity="0.27"/>
<rect x="739.50" y="63" width="0.6" height="25.4" fill="#9fd0d0" opacity="0.23"/>
<rect x="741.50" y="63" width="0.6" height="25.4" fill="#9fd0d0" opacity="0.33"/>
<rect x="742.50" y="63" width="0.6" height="25.4" fill="#9fd0d0" opacity="0.27"/>
<rect x="745.50" y="63" width="0.6" height="25.4" fill="#9fd0d0" opacity="0.27"/>
<rect x="750.50" y="63" width="0.6" height="25.4" fill="#9fd0d0" opacity="0.29"/>
<rect x="754.50" y="63" width="0.6" height="25.4" fill="#9fd0d0" opacity="0.31"/>
<rect x="755.50" y="63" width="0.6" height="25.4" fill="#9fd0d0" opacity="0.30"/>
<rect x="757.50" y="63" width="0.6" height="25.4" fill="#9fd0d0" opacity="0.26"/>
<rect x="759.50" y="63" width="0.6" height="25.4" fill="#9fd0d0" opacity="0.18"/>
<rect x="763.50" y="63" width="0.6" height="25.4" fill="#9fd0d0" opacity="0.31"/>
<rect x="764.50" y="63" width="0.6" height="25.4" fill="#9fd0d0" opacity="0.18"/>
<rect x="766.50" y="63" width="0.6" height="25.4" fill="#9fd0d0" opacity="0.26"/>
<rect x="770.50" y="63" width="0.6" height="25.4" fill="#9fd0d0" opacity="0.30"/>
<rect x="771.50" y="63" width="0.6" height="25.4" fill="#9fd0d0" opacity="0.21"/>
<rect x="775.50" y="63" width="0.6" height="25.4" fill="#9fd0d0" opacity="0.20"/>
<rect x="776.50" y="63" width="0.6" height="25.4" fill="#9fd0d0" opacity="0.26"/>
<rect x="777.50" y="63" width="0.6" height="25.4" fill="#9fd0d0" opacity="0.22"/>
<rect x="779.50" y="63" width="0.6" height="25.4" fill="#9fd0d0" opacity="0.21"/>
<rect x="782.50" y="63" width="0.6" height="25.4" fill="#9fd0d0" opacity="0.19"/>
<rect x="783.50" y="63" width="0.6" height="25.4" fill="#9fd0d0" opacity="0.17"/>
<rect x="786.50" y="63" width="0.6" height="25.4" fill="#9fd0d0" opacity="0.25"/>
<rect x="788.50" y="63" width="0.6" height="25.4" fill="#9fd0d0" opacity="0.31"/>
<rect x="790.50" y="63" width="0.6" height="25.4" fill="#9fd0d0" opacity="0.29"/>
<rect x="792.50" y="63" width="0.6" height="25.4" fill="#9fd0d0" opacity="0.33"/>
<rect x="793.50" y="63" width="0.6" height="25.4" fill="#9fd0d0" opacity="0.24"/>
<rect x="794.50" y="63" width="0.6" height="25.4" fill="#9fd0d0" opacity="0.24"/>
<rect x="799.50" y="63" width="0.6" height="25.4" fill="#9fd0d0" opacity="0.19"/>
<rect x="801.50" y="63" width="0.6" height="25.4" fill="#9fd0d0" opacity="0.34"/>
<rect x="802.50" y="63" width="0.6" height="25.4" fill="#9fd0d0" opacity="0.24"/>
<rect x="803.50" y="63" width="0.6" height="25.4" fill="#9fd0d0" opacity="0.32"/>
<rect x="806.50" y="63" width="0.6" height="25.4" fill="#9fd0d0" opacity="0.22"/>
<rect x="808.50" y="63" width="0.6" height="25.4" fill="#9fd0d0" opacity="0.33"/>
<rect x="810.50" y="63" width="0.6" height="25.4" fill="#9fd0d0" opacity="0.22"/>
<rect x="811.50" y="63" width="0.6" height="25.4" fill="#9fd0d0" opacity="0.29"/>
<rect x="812.50" y="63" width="0.6" height="25.4" fill="#9fd0d0" opacity="0.29"/>
<rect x="813.50" y="63" width="0.6" height="25.4" fill="#9fd0d0" opacity="0.32"/>
<rect x="816.50" y="63" width="0.6" height="25.4" fill="#9fd0d0" opacity="0.16"/>
<rect x="817.50" y="63" width="0.6" height="25.4" fill="#9fd0d0" opacity="0.35"/>
<rect x="820.50" y="63" width="0.6" height="25.4" fill="#9fd0d0" opacity="0.17"/>
<rect x="821.50" y="63" width="0.6" height="25.4" fill="#9fd0d0" opacity="0.29"/>
<rect x="822.50" y="63" width="0.6" height="25.4" fill="#9fd0d0" opacity="0.20"/>
<rect x="825.50" y="63" width="0.6" height="25.4" fill="#9fd0d0" opacity="0.24"/>
<rect x="826.50" y="63" width="0.6" height="25.4" fill="#9fd0d0" opacity="0.26"/>
<rect x="827.50" y="63" width="0.6" height="25.4" fill="#9fd0d0" opacity="0.22"/>
<rect x="828.50" y="63" width="0.6" height="25.4" fill="#9fd0d0" opacity="0.21"/>
<rect x="829.50" y="63" width="0.6" height="25.4" fill="#9fd0d0" opacity="0.15"/>
<rect x="830.50" y="63" width="0.6" height="25.4" fill="#9fd0d0" opacity="0.27"/>
<rect x="831.50" y="63" width="0.6" height="25.4" fill="#9fd0d0" opacity="0.17"/>
<rect x="833.50" y="63" width="0.6" height="25.4" fill="#9fd0d0" opacity="0.25"/>
<rect x="241" y="62" width="18.4" height="26.2" fill="#809e9e" opacity="0.28"/>
</g>
<text x="219.20" y="176.10" font-size="7.4" font-weight="normal" fill="#dcdcdc" textLength="10.90" lengthAdjust="spacingAndGlyphs" stroke="#dcdcdc" stroke-width="0.35" >0,0</text>
<text x="214.90" y="164.86" font-size="7.4" font-weight="normal" fill="#dcdcdc" textLength="15.20" lengthAdjust="spacingAndGlyphs" stroke="#dcdcdc" stroke-width="0.35" >98,4</text>
<text x="210.60" y="153.62" font-size="7.4" font-weight="normal" fill="#dcdcdc" textLength="19.50" lengthAdjust="spacingAndGlyphs" stroke="#dcdcdc" stroke-width="0.35" >196,8</text>
<text x="206.30" y="142.38" font-size="7.4" font-weight="normal" fill="#dcdcdc" textLength="23.80" lengthAdjust="spacingAndGlyphs" stroke="#dcdcdc" stroke-width="0.35" >295,21</text>
<text x="206.30" y="131.14" font-size="7.4" font-weight="normal" fill="#dcdcdc" textLength="23.80" lengthAdjust="spacingAndGlyphs" stroke="#dcdcdc" stroke-width="0.35" >393,61</text>
<text x="206.30" y="119.90" font-size="7.4" font-weight="normal" fill="#dcdcdc" textLength="23.80" lengthAdjust="spacingAndGlyphs" stroke="#dcdcdc" stroke-width="0.35" >492,01</text>
<text x="206.30" y="108.66" font-size="7.4" font-weight="normal" fill="#dcdcdc" textLength="23.80" lengthAdjust="spacingAndGlyphs" stroke="#dcdcdc" stroke-width="0.35" >590,41</text>
<text x="206.30" y="97.42" font-size="7.4" font-weight="normal" fill="#dcdcdc" textLength="23.80" lengthAdjust="spacingAndGlyphs" stroke="#dcdcdc" stroke-width="0.35" >688,81</text>
<text x="206.30" y="86.18" font-size="7.4" font-weight="normal" fill="#dcdcdc" textLength="23.80" lengthAdjust="spacingAndGlyphs" stroke="#dcdcdc" stroke-width="0.35" >787,22</text>
<text x="206.30" y="74.94" font-size="7.4" font-weight="normal" fill="#dcdcdc" textLength="23.80" lengthAdjust="spacingAndGlyphs" stroke="#dcdcdc" stroke-width="0.35" >885,62</text>
<text x="206.30" y="63.70" font-size="7.4" font-weight="normal" fill="#dcdcdc" textLength="23.80" lengthAdjust="spacingAndGlyphs" stroke="#dcdcdc" stroke-width="0.35" >984,02</text>
<text x="228.00" y="192.10" font-size="8.2" font-weight="normal" fill="#dcdcdc" textLength="16.00" lengthAdjust="spacingAndGlyphs" stroke="#dcdcdc" stroke-width="0.35" >0.00</text>
<text x="257.99" y="192.10" font-size="8.2" font-weight="normal" fill="#dcdcdc" textLength="16.00" lengthAdjust="spacingAndGlyphs" stroke="#dcdcdc" stroke-width="0.35" >0.05</text>
<text x="287.97" y="192.10" font-size="8.2" font-weight="normal" fill="#dcdcdc" textLength="16.00" lengthAdjust="spacingAndGlyphs" stroke="#dcdcdc" stroke-width="0.35" >0.10</text>
<text x="317.95" y="192.10" font-size="8.2" font-weight="normal" fill="#dcdcdc" textLength="16.00" lengthAdjust="spacingAndGlyphs" stroke="#dcdcdc" stroke-width="0.35" >0.15</text>
<text x="347.94" y="192.10" font-size="8.2" font-weight="normal" fill="#dcdcdc" textLength="16.00" lengthAdjust="spacingAndGlyphs" stroke="#dcdcdc" stroke-width="0.35" >0.20</text>
<text x="377.93" y="192.10" font-size="8.2" font-weight="normal" fill="#dcdcdc" textLength="16.00" lengthAdjust="spacingAndGlyphs" stroke="#dcdcdc" stroke-width="0.35" >0.25</text>
<text x="407.91" y="192.10" font-size="8.2" font-weight="normal" fill="#dcdcdc" textLength="16.00" lengthAdjust="spacingAndGlyphs" stroke="#dcdcdc" stroke-width="0.35" >0.30</text>
<text x="437.89" y="192.10" font-size="8.2" font-weight="normal" fill="#dcdcdc" textLength="16.00" lengthAdjust="spacingAndGlyphs" stroke="#dcdcdc" stroke-width="0.35" >0.35</text>
<text x="467.88" y="192.10" font-size="8.2" font-weight="normal" fill="#dcdcdc" textLength="16.00" lengthAdjust="spacingAndGlyphs" stroke="#dcdcdc" stroke-width="0.35" >0.40</text>
<text x="497.87" y="192.10" font-size="8.2" font-weight="normal" fill="#dcdcdc" textLength="16.00" lengthAdjust="spacingAndGlyphs" stroke="#dcdcdc" stroke-width="0.35" >0.45</text>
<text x="527.85" y="192.10" font-size="8.2" font-weight="normal" fill="#dcdcdc" textLength="16.00" lengthAdjust="spacingAndGlyphs" stroke="#dcdcdc" stroke-width="0.35" >0.50</text>
<text x="557.84" y="192.10" font-size="8.2" font-weight="normal" fill="#dcdcdc" textLength="16.00" lengthAdjust="spacingAndGlyphs" stroke="#dcdcdc" stroke-width="0.35" >0.55</text>
<text x="587.82" y="192.10" font-size="8.2" font-weight="normal" fill="#dcdcdc" textLength="16.00" lengthAdjust="spacingAndGlyphs" stroke="#dcdcdc" stroke-width="0.35" >0.60</text>
<text x="617.81" y="192.10" font-size="8.2" font-weight="normal" fill="#dcdcdc" textLength="16.00" lengthAdjust="spacingAndGlyphs" stroke="#dcdcdc" stroke-width="0.35" >0.65</text>
<text x="647.79" y="192.10" font-size="8.2" font-weight="normal" fill="#dcdcdc" textLength="16.00" lengthAdjust="spacingAndGlyphs" stroke="#dcdcdc" stroke-width="0.35" >0.70</text>
<text x="677.78" y="192.10" font-size="8.2" font-weight="normal" fill="#dcdcdc" textLength="16.00" lengthAdjust="spacingAndGlyphs" stroke="#dcdcdc" stroke-width="0.35" >0.75</text>
<text x="707.76" y="192.10" font-size="8.2" font-weight="normal" fill="#dcdcdc" textLength="16.00" lengthAdjust="spacingAndGlyphs" stroke="#dcdcdc" stroke-width="0.35" >0.80</text>
<text x="737.75" y="192.10" font-size="8.2" font-weight="normal" fill="#dcdcdc" textLength="16.00" lengthAdjust="spacingAndGlyphs" stroke="#dcdcdc" stroke-width="0.35" >0.85</text>
<text x="767.73" y="192.10" font-size="8.2" font-weight="normal" fill="#dcdcdc" textLength="16.00" lengthAdjust="spacingAndGlyphs" stroke="#dcdcdc" stroke-width="0.35" >0.90</text>
<text x="797.72" y="192.10" font-size="8.2" font-weight="normal" fill="#dcdcdc" textLength="16.00" lengthAdjust="spacingAndGlyphs" stroke="#dcdcdc" stroke-width="0.35" >0.95</text>
<text x="827.70" y="192.10" font-size="8.2" font-weight="normal" fill="#dcdcdc" textLength="16.00" lengthAdjust="spacingAndGlyphs" stroke="#dcdcdc" stroke-width="0.35" >1.00</text>
<text x="487.70" y="49.80" font-size="7.2" font-weight="normal" fill="#dcdcdc" textLength="55.30" lengthAdjust="spacingAndGlyphs"  >Осциллограмма</text>
<text x="517.60" y="198.80" font-size="7.2" font-weight="normal" fill="#dcdcdc" textLength="34.40" lengthAdjust="spacingAndGlyphs"  >Время [с]</text>
<text transform="translate(200.2,150) rotate(-90)" x="0" y="0" font-size="7.2" fill="#dcdcdc" textLength="67.2" lengthAdjust="spacingAndGlyphs">Освещенность [лк]</text>
<line x1="227.0" y1="250.99" x2="834.3" y2="250.99" stroke="rgba(255,255,255,0.28)" stroke-width="1"/>
<line x1="227.0" y1="270.08" x2="834.3" y2="270.08" stroke="rgba(255,255,255,0.28)" stroke-width="1"/>
<line x1="227.0" y1="289.17" x2="834.3" y2="289.17" stroke="rgba(255,255,255,0.28)" stroke-width="1"/>
<line x1="227.0" y1="308.26" x2="834.3" y2="308.26" stroke="rgba(255,255,255,0.28)" stroke-width="1"/>
<line x1="227.0" y1="327.35" x2="834.3" y2="327.35" stroke="rgba(255,255,255,0.28)" stroke-width="1"/>
<line x1="227.0" y1="346.44" x2="834.3" y2="346.44" stroke="rgba(255,255,255,0.28)" stroke-width="1"/>
<line x1="227.0" y1="365.53" x2="834.3" y2="365.53" stroke="rgba(255,255,255,0.28)" stroke-width="1"/>
<line x1="227.0" y1="384.62" x2="834.3" y2="384.62" stroke="rgba(255,255,255,0.28)" stroke-width="1"/>
<line x1="227.0" y1="403.71" x2="834.3" y2="403.71" stroke="rgba(255,255,255,0.28)" stroke-width="1"/>
<line x1="267.49" y1="232" x2="267.49" y2="422.80" stroke="rgba(255,255,255,0.28)" stroke-width="1"/>
<line x1="307.97" y1="232" x2="307.97" y2="422.80" stroke="rgba(255,255,255,0.28)" stroke-width="1"/>
<line x1="348.46" y1="232" x2="348.46" y2="422.80" stroke="rgba(255,255,255,0.28)" stroke-width="1"/>
<line x1="388.95" y1="232" x2="388.95" y2="422.80" stroke="rgba(255,255,255,0.28)" stroke-width="1"/>
<line x1="429.43" y1="232" x2="429.43" y2="422.80" stroke="rgba(255,255,255,0.28)" stroke-width="1"/>
<line x1="469.92" y1="232" x2="469.92" y2="422.80" stroke="rgba(255,255,255,0.28)" stroke-width="1"/>
<line x1="510.41" y1="232" x2="510.41" y2="422.80" stroke="rgba(255,255,255,0.28)" stroke-width="1"/>
<line x1="550.89" y1="232" x2="550.89" y2="422.80" stroke="rgba(255,255,255,0.28)" stroke-width="1"/>
<line x1="591.38" y1="232" x2="591.38" y2="422.80" stroke="rgba(255,255,255,0.28)" stroke-width="1"/>
<line x1="631.87" y1="232" x2="631.87" y2="422.80" stroke="rgba(255,255,255,0.28)" stroke-width="1"/>
<line x1="672.35" y1="232" x2="672.35" y2="422.80" stroke="rgba(255,255,255,0.28)" stroke-width="1"/>
<line x1="712.84" y1="232" x2="712.84" y2="422.80" stroke="rgba(255,255,255,0.28)" stroke-width="1"/>
<line x1="753.33" y1="232" x2="753.33" y2="422.80" stroke="rgba(255,255,255,0.28)" stroke-width="1"/>
<line x1="793.81" y1="232" x2="793.81" y2="422.80" stroke="rgba(255,255,255,0.28)" stroke-width="1"/>
<rect x="235.6" y="239.8" width="12.9" height="12.8" rx="2.5" fill="none" stroke="#262626" stroke-width="1"/>
<rect x="235.6" y="258.5" width="12.9" height="12.8" rx="2.5" fill="none" stroke="#262626" stroke-width="1"/>
<rect x="235.6" y="276.3" width="12.9" height="12.8" rx="2.5" fill="none" stroke="#262626" stroke-width="1"/>
<rect x="235.6" y="294.6" width="12.9" height="12.8" rx="2.5" fill="none" stroke="#262626" stroke-width="1"/>
<rect x="235.6" y="312.9" width="12.9" height="12.8" rx="2.5" fill="none" stroke="#262626" stroke-width="1"/>
<path d="M237.5,246 L239.5,249 L243,242 M245.5,242 v8" stroke="#262626" stroke-width="0.8" fill="none"/>
<path d="M238,269 v-7 l2,-1.5 l2,1.5 l2,-1.5 l2,1.5 v7" stroke="#262626" stroke-width="0.8" fill="none"/>
<path d="M242,278.5 v8.5 M237.8,282.7 h8.5" stroke="#262626" stroke-width="1"/>
<path d="M237.8,301 h8.5" stroke="#262626" stroke-width="1"/>
<path d="M238,316 L241,319 L238,322 M246,316 L243,319 L246,322 M242,314.5 v9" stroke="#262626" stroke-width="0.8" fill="none"/>
<path d="M227.0,422.80 L227.00,381.41 L227.20,373.74 L227.40,375.53 L227.61,377.30 L227.81,376.83 L228.01,376.40 L228.21,378.98 L228.42,380.16 L228.62,380.49 L228.82,378.98 L229.02,379.47 L229.23,378.68 L229.43,378.64 L229.63,375.24 L229.83,373.87 L230.04,382.82 L230.24,385.53 L230.44,381.82 L230.64,385.44 L230.85,375.23 L231.05,377.60 L231.25,382.09 L231.45,383.37 L231.66,374.33 L231.86,374.78 L232.06,376.84 L232.26,376.74 L232.47,376.05 L232.67,379.94 L232.87,380.73 L233.07,378.66 L233.28,374.30 L233.48,372.84 L233.68,373.85 L233.88,374.95 L234.09,385.14 L234.29,382.85 L234.49,373.19 L234.69,378.92 L234.89,379.32 L235.10,382.07 L235.30,374.71 L235.50,379.34 L235.70,373.02 L235.91,385.26 L236.11,373.02 L236.31,386.13 L236.51,384.34 L236.72,381.13 L236.92,377.81 L237.12,384.89 L237.32,378.87 L237.53,373.85 L237.73,380.60 L237.93,376.25 L238.13,378.54 L238.34,378.68 L238.54,384.17 L238.74,380.30 L238.94,374.48 L239.15,377.52 L239.35,383.64 L239.55,380.58 L239.75,379.30 L239.96,382.08 L240.16,378.87 L240.36,378.16 L240.56,386.37 L240.77,383.68 L240.97,377.86 L241.17,383.78 L241.37,385.69 L241.58,376.49 L241.78,382.22 L241.98,373.90 L242.18,379.24 L242.38,385.37 L242.59,378.22 L242.79,383.24 L242.99,375.87 L243.19,377.09 L243.40,376.65 L243.60,386.03 L243.80,386.35 L244.00,376.15 L244.21,384.95 L244.41,384.14 L244.61,386.45 L244.81,384.68 L245.02,380.55 L245.22,374.08 L245.42,382.61 L245.62,383.45 L245.83,375.86 L246.03,384.47 L246.23,378.46 L246.43,378.74 L246.64,374.47 L246.84,386.40 L247.04,379.47 L247.24,381.89 L247.45,376.01 L247.65,383.66 L247.85,377.49 L248.05,384.58 L248.26,380.45 L248.46,374.14 L248.66,383.88 L248.86,383.37 L249.07,374.85 L249.27,378.11 L249.47,386.26 L249.67,384.66 L249.87,383.99 L250.08,383.30 L250.28,375.90 L250.48,377.84 L250.68,374.12 L250.89,378.27 L251.09,378.84 L251.29,382.13 L251.49,377.67 L251.70,380.67 L251.90,386.49 L252.10,380.72 L252.30,382.17 L252.51,380.22 L252.71,386.68 L252.91,386.97 L253.11,374.22 L253.32,382.40 L253.52,382.97 L253.72,385.41 L253.92,379.48 L254.13,375.19 L254.33,385.01 L254.53,380.75 L254.73,380.77 L254.94,377.23 L255.14,379.92 L255.34,384.29 L255.54,384.92 L255.75,377.74 L255.95,386.34 L256.15,375.80 L256.35,386.88 L256.56,384.76 L256.76,381.01 L256.96,375.95 L257.16,378.92 L257.37,377.20 L257.57,376.96 L257.77,377.45 L257.97,386.38 L258.17,376.01 L258.38,385.03 L258.58,384.81 L258.78,386.44 L258.98,386.53 L259.19,375.16 L259.39,381.76 L259.59,385.66 L259.79,386.16 L260.00,375.44 L260.20,378.68 L260.40,374.44 L260.60,386.16 L260.81,385.12 L261.01,382.76 L261.21,384.01 L261.41,385.03 L261.62,383.82 L261.82,377.91 L262.02,384.19 L262.22,384.15 L262.43,379.21 L262.63,381.32 L262.83,384.31 L263.03,378.68 L263.24,379.45 L263.44,381.03 L263.64,379.84 L263.84,385.62 L264.05,377.90 L264.25,383.50 L264.45,381.56 L264.65,385.90 L264.86,374.13 L265.06,378.10 L265.26,380.68 L265.46,378.65 L265.66,373.30 L265.87,384.06 L266.07,380.67 L266.27,376.30 L266.47,380.76 L266.68,376.26 L266.88,373.53 L267.08,385.09 L267.28,381.80 L267.49,381.66 L267.69,375.49 L267.89,374.98 L268.09,376.06 L268.30,372.99 L268.50,382.81 L268.70,379.97 L268.90,373.78 L269.11,374.89 L269.31,383.55 L269.51,371.91 L269.71,375.05 L269.92,373.32 L270.12,379.99 L270.32,376.68 L270.52,371.90 L270.73,372.66 L270.93,376.89 L271.13,372.65 L271.33,371.14 L271.54,373.21 L271.74,375.61 L271.94,371.48 L272.14,382.34 L272.35,378.81 L272.55,376.60 L272.75,382.33 L272.95,373.59 L273.15,383.14 L273.36,375.51 L273.56,380.12 L273.76,379.49 L273.96,375.63 L274.17,381.13 L274.37,377.65 L274.57,372.12 L274.77,370.33 L274.98,379.95 L275.18,378.51 L275.38,374.07 L275.58,380.75 L275.79,371.88 L275.99,380.51 L276.19,375.67 L276.39,378.52 L276.60,382.98 L276.80,382.93 L277.00,382.86 L277.20,378.44 L277.41,379.09 L277.61,369.46 L277.81,374.10 L278.01,381.65 L278.22,372.87 L278.42,379.24 L278.62,375.81 L278.82,372.50 L279.03,370.62 L279.23,369.47 L279.43,376.25 L279.63,377.54 L279.84,376.38 L280.04,377.42 L280.24,371.60 L280.44,375.23 L280.64,372.16 L280.85,379.20 L281.05,370.68 L281.25,368.13 L281.45,378.24 L281.66,372.62 L281.86,378.61 L282.06,380.21 L282.26,375.05 L282.47,378.05 L282.67,370.64 L282.87,372.66 L283.07,371.20 L283.28,367.19 L283.48,379.25 L283.68,378.63 L283.88,379.37 L284.09,373.64 L284.29,368.68 L284.49,370.49 L284.69,372.23 L284.90,368.04 L285.10,374.43 L285.30,377.49 L285.50,370.69 L285.71,376.58 L285.91,376.05 L286.11,375.65 L286.31,375.18 L286.52,374.70 L286.72,371.72 L286.92,373.73 L287.12,370.61 L287.33,367.59 L287.53,372.23 L287.73,371.72 L287.93,369.41 L288.13,368.57 L288.34,366.42 L288.54,369.60 L288.74,369.05 L288.94,366.48 L289.15,367.94 L289.35,364.84 L289.55,366.78 L289.75,366.20 L289.96,365.60 L290.16,364.99 L290.36,364.38 L290.56,363.75 L290.77,363.11 L290.97,362.46 L291.17,361.80 L291.37,361.13 L291.58,360.44 L291.78,359.74 L291.98,359.03 L292.18,358.30 L292.39,357.55 L292.59,356.79 L292.79,356.01 L292.99,355.33 L293.20,354.63 L293.40,353.91 L293.60,353.17 L293.80,352.40 L294.01,351.61 L294.21,350.80 L294.41,349.95 L294.61,349.08 L294.82,348.18 L295.02,347.24 L295.22,346.26 L295.42,345.25 L295.62,344.19 L295.83,343.08 L296.03,341.93 L296.23,340.71 L296.43,339.44 L296.64,338.09 L296.84,336.67 L297.04,335.16 L297.24,333.56 L297.45,331.84 L297.65,330.00 L297.85,328.01 L298.05,325.84 L298.26,323.47 L298.46,320.85 L298.66,317.92 L298.86,314.60 L299.07,310.77 L299.27,306.23 L299.47,300.68 L299.67,293.53 L299.88,283.44 L300.08,293.53 L300.28,300.68 L300.48,306.23 L300.69,310.77 L300.89,314.60 L301.09,317.92 L301.29,320.85 L301.50,323.47 L301.70,325.84 L301.90,328.01 L302.10,330.00 L302.31,331.84 L302.51,333.56 L302.71,335.16 L302.91,336.67 L303.11,338.09 L303.32,339.44 L303.52,340.71 L303.72,341.93 L303.92,343.08 L304.13,344.19 L304.33,345.25 L304.53,346.26 L304.73,347.24 L304.94,348.18 L305.14,349.08 L305.34,349.95 L305.54,350.80 L305.75,351.61 L305.95,352.40 L306.15,353.17 L306.35,353.91 L306.56,354.63 L306.76,355.33 L306.96,356.01 L307.16,356.79 L307.37,357.55 L307.57,358.30 L307.77,359.03 L307.97,359.74 L308.18,360.44 L308.38,361.13 L308.58,361.80 L308.78,362.46 L308.99,363.11 L309.19,363.75 L309.39,364.38 L309.59,364.99 L309.80,365.60 L310.00,366.20 L310.20,366.78 L310.40,367.36 L310.60,367.94 L310.81,368.50 L311.01,368.28 L311.21,369.60 L311.41,370.14 L311.62,370.67 L311.82,371.20 L312.02,371.72 L312.22,370.80 L312.43,372.26 L312.63,370.19 L312.83,369.55 L313.03,374.22 L313.24,372.46 L313.44,374.84 L313.64,374.67 L313.84,375.17 L314.05,373.00 L314.25,375.55 L314.45,375.69 L314.65,371.76 L314.86,372.28 L315.06,373.42 L315.26,372.18 L315.46,376.07 L315.67,374.09 L315.87,377.44 L316.07,377.05 L316.27,378.94 L316.48,373.35 L316.68,372.47 L316.88,377.68 L317.08,377.19 L317.29,379.47 L317.49,379.40 L317.69,375.46 L317.89,373.51 L318.10,380.27 L318.30,379.00 L318.50,375.00 L318.70,379.50 L318.90,374.29 L319.11,378.73 L319.31,377.87 L319.51,380.35 L319.71,379.86 L319.92,379.01 L320.12,379.37 L320.32,377.55 L320.52,381.00 L320.73,378.45 L320.93,377.95 L321.13,380.38 L321.33,381.24 L321.54,381.82 L321.74,382.26 L321.94,379.23 L322.14,380.34 L322.35,383.28 L322.55,381.52 L322.75,381.10 L322.95,382.63 L323.16,384.18 L323.36,382.65 L323.56,383.21 L323.76,380.62 L323.97,383.67 L324.17,381.34 L324.37,381.84 L324.57,383.43 L324.78,385.73 L324.98,382.85 L325.18,386.39 L325.38,384.49 L325.59,386.85 L325.79,387.03 L325.99,385.73 L326.19,387.06 L326.39,383.39 L326.60,385.44 L326.80,384.14 L327.00,384.03 L327.20,385.10 L327.41,385.77 L327.61,386.72 L327.81,385.49 L328.01,386.14 L328.22,388.65 L328.42,387.10 L328.62,387.80 L328.82,387.49 L329.03,386.74 L329.23,387.01 L329.43,387.72 L329.63,386.88 L329.84,386.87 L330.04,390.39 L330.24,390.30 L330.44,390.91 L330.65,390.55 L330.85,387.05 L331.05,390.19 L331.25,389.76 L331.46,389.80 L331.66,389.50 L331.86,390.97 L332.06,388.84 L332.27,391.05 L332.47,388.85 L332.67,389.21 L332.87,393.04 L333.08,390.70 L333.28,392.94 L333.48,389.48 L333.68,393.37 L333.88,392.62 L334.09,390.48 L334.29,391.46 L334.49,391.28 L334.69,392.62 L334.90,392.30 L335.10,393.93 L335.30,392.91 L335.50,394.03 L335.71,392.28 L335.91,395.06 L336.11,395.09 L336.31,394.99 L336.52,393.63 L336.72,393.58 L336.92,396.40 L337.12,392.07 L337.33,392.93 L337.53,395.20 L337.73,396.38 L337.93,393.50 L338.14,392.98 L338.34,396.81 L338.54,394.34 L338.74,394.23 L338.95,393.85 L339.15,397.36 L339.35,397.94 L339.55,397.91 L339.76,397.78 L339.96,394.89 L340.16,395.02 L340.36,397.19 L340.57,398.95 L340.77,398.09 L340.97,398.77 L341.17,397.08 L341.37,396.93 L341.58,396.84 L341.78,398.57 L341.98,398.65 L342.18,398.77 L342.39,399.39 L342.59,399.18 L342.79,398.30 L342.99,398.35 L343.20,400.26 L343.40,399.30 L343.60,401.38 L343.80,401.98 L344.01,400.56 L344.21,400.84 L344.41,402.48 L344.61,402.41 L344.82,400.97 L345.02,398.75 L345.22,399.37 L345.42,403.22 L345.63,402.05 L345.83,401.96 L346.03,402.37 L346.23,403.31 L346.44,401.38 L346.64,400.38 L346.84,402.62 L347.04,403.71 L347.25,404.18 L347.45,404.74 L347.65,401.45 L347.85,404.04 L348.06,401.93 L348.26,401.77 L348.46,405.15 L348.66,404.82 L348.86,404.38 L349.07,402.45 L349.27,402.74 L349.47,404.88 L349.67,404.34 L349.88,404.93 L350.08,404.54 L350.28,403.21 L350.48,405.79 L350.69,403.42 L350.89,403.07 L351.09,404.67 L351.29,403.18 L351.50,403.42 L351.70,407.04 L351.90,403.39 L352.10,407.11 L352.31,404.45 L352.51,407.69 L352.71,406.96 L352.91,406.42 L353.12,404.71 L353.32,405.54 L353.52,407.83 L353.72,404.76 L353.93,405.01 L354.13,406.74 L354.33,408.95 L354.53,407.98 L354.74,408.05 L354.94,407.58 L355.14,405.28 L355.34,406.98 L355.55,406.05 L355.75,409.59 L355.95,408.89 L356.15,406.77 L356.35,408.67 L356.56,409.29 L356.76,410.15 L356.96,410.31 L357.16,408.76 L357.37,408.25 L357.57,409.02 L357.77,408.37 L357.97,409.73 L358.18,411.09 L358.38,408.18 L358.58,409.84 L358.78,409.23 L358.99,409.86 L359.19,410.45 L359.39,411.56 L359.59,410.54 L359.80,410.64 L360.00,411.58 L360.20,412.06 L360.40,410.07 L360.61,412.27 L360.81,408.41 L361.01,410.87 L361.21,410.57 L361.42,410.28 L361.62,412.66 L361.82,412.39 L362.02,409.33 L362.23,410.47 L362.43,410.84 L362.63,411.61 L362.83,409.82 L363.04,411.04 L363.24,409.80 L363.44,409.68 L363.64,409.50 L363.84,410.35 L364.05,410.67 L364.25,411.72 L364.45,411.48 L364.65,411.35 L364.86,411.68 L365.06,410.42 L365.26,410.32 L365.46,414.09 L365.67,410.97 L365.87,411.67 L366.07,411.84 L366.27,410.50 L366.48,414.52 L366.68,412.65 L366.88,413.19 L367.08,410.65 L367.29,414.32 L367.49,412.58 L367.69,414.58 L367.89,411.87 L368.10,413.16 L368.30,412.12 L368.50,414.16 L368.70,411.60 L368.91,415.70 L369.11,414.79 L369.31,412.54 L369.51,411.95 L369.72,412.50 L369.92,414.88 L370.12,415.86 L370.32,413.06 L370.53,413.02 L370.73,416.15 L370.93,412.20 L371.13,414.13 L371.33,416.45 L371.54,414.46 L371.74,415.17 L371.94,416.30 L372.14,412.78 L372.35,412.61 L372.55,416.39 L372.75,414.97 L372.95,415.82 L373.16,415.71 L373.36,420.01 L373.56,419.02 L373.76,418.71 L373.97,418.47 L374.17,418.69 L374.37,417.99 L374.57,416.46 L374.78,416.54 L374.98,416.69 L375.18,417.09 L375.38,419.89 L375.59,419.86 L375.79,418.91 L375.99,418.11 L376.19,418.33 L376.40,419.54 L376.60,416.64 L376.80,419.80 L377.00,421.18 L377.21,420.90 L377.41,420.40 L377.61,418.05 L377.81,417.59 L378.02,421.29 L378.22,420.44 L378.42,420.46 L378.62,418.01 L378.82,417.54 L379.03,420.49 L379.23,421.27 L379.43,417.35 L379.63,417.37 L379.84,418.58 L380.04,419.74 L380.24,418.53 L380.44,418.48 L380.65,419.70 L380.85,420.85 L381.05,419.74 L381.25,419.16 L381.46,420.76 L381.66,419.37 L381.86,421.68 L382.06,417.96 L382.27,421.49 L382.47,421.48 L382.67,418.17 L382.87,418.27 L383.08,418.44 L383.28,418.88 L383.48,418.89 L383.68,419.07 L383.89,420.29 L384.09,422.60 L384.29,419.64 L384.49,419.22 L384.70,419.26 L384.90,422.96 L385.10,422.93 L385.30,419.91 L385.51,421.08 L385.71,419.27 L385.91,418.88 L386.11,421.43 L386.32,420.43 L386.52,420.53 L386.72,420.46 L386.92,422.00 L387.12,420.81 L387.33,423.18 L387.53,419.72 L387.73,420.59 L387.93,420.28 L388.14,421.89 L388.34,423.12 L388.54,422.05 L388.74,421.05 L388.95,421.71 L389.15,423.18 L389.35,423.18 L389.55,422.58 L389.76,423.18 L389.96,423.18 L390.16,423.18 L390.36,422.80 L390.57,421.60 L390.77,420.68 L390.97,421.84 L391.17,423.18 L391.38,421.12 L391.58,422.38 L391.78,421.89 L391.98,422.51 L392.19,423.18 L392.39,423.18 L392.59,423.18 L392.79,422.58 L393.00,423.18 L393.20,422.66 L393.40,421.68 L393.60,422.79 L393.81,423.08 L394.01,422.15 L394.21,421.46 L394.41,422.13 L394.61,421.32 L394.82,423.18 L395.02,423.18 L395.22,423.18 L395.42,423.18 L395.63,423.18 L395.83,423.18 L396.03,423.18 L396.23,423.18 L396.44,423.18 L396.64,423.18 L396.84,423.18 L397.04,423.18 L397.25,423.18 L397.45,423.18 L397.65,423.18 L397.85,423.18 L398.06,423.18 L398.26,423.18 L398.46,423.18 L398.66,423.18 L398.87,423.18 L399.07,423.18 L399.27,423.18 L399.47,423.18 L399.68,423.18 L399.88,423.18 L400.08,423.18 L400.28,423.18 L400.49,423.18 L400.69,423.18 L400.89,423.18 L401.09,423.18 L401.30,423.18 L401.50,423.18 L401.70,423.18 L401.90,423.18 L402.10,423.18 L402.31,423.18 L402.51,423.18 L402.71,423.18 L402.91,423.18 L403.12,423.18 L403.32,423.18 L403.52,423.18 L403.72,423.18 L403.93,423.18 L404.13,423.18 L404.33,423.18 L404.53,423.18 L404.74,423.18 L404.94,423.18 L405.14,423.18 L405.34,423.18 L405.55,423.18 L405.75,423.18 L405.95,423.18 L406.15,423.18 L406.36,423.18 L406.56,423.18 L406.76,423.18 L406.96,423.18 L407.17,423.18 L407.37,423.18 L407.57,423.18 L407.77,423.18 L407.98,423.18 L408.18,423.18 L408.38,423.18 L408.58,423.18 L408.79,423.18 L408.99,423.18 L409.19,423.18 L409.39,423.18 L409.59,423.18 L409.80,423.18 L410.00,423.18 L410.20,423.18 L410.40,423.18 L410.61,423.18 L410.81,423.18 L411.01,423.18 L411.21,423.18 L411.42,423.18 L411.62,423.18 L411.82,423.18 L412.02,423.18 L412.23,423.18 L412.43,423.18 L412.63,423.18 L412.83,423.18 L413.04,423.18 L413.24,423.18 L413.44,423.18 L413.64,423.18 L413.85,423.18 L414.05,423.18 L414.25,423.18 L414.45,423.18 L414.66,423.18 L414.86,423.18 L415.06,423.18 L415.26,423.18 L415.47,423.18 L415.67,423.18 L415.87,423.18 L416.07,423.18 L416.28,423.18 L416.48,423.18 L416.68,423.18 L416.88,423.18 L417.08,423.18 L417.29,423.18 L417.49,423.18 L417.69,423.18 L417.89,423.18 L418.10,423.18 L418.30,423.18 L418.50,423.18 L418.70,423.18 L418.91,423.18 L419.11,423.18 L419.31,423.18 L419.51,423.18 L419.72,423.18 L419.92,423.18 L420.12,423.18 L420.32,423.18 L420.53,423.18 L420.73,423.18 L420.93,423.18 L421.13,423.18 L421.34,423.18 L421.54,423.18 L421.74,423.18 L421.94,423.18 L422.15,423.18 L422.35,423.18 L422.55,423.18 L422.75,423.18 L422.96,423.18 L423.16,423.18 L423.36,423.18 L423.56,423.18 L423.77,423.18 L423.97,423.18 L424.17,423.18 L424.37,423.18 L424.57,423.18 L424.78,423.18 L424.98,423.18 L425.18,423.18 L425.38,423.18 L425.59,423.18 L425.79,423.18 L425.99,423.18 L426.19,423.18 L426.40,423.18 L426.60,423.18 L426.80,423.18 L427.00,423.18 L427.21,423.18 L427.41,423.18 L427.61,423.18 L427.81,423.18 L428.02,423.18 L428.22,423.18 L428.42,423.18 L428.62,423.18 L428.83,423.18 L429.03,423.18 L429.23,423.18 L429.43,423.18 L429.64,423.18 L429.84,423.18 L430.04,423.18 L430.24,423.18 L430.45,423.18 L430.65,423.18 L430.85,423.18 L431.05,423.18 L431.26,423.18 L431.46,423.18 L431.66,423.18 L431.86,423.18 L432.06,423.18 L432.27,423.18 L432.47,423.18 L432.67,423.18 L432.87,423.18 L433.08,423.18 L433.28,423.18 L433.48,423.18 L433.68,423.18 L433.89,423.18 L434.09,423.18 L434.29,423.18 L434.49,423.18 L434.70,423.18 L434.90,423.18 L435.10,423.18 L435.30,423.18 L435.51,423.18 L435.71,423.18 L435.91,423.18 L436.11,423.18 L436.32,423.18 L436.52,423.18 L436.72,423.18 L436.92,423.18 L437.13,423.18 L437.33,423.18 L437.53,423.18 L437.73,423.18 L437.94,423.18 L438.14,423.18 L438.34,423.18 L438.54,423.18 L438.75,423.18 L438.95,423.18 L439.15,423.18 L439.35,423.18 L439.56,423.18 L439.76,423.18 L439.96,423.18 L440.16,423.18 L440.36,423.18 L440.57,423.18 L440.77,423.18 L440.97,423.18 L441.17,423.18 L441.38,423.18 L441.58,423.18 L441.78,423.18 L441.98,423.18 L442.19,423.18 L442.39,423.18 L442.59,423.18 L442.79,423.18 L443.00,423.18 L443.20,423.18 L443.40,423.18 L443.60,423.18 L443.81,423.18 L444.01,423.18 L444.21,423.18 L444.41,423.18 L444.62,423.18 L444.82,423.18 L445.02,423.18 L445.22,423.18 L445.43,423.18 L445.63,423.18 L445.83,423.18 L446.03,423.18 L446.24,423.18 L446.44,423.18 L446.64,423.18 L446.84,423.18 L447.05,423.18 L447.25,423.18 L447.45,423.18 L447.65,423.18 L447.85,423.18 L448.06,423.18 L448.26,423.18 L448.46,423.18 L448.66,423.18 L448.87,423.18 L449.07,423.18 L449.27,423.18 L449.47,423.18 L449.68,423.18 L449.88,423.18 L450.08,423.18 L450.28,423.18 L450.49,423.18 L450.69,423.18 L450.89,423.18 L451.09,423.18 L451.30,423.18 L451.50,423.18 L451.70,423.18 L451.90,423.18 L452.11,423.18 L452.31,423.18 L452.51,423.18 L452.71,423.18 L452.92,423.18 L453.12,423.18 L453.32,423.18 L453.52,423.18 L453.73,423.18 L453.93,423.18 L454.13,423.18 L454.33,423.18 L454.54,423.18 L454.74,423.18 L454.94,423.18 L455.14,423.18 L455.34,423.18 L455.55,423.18 L455.75,423.18 L455.95,423.18 L456.15,423.18 L456.36,423.18 L456.56,423.18 L456.76,423.18 L456.96,423.18 L457.17,423.18 L457.37,423.18 L457.57,423.18 L457.77,423.18 L457.98,423.18 L458.18,423.18 L458.38,423.18 L458.58,423.18 L458.79,423.18 L458.99,423.18 L459.19,423.18 L459.39,423.18 L459.60,423.18 L459.80,423.18 L460.00,423.18 L460.20,423.18 L460.41,423.18 L460.61,423.18 L460.81,423.18 L461.01,423.18 L461.22,423.18 L461.42,423.18 L461.62,423.18 L461.82,423.18 L462.03,423.18 L462.23,423.18 L462.43,423.18 L462.63,423.18 L462.83,423.18 L463.04,423.18 L463.24,423.18 L463.44,423.18 L463.64,423.18 L463.85,423.18 L464.05,423.18 L464.25,423.18 L464.45,423.18 L464.66,423.18 L464.86,423.18 L465.06,423.18 L465.26,423.18 L465.47,423.18 L465.67,423.18 L465.87,423.18 L466.07,423.18 L466.28,423.18 L466.48,423.18 L466.68,423.18 L466.88,423.18 L467.09,423.18 L467.29,423.18 L467.49,423.18 L467.69,423.18 L467.90,423.18 L468.10,423.18 L468.30,423.18 L468.50,423.18 L468.71,423.18 L468.91,423.18 L469.11,423.18 L469.31,423.18 L469.52,423.18 L469.72,423.18 L469.92,423.18 L470.12,423.18 L470.32,423.18 L470.53,423.18 L470.73,423.18 L470.93,423.18 L471.13,423.18 L471.34,423.18 L471.54,423.18 L471.74,423.18 L471.94,423.18 L472.15,423.18 L472.35,423.18 L472.55,423.18 L472.75,423.18 L472.96,423.18 L473.16,423.18 L473.36,423.18 L473.56,423.18 L473.77,423.18 L473.97,423.18 L474.17,423.18 L474.37,423.18 L474.58,423.18 L474.78,423.18 L474.98,423.18 L475.18,423.18 L475.39,423.18 L475.59,423.18 L475.79,423.18 L475.99,423.18 L476.20,423.18 L476.40,423.18 L476.60,423.18 L476.80,423.18 L477.01,423.18 L477.21,423.18 L477.41,423.18 L477.61,423.18 L477.81,423.18 L478.02,423.18 L478.22,423.18 L478.42,423.18 L478.62,423.18 L478.83,423.18 L479.03,423.18 L479.23,423.18 L479.43,423.18 L479.64,423.18 L479.84,423.18 L480.04,423.18 L480.24,423.18 L480.45,423.18 L480.65,423.18 L480.85,423.18 L481.05,423.18 L481.26,423.18 L481.46,423.18 L481.66,423.18 L481.86,423.18 L482.07,423.18 L482.27,423.18 L482.47,423.18 L482.67,423.18 L482.88,423.18 L483.08,423.18 L483.28,423.18 L483.48,423.18 L483.69,423.18 L483.89,423.18 L484.09,423.18 L484.29,423.18 L484.50,423.18 L484.70,423.18 L484.90,423.18 L485.10,423.18 L485.30,423.18 L485.51,423.18 L485.71,423.18 L485.91,423.18 L486.11,423.18 L486.32,423.18 L486.52,423.18 L486.72,423.18 L486.92,423.18 L487.13,423.18 L487.33,423.18 L487.53,423.18 L487.73,423.18 L487.94,423.18 L488.14,423.18 L488.34,423.18 L488.54,423.18 L488.75,423.18 L488.95,423.18 L489.15,423.18 L489.35,423.18 L489.56,423.18 L489.76,423.18 L489.96,423.18 L490.16,423.18 L490.37,423.18 L490.57,423.18 L490.77,423.18 L490.97,423.18 L491.18,423.18 L491.38,423.18 L491.58,423.18 L491.78,423.18 L491.99,423.18 L492.19,423.18 L492.39,423.18 L492.59,423.18 L492.79,423.18 L493.00,423.18 L493.20,423.18 L493.40,423.18 L493.60,423.18 L493.81,423.18 L494.01,423.18 L494.21,423.18 L494.41,423.18 L494.62,423.18 L494.82,423.18 L495.02,423.18 L495.22,423.18 L495.43,423.18 L495.63,423.18 L495.83,423.18 L496.03,423.18 L496.24,423.18 L496.44,423.18 L496.64,423.18 L496.84,423.18 L497.05,423.18 L497.25,423.18 L497.45,423.18 L497.65,423.18 L497.86,423.18 L498.06,423.18 L498.26,423.18 L498.46,423.18 L498.67,423.18 L498.87,423.18 L499.07,423.18 L499.27,423.18 L499.48,423.18 L499.68,423.18 L499.88,423.18 L500.08,423.18 L500.28,423.18 L500.49,423.18 L500.69,423.18 L500.89,423.18 L501.09,423.18 L501.30,423.18 L501.50,423.18 L501.70,423.18 L501.90,423.18 L502.11,423.18 L502.31,423.18 L502.51,423.18 L502.71,423.18 L502.92,423.18 L503.12,423.18 L503.32,423.18 L503.52,423.18 L503.73,423.18 L503.93,423.18 L504.13,423.18 L504.33,423.18 L504.54,423.18 L504.74,423.18 L504.94,423.18 L505.14,423.18 L505.35,423.18 L505.55,423.18 L505.75,423.18 L505.95,423.18 L506.16,423.18 L506.36,423.18 L506.56,423.18 L506.76,423.18 L506.97,423.18 L507.17,423.18 L507.37,423.18 L507.57,423.18 L507.78,423.18 L507.98,423.18 L508.18,423.18 L508.38,423.18 L508.58,423.18 L508.79,423.18 L508.99,423.18 L509.19,423.18 L509.39,423.18 L509.60,423.18 L509.80,423.18 L510.00,423.18 L510.20,423.18 L510.41,423.18 L510.61,423.18 L510.81,423.18 L511.01,423.18 L511.22,423.18 L511.42,423.18 L511.62,423.18 L511.82,423.18 L512.03,423.18 L512.23,423.18 L512.43,423.18 L512.63,423.18 L512.84,423.18 L513.04,423.18 L513.24,423.18 L513.44,423.18 L513.65,423.18 L513.85,423.18 L514.05,423.18 L514.25,423.18 L514.46,423.18 L514.66,423.18 L514.86,423.18 L515.06,423.18 L515.27,423.18 L515.47,423.18 L515.67,423.18 L515.87,423.18 L516.07,423.18 L516.28,423.18 L516.48,423.18 L516.68,423.18 L516.88,423.18 L517.09,423.18 L517.29,423.18 L517.49,423.18 L517.69,423.18 L517.90,423.18 L518.10,423.18 L518.30,423.18 L518.50,423.18 L518.71,423.18 L518.91,423.18 L519.11,423.18 L519.31,423.18 L519.52,423.18 L519.72,423.18 L519.92,423.18 L520.12,423.18 L520.33,423.18 L520.53,423.18 L520.73,423.18 L520.93,423.18 L521.14,423.18 L521.34,423.18 L521.54,423.18 L521.74,423.18 L521.95,423.18 L522.15,423.18 L522.35,423.18 L522.55,423.18 L522.76,423.18 L522.96,423.18 L523.16,423.18 L523.36,423.18 L523.56,423.18 L523.77,423.18 L523.97,423.18 L524.17,423.18 L524.37,423.18 L524.58,423.18 L524.78,423.18 L524.98,423.18 L525.18,423.18 L525.39,423.18 L525.59,423.18 L525.79,423.18 L525.99,423.18 L526.20,423.18 L526.40,423.18 L526.60,423.18 L526.80,423.18 L527.01,423.18 L527.21,423.18 L527.41,423.18 L527.61,423.18 L527.82,423.18 L528.02,423.18 L528.22,423.18 L528.42,423.18 L528.63,423.18 L528.83,423.18 L529.03,423.18 L529.23,423.18 L529.44,423.18 L529.64,423.18 L529.84,423.18 L530.04,423.18 L530.25,423.18 L530.45,423.18 L530.65,423.18 L530.85,423.18 L531.05,423.18 L531.26,423.18 L531.46,423.18 L531.66,423.18 L531.86,423.18 L532.07,423.18 L532.27,423.18 L532.47,423.18 L532.67,423.18 L532.88,423.18 L533.08,423.18 L533.28,423.18 L533.48,423.18 L533.69,423.18 L533.89,423.18 L534.09,423.18 L534.29,423.18 L534.50,423.18 L534.70,423.18 L534.90,423.18 L535.10,423.18 L535.31,423.18 L535.51,423.18 L535.71,423.18 L535.91,423.18 L536.12,423.18 L536.32,423.18 L536.52,423.18 L536.72,423.18 L536.93,423.18 L537.13,423.18 L537.33,423.18 L537.53,423.18 L537.74,423.18 L537.94,423.18 L538.14,423.18 L538.34,423.18 L538.54,423.18 L538.75,423.18 L538.95,423.18 L539.15,423.18 L539.35,423.18 L539.56,423.18 L539.76,423.18 L539.96,423.18 L540.16,423.18 L540.37,423.18 L540.57,423.18 L540.77,423.18 L540.97,423.18 L541.18,423.18 L541.38,423.18 L541.58,423.18 L541.78,423.18 L541.99,423.18 L542.19,423.18 L542.39,423.18 L542.59,423.18 L542.80,423.18 L543.00,423.18 L543.20,423.18 L543.40,423.18 L543.61,423.18 L543.81,423.18 L544.01,423.18 L544.21,423.18 L544.42,423.18 L544.62,423.18 L544.82,423.18 L545.02,423.18 L545.23,423.18 L545.43,423.18 L545.63,423.18 L545.83,423.18 L546.03,423.18 L546.24,423.18 L546.44,423.18 L546.64,423.18 L546.84,423.18 L547.05,423.18 L547.25,423.18 L547.45,423.18 L547.65,423.18 L547.86,423.18 L548.06,423.18 L548.26,423.18 L548.46,423.18 L548.67,423.18 L548.87,423.18 L549.07,423.18 L549.27,423.18 L549.48,423.18 L549.68,423.18 L549.88,423.18 L550.08,423.18 L550.29,423.18 L550.49,423.18 L550.69,423.18 L550.89,423.18 L551.10,423.18 L551.30,423.18 L551.50,423.18 L551.70,423.18 L551.91,423.18 L552.11,423.18 L552.31,423.18 L552.51,423.18 L552.72,423.18 L552.92,423.18 L553.12,423.18 L553.32,423.18 L553.52,423.18 L553.73,423.18 L553.93,423.18 L554.13,423.18 L554.33,423.18 L554.54,423.18 L554.74,423.18 L554.94,423.18 L555.14,423.18 L555.35,423.18 L555.55,423.18 L555.75,423.18 L555.95,423.18 L556.16,423.18 L556.36,423.18 L556.56,423.18 L556.76,423.18 L556.97,423.18 L557.17,423.18 L557.37,423.18 L557.57,423.18 L557.78,423.18 L557.98,423.18 L558.18,423.18 L558.38,423.18 L558.59,423.18 L558.79,423.18 L558.99,423.18 L559.19,423.18 L559.40,423.18 L559.60,423.18 L559.80,423.18 L560.00,423.18 L560.21,423.18 L560.41,423.18 L560.61,423.18 L560.81,423.18 L561.01,423.18 L561.22,423.18 L561.42,423.18 L561.62,423.18 L561.82,423.18 L562.03,423.18 L562.23,423.18 L562.43,423.18 L562.63,423.18 L562.84,423.18 L563.04,423.18 L563.24,423.18 L563.44,423.18 L563.65,423.18 L563.85,423.18 L564.05,423.18 L564.25,423.18 L564.46,423.18 L564.66,423.18 L564.86,423.18 L565.06,423.18 L565.27,423.18 L565.47,423.18 L565.67,423.18 L565.87,423.18 L566.08,423.18 L566.28,423.18 L566.48,423.18 L566.68,423.18 L566.89,423.18 L567.09,423.18 L567.29,423.18 L567.49,423.18 L567.70,423.18 L567.90,423.18 L568.10,423.18 L568.30,423.18 L568.51,423.18 L568.71,423.18 L568.91,423.18 L569.11,423.18 L569.31,423.18 L569.52,423.18 L569.72,423.18 L569.92,423.18 L570.12,423.18 L570.33,423.18 L570.53,423.18 L570.73,423.18 L570.93,423.18 L571.14,423.18 L571.34,423.18 L571.54,423.18 L571.74,423.18 L571.95,423.18 L572.15,423.18 L572.35,423.18 L572.55,423.18 L572.76,423.18 L572.96,423.18 L573.16,423.18 L573.36,423.18 L573.57,423.18 L573.77,423.18 L573.97,423.18 L574.17,423.18 L574.38,423.18 L574.58,423.18 L574.78,423.18 L574.98,423.18 L575.19,423.18 L575.39,423.18 L575.59,423.18 L575.79,423.18 L576.00,423.18 L576.20,423.18 L576.40,423.18 L576.60,423.18 L576.80,423.18 L577.01,423.18 L577.21,423.18 L577.41,423.18 L577.61,423.18 L577.82,423.18 L578.02,423.18 L578.22,423.18 L578.42,423.18 L578.63,423.18 L578.83,423.18 L579.03,423.18 L579.23,423.18 L579.44,423.18 L579.64,423.18 L579.84,423.18 L580.04,423.18 L580.25,423.18 L580.45,423.18 L580.65,423.18 L580.85,423.18 L581.06,423.18 L581.26,423.18 L581.46,423.18 L581.66,423.18 L581.87,423.18 L582.07,423.18 L582.27,423.18 L582.47,423.18 L582.68,423.18 L582.88,423.18 L583.08,423.18 L583.28,423.18 L583.49,423.18 L583.69,423.18 L583.89,423.18 L584.09,423.18 L584.29,423.18 L584.50,423.18 L584.70,423.18 L584.90,423.18 L585.10,423.18 L585.31,423.18 L585.51,423.18 L585.71,423.18 L585.91,423.18 L586.12,423.18 L586.32,423.18 L586.52,423.18 L586.72,423.18 L586.93,423.18 L587.13,423.18 L587.33,423.18 L587.53,423.18 L587.74,423.18 L587.94,423.18 L588.14,423.18 L588.34,423.18 L588.55,423.18 L588.75,423.18 L588.95,423.18 L589.15,423.18 L589.36,423.18 L589.56,423.18 L589.76,423.18 L589.96,423.18 L590.17,423.18 L590.37,423.18 L590.57,423.18 L590.77,423.18 L590.98,423.18 L591.18,423.18 L591.38,423.18 L591.58,423.18 L591.78,423.18 L591.99,423.18 L592.19,423.18 L592.39,423.18 L592.59,423.18 L592.80,423.18 L593.00,423.18 L593.20,423.18 L593.40,423.18 L593.61,423.18 L593.81,423.18 L594.01,423.18 L594.21,423.18 L594.42,423.18 L594.62,423.18 L594.82,423.18 L595.02,423.18 L595.23,423.18 L595.43,423.18 L595.63,423.18 L595.83,423.18 L596.04,423.18 L596.24,423.18 L596.44,423.18 L596.64,423.18 L596.85,423.18 L597.05,423.18 L597.25,423.18 L597.45,423.18 L597.66,423.18 L597.86,423.18 L598.06,423.18 L598.26,423.18 L598.47,423.18 L598.67,423.18 L598.87,423.18 L599.07,423.18 L599.27,423.18 L599.48,423.18 L599.68,423.18 L599.88,423.18 L600.08,423.18 L600.29,423.18 L600.49,423.18 L600.69,423.18 L600.89,423.18 L601.10,423.18 L601.30,423.18 L601.50,423.18 L601.70,423.18 L601.91,423.18 L602.11,423.18 L602.31,423.18 L602.51,423.18 L602.72,423.18 L602.92,423.18 L603.12,423.18 L603.32,423.18 L603.53,423.18 L603.73,423.18 L603.93,423.18 L604.13,423.18 L604.34,423.18 L604.54,423.18 L604.74,423.18 L604.94,423.18 L605.15,423.18 L605.35,423.18 L605.55,423.18 L605.75,423.18 L605.96,423.18 L606.16,423.18 L606.36,423.18 L606.56,423.18 L606.76,423.18 L606.97,423.18 L607.17,423.18 L607.37,423.18 L607.57,423.18 L607.78,423.18 L607.98,423.18 L608.18,423.18 L608.38,423.18 L608.59,423.18 L608.79,423.18 L608.99,423.18 L609.19,423.18 L609.40,423.18 L609.60,423.18 L609.80,423.18 L610.00,423.18 L610.21,423.18 L610.41,423.18 L610.61,423.18 L610.81,423.18 L611.02,423.18 L611.22,423.18 L611.42,423.18 L611.62,423.18 L611.83,423.18 L612.03,423.18 L612.23,423.18 L612.43,423.18 L612.64,423.18 L612.84,423.18 L613.04,423.18 L613.24,423.18 L613.45,423.18 L613.65,423.18 L613.85,423.18 L614.05,423.18 L614.25,423.18 L614.46,423.18 L614.66,423.18 L614.86,423.18 L615.06,423.18 L615.27,423.18 L615.47,423.18 L615.67,423.18 L615.87,423.18 L616.08,423.18 L616.28,423.18 L616.48,423.18 L616.68,423.18 L616.89,423.18 L617.09,423.18 L617.29,423.18 L617.49,423.18 L617.70,423.18 L617.90,423.18 L618.10,423.18 L618.30,423.18 L618.51,423.18 L618.71,423.18 L618.91,423.18 L619.11,423.18 L619.32,423.18 L619.52,423.18 L619.72,423.18 L619.92,423.18 L620.13,423.18 L620.33,423.18 L620.53,423.18 L620.73,423.18 L620.94,423.18 L621.14,423.18 L621.34,423.18 L621.54,423.18 L621.75,423.18 L621.95,423.18 L622.15,423.18 L622.35,423.18 L622.55,423.18 L622.76,423.18 L622.96,423.18 L623.16,423.18 L623.36,423.18 L623.57,423.18 L623.77,423.18 L623.97,423.18 L624.17,423.18 L624.38,423.18 L624.58,423.18 L624.78,423.18 L624.98,423.18 L625.19,423.18 L625.39,423.18 L625.59,423.18 L625.79,423.18 L626.00,423.18 L626.20,423.18 L626.40,423.18 L626.60,423.18 L626.81,423.18 L627.01,423.18 L627.21,423.18 L627.41,423.18 L627.62,423.18 L627.82,423.18 L628.02,423.18 L628.22,423.18 L628.43,423.18 L628.63,423.18 L628.83,423.18 L629.03,423.18 L629.24,423.18 L629.44,423.18 L629.64,423.18 L629.84,423.18 L630.04,423.18 L630.25,423.18 L630.45,423.18 L630.65,423.18 L630.85,423.18 L631.06,423.18 L631.26,423.18 L631.46,423.18 L631.66,423.18 L631.87,423.18 L632.07,423.18 L632.27,423.18 L632.47,423.18 L632.68,423.18 L632.88,423.18 L633.08,423.18 L633.28,423.18 L633.49,423.18 L633.69,423.18 L633.89,423.18 L634.09,423.18 L634.30,423.18 L634.50,423.18 L634.70,423.18 L634.90,423.18 L635.11,423.18 L635.31,423.18 L635.51,423.18 L635.71,423.18 L635.92,423.18 L636.12,423.18 L636.32,423.18 L636.52,423.18 L636.73,423.18 L636.93,423.18 L637.13,423.18 L637.33,423.18 L637.53,423.18 L637.74,423.18 L637.94,423.18 L638.14,423.18 L638.34,423.18 L638.55,423.18 L638.75,423.18 L638.95,423.18 L639.15,423.18 L639.36,423.18 L639.56,423.18 L639.76,423.18 L639.96,423.18 L640.17,423.18 L640.37,423.18 L640.57,423.18 L640.77,423.18 L640.98,423.18 L641.18,423.18 L641.38,423.18 L641.58,423.18 L641.79,423.18 L641.99,423.18 L642.19,423.18 L642.39,423.18 L642.60,423.18 L642.80,423.18 L643.00,423.18 L643.20,423.18 L643.41,423.18 L643.61,423.18 L643.81,423.18 L644.01,423.18 L644.22,423.18 L644.42,423.18 L644.62,423.18 L644.82,423.18 L645.02,423.18 L645.23,423.18 L645.43,423.18 L645.63,423.18 L645.83,423.18 L646.04,423.18 L646.24,423.18 L646.44,423.18 L646.64,423.18 L646.85,423.18 L647.05,423.18 L647.25,423.18 L647.45,423.18 L647.66,423.18 L647.86,423.18 L648.06,423.18 L648.26,423.18 L648.47,423.18 L648.67,423.18 L648.87,423.18 L649.07,423.18 L649.28,423.18 L649.48,423.18 L649.68,423.18 L649.88,423.18 L650.09,423.18 L650.29,423.18 L650.49,423.18 L650.69,423.18 L650.90,423.18 L651.10,423.18 L651.30,423.18 L651.50,423.18 L651.71,423.18 L651.91,423.18 L652.11,423.18 L652.31,423.18 L652.51,423.18 L652.72,423.18 L652.92,423.18 L653.12,423.18 L653.32,423.18 L653.53,423.18 L653.73,423.18 L653.93,423.18 L654.13,423.18 L654.34,423.18 L654.54,423.18 L654.74,423.18 L654.94,423.18 L655.15,423.18 L655.35,423.18 L655.55,423.18 L655.75,423.18 L655.96,423.18 L656.16,423.18 L656.36,423.18 L656.56,423.18 L656.77,423.18 L656.97,423.18 L657.17,423.18 L657.37,423.18 L657.58,423.18 L657.78,423.18 L657.98,423.18 L658.18,423.18 L658.39,423.18 L658.59,423.18 L658.79,423.18 L658.99,423.18 L659.20,423.18 L659.40,423.18 L659.60,423.18 L659.80,423.18 L660.00,423.18 L660.21,423.18 L660.41,423.18 L660.61,423.18 L660.81,423.18 L661.02,423.18 L661.22,423.18 L661.42,423.18 L661.62,423.18 L661.83,423.18 L662.03,423.18 L662.23,423.18 L662.43,423.18 L662.64,423.18 L662.84,423.18 L663.04,423.18 L663.24,423.18 L663.45,423.18 L663.65,423.18 L663.85,423.18 L664.05,423.18 L664.26,423.18 L664.46,423.18 L664.66,423.18 L664.86,423.18 L665.07,423.18 L665.27,423.18 L665.47,423.18 L665.67,423.18 L665.88,423.18 L666.08,423.18 L666.28,423.18 L666.48,423.18 L666.69,423.18 L666.89,423.18 L667.09,423.18 L667.29,423.18 L667.49,423.18 L667.70,423.18 L667.90,423.18 L668.10,423.18 L668.30,423.18 L668.51,423.18 L668.71,423.18 L668.91,423.18 L669.11,423.18 L669.32,423.18 L669.52,423.18 L669.72,423.18 L669.92,423.18 L670.13,423.18 L670.33,423.18 L670.53,423.18 L670.73,423.18 L670.94,423.18 L671.14,423.18 L671.34,423.18 L671.54,423.18 L671.75,423.18 L671.95,423.18 L672.15,423.18 L672.35,423.18 L672.56,423.18 L672.76,423.18 L672.96,423.18 L673.16,423.18 L673.37,423.18 L673.57,423.18 L673.77,423.18 L673.97,423.18 L674.18,423.18 L674.38,423.18 L674.58,423.18 L674.78,423.18 L674.98,423.18 L675.19,423.18 L675.39,423.18 L675.59,423.18 L675.79,423.18 L676.00,423.18 L676.20,423.18 L676.40,423.18 L676.60,423.18 L676.81,423.18 L677.01,423.18 L677.21,423.18 L677.41,423.18 L677.62,423.18 L677.82,423.18 L678.02,423.18 L678.22,423.18 L678.43,423.18 L678.63,423.18 L678.83,423.18 L679.03,423.18 L679.24,423.18 L679.44,423.18 L679.64,423.18 L679.84,423.18 L680.05,423.18 L680.25,423.18 L680.45,423.18 L680.65,423.18 L680.86,423.18 L681.06,423.18 L681.26,423.18 L681.46,423.18 L681.67,423.18 L681.87,423.18 L682.07,423.18 L682.27,423.18 L682.48,423.18 L682.68,423.18 L682.88,423.18 L683.08,423.18 L683.28,423.18 L683.49,423.18 L683.69,423.18 L683.89,423.18 L684.09,423.18 L684.30,423.18 L684.50,423.18 L684.70,423.18 L684.90,423.18 L685.11,423.18 L685.31,423.18 L685.51,423.18 L685.71,423.18 L685.92,423.18 L686.12,423.18 L686.32,423.18 L686.52,423.18 L686.73,423.18 L686.93,423.18 L687.13,423.18 L687.33,423.18 L687.54,423.18 L687.74,423.18 L687.94,423.18 L688.14,423.18 L688.35,423.18 L688.55,423.18 L688.75,423.18 L688.95,423.18 L689.16,423.18 L689.36,423.18 L689.56,423.18 L689.76,423.18 L689.97,423.18 L690.17,423.18 L690.37,423.18 L690.57,423.18 L690.77,423.18 L690.98,423.18 L691.18,423.18 L691.38,423.18 L691.58,423.18 L691.79,423.18 L691.99,423.18 L692.19,423.18 L692.39,423.18 L692.60,423.18 L692.80,423.18 L693.00,423.18 L693.20,423.18 L693.41,423.18 L693.61,423.18 L693.81,423.18 L694.01,423.18 L694.22,423.18 L694.42,423.18 L694.62,423.18 L694.82,423.18 L695.03,423.18 L695.23,423.18 L695.43,423.18 L695.63,423.18 L695.84,423.18 L696.04,423.18 L696.24,423.18 L696.44,423.18 L696.65,423.18 L696.85,423.18 L697.05,423.18 L697.25,423.18 L697.46,423.18 L697.66,423.18 L697.86,423.18 L698.06,423.18 L698.26,423.18 L698.47,423.18 L698.67,423.18 L698.87,423.18 L699.07,423.18 L699.28,423.18 L699.48,423.18 L699.68,423.18 L699.88,423.18 L700.09,423.18 L700.29,423.18 L700.49,423.18 L700.69,423.18 L700.90,423.18 L701.10,423.18 L701.30,423.18 L701.50,423.18 L701.71,423.18 L701.91,423.18 L702.11,423.18 L702.31,423.18 L702.52,423.18 L702.72,423.18 L702.92,423.18 L703.12,423.18 L703.33,423.18 L703.53,423.18 L703.73,423.18 L703.93,423.18 L704.14,423.18 L704.34,423.18 L704.54,423.18 L704.74,423.18 L704.95,423.18 L705.15,423.18 L705.35,423.18 L705.55,423.18 L705.75,423.18 L705.96,423.18 L706.16,423.18 L706.36,423.18 L706.56,423.18 L706.77,423.18 L706.97,423.18 L707.17,423.18 L707.37,423.18 L707.58,423.18 L707.78,423.18 L707.98,423.18 L708.18,423.18 L708.39,423.18 L708.59,423.18 L708.79,423.18 L708.99,423.18 L709.20,423.18 L709.40,423.18 L709.60,423.18 L709.80,423.18 L710.01,423.18 L710.21,423.18 L710.41,423.18 L710.61,423.18 L710.82,423.18 L711.02,423.18 L711.22,423.18 L711.42,423.18 L711.63,423.18 L711.83,423.18 L712.03,423.18 L712.23,423.18 L712.44,423.18 L712.64,423.18 L712.84,423.18 L713.04,423.18 L713.24,423.18 L713.45,423.18 L713.65,423.18 L713.85,423.18 L714.05,423.18 L714.26,423.18 L714.46,423.18 L714.66,423.18 L714.86,423.18 L715.07,423.18 L715.27,423.18 L715.47,423.18 L715.67,423.18 L715.88,423.18 L716.08,423.18 L716.28,423.18 L716.48,423.18 L716.69,423.18 L716.89,423.18 L717.09,423.18 L717.29,423.18 L717.50,423.18 L717.70,423.18 L717.90,423.18 L718.10,423.18 L718.31,423.18 L718.51,423.18 L718.71,423.18 L718.91,423.18 L719.12,423.18 L719.32,423.18 L719.52,423.18 L719.72,423.18 L719.93,423.18 L720.13,423.18 L720.33,423.18 L720.53,423.18 L720.73,423.18 L720.94,423.18 L721.14,423.18 L721.34,423.18 L721.54,423.18 L721.75,423.18 L721.95,423.18 L722.15,423.18 L722.35,423.18 L722.56,423.18 L722.76,423.18 L722.96,423.18 L723.16,423.18 L723.37,423.18 L723.57,423.18 L723.77,423.18 L723.97,423.18 L724.18,423.18 L724.38,423.18 L724.58,423.18 L724.78,423.18 L724.99,423.18 L725.19,423.18 L725.39,423.18 L725.59,423.18 L725.80,423.18 L726.00,423.18 L726.20,423.18 L726.40,423.18 L726.61,423.18 L726.81,423.18 L727.01,423.18 L727.21,423.18 L727.42,423.18 L727.62,423.18 L727.82,423.18 L728.02,423.18 L728.22,423.18 L728.43,423.18 L728.63,423.18 L728.83,423.18 L729.03,423.18 L729.24,423.18 L729.44,423.18 L729.64,423.18 L729.84,423.18 L730.05,423.18 L730.25,423.18 L730.45,423.18 L730.65,423.18 L730.86,423.18 L731.06,423.18 L731.26,423.18 L731.46,423.18 L731.67,423.18 L731.87,423.18 L732.07,423.18 L732.27,423.18 L732.48,423.18 L732.68,423.18 L732.88,423.18 L733.08,423.18 L733.29,423.18 L733.49,423.18 L733.69,423.18 L733.89,423.18 L734.10,423.18 L734.30,423.18 L734.50,423.18 L734.70,423.18 L734.91,423.18 L735.11,423.18 L735.31,423.18 L735.51,423.18 L735.71,423.18 L735.92,423.18 L736.12,423.18 L736.32,423.18 L736.52,423.18 L736.73,423.18 L736.93,423.18 L737.13,423.18 L737.33,423.18 L737.54,423.18 L737.74,423.18 L737.94,423.18 L738.14,423.18 L738.35,423.18 L738.55,423.18 L738.75,423.18 L738.95,423.18 L739.16,423.18 L739.36,423.18 L739.56,423.18 L739.76,423.18 L739.97,423.18 L740.17,423.18 L740.37,423.18 L740.57,423.18 L740.78,423.18 L740.98,423.18 L741.18,423.18 L741.38,423.18 L741.59,423.18 L741.79,423.18 L741.99,423.18 L742.19,423.18 L742.40,423.18 L742.60,423.18 L742.80,423.18 L743.00,423.18 L743.21,423.18 L743.41,423.18 L743.61,423.18 L743.81,423.18 L744.01,423.18 L744.22,423.18 L744.42,423.18 L744.62,423.18 L744.82,423.18 L745.03,423.18 L745.23,423.18 L745.43,423.18 L745.63,423.18 L745.84,423.18 L746.04,423.18 L746.24,423.18 L746.44,423.18 L746.65,423.18 L746.85,423.18 L747.05,423.18 L747.25,423.18 L747.46,423.18 L747.66,423.18 L747.86,423.18 L748.06,423.18 L748.27,423.18 L748.47,423.18 L748.67,423.18 L748.87,423.18 L749.08,423.18 L749.28,423.18 L749.48,423.18 L749.68,423.18 L749.89,423.18 L750.09,423.18 L750.29,423.18 L750.49,423.18 L750.70,423.18 L750.90,423.18 L751.10,423.18 L751.30,423.18 L751.50,423.18 L751.71,423.18 L751.91,423.18 L752.11,423.18 L752.31,423.18 L752.52,423.18 L752.72,423.18 L752.92,423.18 L753.12,423.18 L753.33,423.18 L753.53,423.18 L753.73,423.18 L753.93,423.18 L754.14,423.18 L754.34,423.18 L754.54,423.18 L754.74,423.18 L754.95,423.18 L755.15,423.18 L755.35,423.18 L755.55,423.18 L755.76,423.18 L755.96,423.18 L756.16,423.18 L756.36,423.18 L756.57,423.18 L756.77,423.18 L756.97,423.18 L757.17,423.18 L757.38,423.18 L757.58,423.18 L757.78,423.18 L757.98,423.18 L758.19,423.18 L758.39,423.18 L758.59,423.18 L758.79,423.18 L758.99,423.18 L759.20,423.18 L759.40,423.18 L759.60,423.18 L759.80,423.18 L760.01,423.18 L760.21,423.18 L760.41,423.18 L760.61,423.18 L760.82,423.18 L761.02,423.18 L761.22,423.18 L761.42,423.18 L761.63,423.18 L761.83,423.18 L762.03,423.18 L762.23,423.18 L762.44,423.18 L762.64,423.18 L762.84,423.18 L763.04,423.18 L763.25,423.18 L763.45,423.18 L763.65,423.18 L763.85,423.18 L764.06,423.18 L764.26,423.18 L764.46,423.18 L764.66,423.18 L764.87,423.18 L765.07,423.18 L765.27,423.18 L765.47,423.18 L765.68,423.18 L765.88,423.18 L766.08,423.18 L766.28,423.18 L766.48,423.18 L766.69,423.18 L766.89,423.18 L767.09,423.18 L767.29,423.18 L767.50,423.18 L767.70,423.18 L767.90,423.18 L768.10,423.18 L768.31,423.18 L768.51,423.18 L768.71,423.18 L768.91,423.18 L769.12,423.18 L769.32,423.18 L769.52,423.18 L769.72,423.18 L769.93,423.18 L770.13,423.18 L770.33,423.18 L770.53,423.18 L770.74,423.18 L770.94,423.18 L771.14,423.18 L771.34,423.18 L771.55,423.18 L771.75,423.18 L771.95,423.18 L772.15,423.18 L772.36,423.18 L772.56,423.18 L772.76,423.18 L772.96,423.18 L773.17,423.18 L773.37,423.18 L773.57,423.18 L773.77,423.18 L773.97,423.18 L774.18,423.18 L774.38,423.18 L774.58,423.18 L774.78,423.18 L774.99,423.18 L775.19,423.18 L775.39,423.18 L775.59,423.18 L775.80,423.18 L776.00,423.18 L776.20,423.18 L776.40,423.18 L776.61,423.18 L776.81,423.18 L777.01,423.18 L777.21,423.18 L777.42,423.18 L777.62,423.18 L777.82,423.18 L778.02,423.18 L778.23,423.18 L778.43,423.18 L778.63,423.18 L778.83,423.18 L779.04,423.18 L779.24,423.18 L779.44,423.18 L779.64,423.18 L779.85,423.18 L780.05,423.18 L780.25,423.18 L780.45,423.18 L780.66,423.18 L780.86,423.18 L781.06,423.18 L781.26,423.18 L781.46,423.18 L781.67,423.18 L781.87,423.18 L782.07,423.18 L782.27,423.18 L782.48,423.18 L782.68,423.18 L782.88,423.18 L783.08,423.18 L783.29,423.18 L783.49,423.18 L783.69,423.18 L783.89,423.18 L784.10,423.18 L784.30,423.18 L784.50,423.18 L784.70,423.18 L784.91,423.18 L785.11,423.18 L785.31,423.18 L785.51,423.18 L785.72,423.18 L785.92,423.18 L786.12,423.18 L786.32,423.18 L786.53,423.18 L786.73,423.18 L786.93,423.18 L787.13,423.18 L787.34,423.18 L787.54,423.18 L787.74,423.18 L787.94,423.18 L788.15,423.18 L788.35,423.18 L788.55,423.18 L788.75,423.18 L788.95,423.18 L789.16,423.18 L789.36,423.18 L789.56,423.18 L789.76,423.18 L789.97,423.18 L790.17,423.18 L790.37,423.18 L790.57,423.18 L790.78,423.18 L790.98,423.18 L791.18,423.18 L791.38,423.18 L791.59,423.18 L791.79,423.18 L791.99,423.18 L792.19,423.18 L792.40,423.18 L792.60,423.18 L792.80,423.18 L793.00,423.18 L793.21,423.18 L793.41,423.18 L793.61,423.18 L793.81,423.18 L794.02,423.18 L794.22,423.18 L794.42,423.18 L794.62,423.18 L794.83,423.18 L795.03,423.18 L795.23,423.18 L795.43,423.18 L795.64,423.18 L795.84,423.18 L796.04,423.18 L796.24,423.18 L796.44,423.18 L796.65,423.18 L796.85,423.18 L797.05,423.18 L797.25,423.18 L797.46,423.18 L797.66,423.18 L797.86,423.18 L798.06,423.18 L798.27,423.18 L798.47,423.18 L798.67,423.18 L798.87,423.18 L799.08,423.18 L799.28,423.18 L799.48,423.18 L799.68,423.18 L799.89,423.18 L800.09,423.18 L800.29,423.18 L800.49,423.18 L800.70,423.18 L800.90,423.18 L801.10,423.18 L801.30,423.18 L801.51,423.18 L801.71,423.18 L801.91,423.18 L802.11,423.18 L802.32,423.18 L802.52,423.18 L802.72,423.18 L802.92,423.18 L803.13,423.18 L803.33,423.18 L803.53,423.18 L803.73,423.18 L803.93,423.18 L804.14,423.18 L804.34,423.18 L804.54,423.18 L804.74,423.18 L804.95,423.18 L805.15,423.18 L805.35,423.18 L805.55,423.18 L805.76,423.18 L805.96,423.18 L806.16,423.18 L806.36,423.18 L806.57,423.18 L806.77,423.18 L806.97,423.18 L807.17,423.18 L807.38,423.18 L807.58,423.18 L807.78,423.18 L807.98,423.18 L808.19,423.18 L808.39,423.18 L808.59,423.18 L808.79,423.18 L809.00,423.18 L809.20,423.18 L809.40,423.18 L809.60,423.18 L809.81,423.18 L810.01,423.18 L810.21,423.18 L810.41,423.18 L810.62,423.18 L810.82,423.18 L811.02,423.18 L811.22,423.18 L811.43,423.18 L811.63,423.18 L811.83,423.18 L812.03,423.18 L812.23,423.18 L812.44,423.18 L812.64,423.18 L812.84,423.18 L813.04,423.18 L813.25,423.18 L813.45,423.18 L813.65,423.18 L813.85,423.18 L814.06,423.18 L814.26,423.18 L814.46,423.18 L814.66,423.18 L814.87,423.18 L815.07,423.18 L815.27,423.18 L815.47,423.18 L815.68,423.18 L815.88,423.18 L816.08,423.18 L816.28,423.18 L816.49,423.18 L816.69,423.18 L816.89,423.18 L817.09,423.18 L817.30,423.18 L817.50,423.18 L817.70,423.18 L817.90,423.18 L818.11,423.18 L818.31,423.18 L818.51,423.18 L818.71,423.18 L818.92,423.18 L819.12,423.18 L819.32,423.18 L819.52,423.18 L819.72,423.18 L819.93,423.18 L820.13,423.18 L820.33,423.18 L820.53,423.18 L820.74,423.18 L820.94,423.18 L821.14,423.18 L821.34,423.18 L821.55,423.18 L821.75,423.18 L821.95,423.18 L822.15,423.18 L822.36,423.18 L822.56,423.18 L822.76,423.18 L822.96,423.18 L823.17,423.18 L823.37,423.18 L823.57,423.18 L823.77,423.18 L823.98,423.18 L824.18,423.18 L824.38,423.18 L824.58,423.18 L824.79,423.18 L824.99,423.18 L825.19,423.18 L825.39,423.18 L825.60,423.18 L825.80,423.18 L826.00,423.18 L826.20,423.18 L826.41,423.18 L826.61,423.18 L826.81,423.18 L827.01,423.18 L827.21,423.18 L827.42,423.18 L827.62,423.18 L827.82,423.18 L828.02,423.18 L828.23,423.18 L828.43,423.18 L828.63,423.18 L828.83,423.18 L829.04,423.18 L829.24,423.18 L829.44,423.18 L829.64,423.18 L829.85,423.18 L830.05,423.18 L830.25,423.18 L830.45,423.18 L830.66,423.18 L830.86,423.18 L831.06,423.18 L831.26,423.18 L831.47,423.18 L831.67,423.18 L831.87,423.18 L832.07,423.18 L832.28,423.18 L832.48,423.18 L832.68,423.18 L832.88,423.18 L833.09,423.18 L833.29,423.18 L833.49,423.18 L833.69,423.18 L833.90,423.18 L834.10,423.18 L834.30,423.18 L834.3,422.80 Z" fill="#c2f3f3"/>
<line x1="287.73" y1="372.32" x2="287.73" y2="422.80" stroke="#9fd2d2" stroke-width="0.6" opacity="0.55"/>
<line x1="290.23" y1="366.28" x2="290.23" y2="422.80" stroke="#9fd2d2" stroke-width="0.6" opacity="0.63"/>
<line x1="295.23" y1="347.71" x2="295.23" y2="422.80" stroke="#9fd2d2" stroke-width="0.6" opacity="0.43"/>
<line x1="297.23" y1="335.17" x2="297.23" y2="422.80" stroke="#9fd2d2" stroke-width="0.6" opacity="0.58"/>
<line x1="297.73" y1="330.72" x2="297.73" y2="422.80" stroke="#9fd2d2" stroke-width="0.6" opacity="0.42"/>
<line x1="298.73" y1="318.34" x2="298.73" y2="422.80" stroke="#9fd2d2" stroke-width="0.6" opacity="0.54"/>
<line x1="300.23" y1="300.58" x2="300.23" y2="422.80" stroke="#9fd2d2" stroke-width="0.6" opacity="0.69"/>
<line x1="300.73" y1="313.16" x2="300.73" y2="422.80" stroke="#9fd2d2" stroke-width="0.6" opacity="0.51"/>
<line x1="301.23" y1="321.48" x2="301.23" y2="422.80" stroke="#9fd2d2" stroke-width="0.6" opacity="0.31"/>
<line x1="301.73" y1="327.70" x2="301.73" y2="422.80" stroke="#9fd2d2" stroke-width="0.6" opacity="0.66"/>
<line x1="302.23" y1="332.68" x2="302.23" y2="422.80" stroke="#9fd2d2" stroke-width="0.6" opacity="0.50"/>
<line x1="303.23" y1="340.37" x2="303.23" y2="422.80" stroke="#9fd2d2" stroke-width="0.6" opacity="0.51"/>
<line x1="303.73" y1="343.47" x2="303.73" y2="422.80" stroke="#9fd2d2" stroke-width="0.6" opacity="0.44"/>
<line x1="304.23" y1="346.23" x2="304.23" y2="422.80" stroke="#9fd2d2" stroke-width="0.6" opacity="0.63"/>
<line x1="307.23" y1="358.54" x2="307.23" y2="422.80" stroke="#9fd2d2" stroke-width="0.6" opacity="0.35"/>
<line x1="309.73" y1="366.91" x2="309.73" y2="422.80" stroke="#9fd2d2" stroke-width="0.6" opacity="0.53"/>
<line x1="311.23" y1="371.15" x2="311.23" y2="422.80" stroke="#9fd2d2" stroke-width="0.6" opacity="0.69"/>
<line x1="312.23" y1="373.74" x2="312.23" y2="422.80" stroke="#9fd2d2" stroke-width="0.6" opacity="0.69"/>
<line x1="313.23" y1="374.50" x2="313.23" y2="422.80" stroke="#9fd2d2" stroke-width="0.6" opacity="0.57"/>
<line x1="313.73" y1="374.83" x2="313.73" y2="422.80" stroke="#9fd2d2" stroke-width="0.6" opacity="0.39"/>
<line x1="314.23" y1="375.16" x2="314.23" y2="422.80" stroke="#9fd2d2" stroke-width="0.6" opacity="0.54"/>
<line x1="314.73" y1="375.49" x2="314.73" y2="422.80" stroke="#9fd2d2" stroke-width="0.6" opacity="0.57"/>
<line x1="317.23" y1="377.12" x2="317.23" y2="422.80" stroke="#9fd2d2" stroke-width="0.6" opacity="0.63"/>
<line x1="317.73" y1="377.45" x2="317.73" y2="422.80" stroke="#9fd2d2" stroke-width="0.6" opacity="0.53"/>
<line x1="318.23" y1="377.78" x2="318.23" y2="422.80" stroke="#9fd2d2" stroke-width="0.6" opacity="0.34"/>
<line x1="319.23" y1="378.43" x2="319.23" y2="422.80" stroke="#9fd2d2" stroke-width="0.6" opacity="0.59"/>
<line x1="320.23" y1="379.60" x2="320.23" y2="422.80" stroke="#9fd2d2" stroke-width="0.6" opacity="0.62"/>
<line x1="320.73" y1="380.21" x2="320.73" y2="422.80" stroke="#9fd2d2" stroke-width="0.6" opacity="0.65"/>
<line x1="322.73" y1="382.65" x2="322.73" y2="422.80" stroke="#9fd2d2" stroke-width="0.6" opacity="0.58"/>
<line x1="323.23" y1="383.26" x2="323.23" y2="422.80" stroke="#9fd2d2" stroke-width="0.6" opacity="0.51"/>
<line x1="324.73" y1="385.08" x2="324.73" y2="422.80" stroke="#9fd2d2" stroke-width="0.6" opacity="0.59"/>
<line x1="325.73" y1="386.24" x2="325.73" y2="422.80" stroke="#9fd2d2" stroke-width="0.6" opacity="0.61"/>
<line x1="327.73" y1="387.81" x2="327.73" y2="422.80" stroke="#9fd2d2" stroke-width="0.6" opacity="0.41"/>
<line x1="328.73" y1="388.60" x2="328.73" y2="422.80" stroke="#9fd2d2" stroke-width="0.6" opacity="0.61"/>
<line x1="329.73" y1="389.39" x2="329.73" y2="422.80" stroke="#9fd2d2" stroke-width="0.6" opacity="0.30"/>
<line x1="332.23" y1="391.37" x2="332.23" y2="422.80" stroke="#9fd2d2" stroke-width="0.6" opacity="0.37"/>
<line x1="332.73" y1="391.76" x2="332.73" y2="422.80" stroke="#9fd2d2" stroke-width="0.6" opacity="0.54"/>
<line x1="334.23" y1="392.95" x2="334.23" y2="422.80" stroke="#9fd2d2" stroke-width="0.6" opacity="0.39"/>
<line x1="334.73" y1="393.37" x2="334.73" y2="422.80" stroke="#9fd2d2" stroke-width="0.6" opacity="0.36"/>
<line x1="335.23" y1="393.80" x2="335.23" y2="422.80" stroke="#9fd2d2" stroke-width="0.6" opacity="0.50"/>
<line x1="337.23" y1="395.51" x2="337.23" y2="422.80" stroke="#9fd2d2" stroke-width="0.6" opacity="0.63"/>
<line x1="338.23" y1="396.36" x2="338.23" y2="422.80" stroke="#9fd2d2" stroke-width="0.6" opacity="0.31"/>
<line x1="339.73" y1="397.65" x2="339.73" y2="422.80" stroke="#9fd2d2" stroke-width="0.6" opacity="0.58"/>
<line x1="340.23" y1="398.07" x2="340.23" y2="422.80" stroke="#9fd2d2" stroke-width="0.6" opacity="0.57"/>
<line x1="341.73" y1="399.36" x2="341.73" y2="422.80" stroke="#9fd2d2" stroke-width="0.6" opacity="0.36"/>
<line x1="344.23" y1="401.33" x2="344.23" y2="422.80" stroke="#9fd2d2" stroke-width="0.6" opacity="0.45"/>
<line x1="345.23" y1="402.04" x2="345.23" y2="422.80" stroke="#9fd2d2" stroke-width="0.6" opacity="0.42"/>
<line x1="345.73" y1="402.40" x2="345.73" y2="422.80" stroke="#9fd2d2" stroke-width="0.6" opacity="0.65"/>
<line x1="346.73" y1="403.12" x2="346.73" y2="422.80" stroke="#9fd2d2" stroke-width="0.6" opacity="0.44"/>
<line x1="347.23" y1="403.48" x2="347.23" y2="422.80" stroke="#9fd2d2" stroke-width="0.6" opacity="0.47"/>
<line x1="348.73" y1="404.56" x2="348.73" y2="422.80" stroke="#9fd2d2" stroke-width="0.6" opacity="0.51"/>
<line x1="349.23" y1="404.92" x2="349.23" y2="422.80" stroke="#9fd2d2" stroke-width="0.6" opacity="0.48"/>
<line x1="350.23" y1="405.64" x2="350.23" y2="422.80" stroke="#9fd2d2" stroke-width="0.6" opacity="0.63"/>
<line x1="350.73" y1="406.00" x2="350.73" y2="422.80" stroke="#9fd2d2" stroke-width="0.6" opacity="0.46"/>
<line x1="351.73" y1="406.67" x2="351.73" y2="422.80" stroke="#9fd2d2" stroke-width="0.6" opacity="0.52"/>
<line x1="354.23" y1="407.96" x2="354.23" y2="422.80" stroke="#9fd2d2" stroke-width="0.6" opacity="0.38"/>
<line x1="355.23" y1="408.48" x2="355.23" y2="422.80" stroke="#9fd2d2" stroke-width="0.6" opacity="0.52"/>
<line x1="355.73" y1="408.73" x2="355.73" y2="422.80" stroke="#9fd2d2" stroke-width="0.6" opacity="0.58"/>
<line x1="356.73" y1="409.25" x2="356.73" y2="422.80" stroke="#9fd2d2" stroke-width="0.6" opacity="0.35"/>
<line x1="359.73" y1="410.80" x2="359.73" y2="422.80" stroke="#9fd2d2" stroke-width="0.6" opacity="0.59"/>
<line x1="360.73" y1="411.24" x2="360.73" y2="422.80" stroke="#9fd2d2" stroke-width="0.6" opacity="0.30"/>
<line x1="361.23" y1="411.44" x2="361.23" y2="422.80" stroke="#9fd2d2" stroke-width="0.6" opacity="0.33"/>
<line x1="363.23" y1="412.25" x2="363.23" y2="422.80" stroke="#9fd2d2" stroke-width="0.6" opacity="0.56"/>
<line x1="363.73" y1="412.46" x2="363.73" y2="422.80" stroke="#9fd2d2" stroke-width="0.6" opacity="0.35"/>
<line x1="366.23" y1="413.47" x2="366.23" y2="422.80" stroke="#9fd2d2" stroke-width="0.6" opacity="0.42"/>
<line x1="366.73" y1="413.68" x2="366.73" y2="422.80" stroke="#9fd2d2" stroke-width="0.6" opacity="0.50"/>
<line x1="367.23" y1="413.88" x2="367.23" y2="422.80" stroke="#9fd2d2" stroke-width="0.6" opacity="0.65"/>
<line x1="371.23" y1="415.40" x2="371.23" y2="422.80" stroke="#9fd2d2" stroke-width="0.6" opacity="0.44"/>
<line x1="371.73" y1="415.55" x2="371.73" y2="422.80" stroke="#9fd2d2" stroke-width="0.6" opacity="0.61"/>
<line x1="373.23" y1="418.25" x2="373.23" y2="422.80" stroke="#9fd2d2" stroke-width="0.6" opacity="0.47"/>
<line x1="376.23" y1="419.94" x2="376.23" y2="422.80" stroke="#9fd2d2" stroke-width="0.6" opacity="0.55"/>
<line x1="376.73" y1="420.04" x2="376.73" y2="422.80" stroke="#9fd2d2" stroke-width="0.6" opacity="0.57"/>
<line x1="378.23" y1="420.36" x2="378.23" y2="422.80" stroke="#9fd2d2" stroke-width="0.6" opacity="0.53"/>
<line x1="378.73" y1="420.46" x2="378.73" y2="422.80" stroke="#9fd2d2" stroke-width="0.6" opacity="0.48"/>
<line x1="379.23" y1="420.57" x2="379.23" y2="422.80" stroke="#9fd2d2" stroke-width="0.6" opacity="0.47"/>
<line x1="382.23" y1="421.28" x2="382.23" y2="422.80" stroke="#9fd2d2" stroke-width="0.6" opacity="0.62"/>
<line x1="383.73" y1="421.68" x2="383.73" y2="422.80" stroke="#9fd2d2" stroke-width="0.6" opacity="0.48"/>
<line x1="384.23" y1="421.81" x2="384.23" y2="422.80" stroke="#9fd2d2" stroke-width="0.6" opacity="0.35"/>
<line x1="384.73" y1="421.94" x2="384.73" y2="422.80" stroke="#9fd2d2" stroke-width="0.6" opacity="0.47"/>
<line x1="385.23" y1="422.07" x2="385.23" y2="422.80" stroke="#9fd2d2" stroke-width="0.6" opacity="0.63"/>
<line x1="387.23" y1="422.60" x2="387.23" y2="422.80" stroke="#9fd2d2" stroke-width="0.6" opacity="0.41"/>
<line x1="389.73" y1="423.30" x2="389.73" y2="422.80" stroke="#9fd2d2" stroke-width="0.6" opacity="0.38"/>
<line x1="392.23" y1="424.24" x2="392.23" y2="422.80" stroke="#9fd2d2" stroke-width="0.6" opacity="0.32"/>
<line x1="394.23" y1="424.68" x2="394.23" y2="422.80" stroke="#9fd2d2" stroke-width="0.6" opacity="0.38"/>
<line x1="394.73" y1="424.68" x2="394.73" y2="422.80" stroke="#9fd2d2" stroke-width="0.6" opacity="0.31"/>
<line x1="227.20" y1="373.70" x2="227.20" y2="397.72" stroke="#5a8888" stroke-width="0.7" opacity="0.30"/>
<line x1="227.82" y1="375.51" x2="227.82" y2="386.41" stroke="#5a8888" stroke-width="0.7" opacity="0.47"/>
<line x1="229.17" y1="374.31" x2="229.17" y2="385.92" stroke="#5a8888" stroke-width="0.7" opacity="0.46"/>
<line x1="230.01" y1="374.28" x2="230.01" y2="385.43" stroke="#5a8888" stroke-width="0.7" opacity="0.55"/>
<line x1="231.17" y1="373.36" x2="231.17" y2="386.35" stroke="#5a8888" stroke-width="0.7" opacity="0.58"/>
<line x1="232.24" y1="378.30" x2="232.24" y2="397.61" stroke="#5a8888" stroke-width="0.7" opacity="0.36"/>
<line x1="232.94" y1="380.01" x2="232.94" y2="398.56" stroke="#5a8888" stroke-width="0.7" opacity="0.33"/>
<line x1="233.63" y1="374.44" x2="233.63" y2="383.15" stroke="#5a8888" stroke-width="0.7" opacity="0.51"/>
<line x1="234.46" y1="377.66" x2="234.46" y2="402.97" stroke="#5a8888" stroke-width="0.7" opacity="0.54"/>
<line x1="235.74" y1="373.05" x2="235.74" y2="391.45" stroke="#5a8888" stroke-width="0.7" opacity="0.58"/>
<line x1="236.86" y1="376.18" x2="236.86" y2="388.70" stroke="#5a8888" stroke-width="0.7" opacity="0.38"/>
<line x1="237.92" y1="378.82" x2="237.92" y2="398.03" stroke="#5a8888" stroke-width="0.7" opacity="0.55"/>
<line x1="239.11" y1="379.08" x2="239.11" y2="385.39" stroke="#5a8888" stroke-width="0.7" opacity="0.38"/>
<line x1="240.07" y1="374.39" x2="240.07" y2="391.61" stroke="#5a8888" stroke-width="0.7" opacity="0.43"/>
<line x1="241.17" y1="376.70" x2="241.17" y2="396.67" stroke="#5a8888" stroke-width="0.7" opacity="0.45"/>
<line x1="242.23" y1="379.18" x2="242.23" y2="387.50" stroke="#5a8888" stroke-width="0.7" opacity="0.40"/>
<line x1="243.55" y1="373.83" x2="243.55" y2="385.72" stroke="#5a8888" stroke-width="0.7" opacity="0.45"/>
<line x1="244.58" y1="377.66" x2="244.58" y2="387.12" stroke="#5a8888" stroke-width="0.7" opacity="0.53"/>
<line x1="245.25" y1="379.42" x2="245.25" y2="391.00" stroke="#5a8888" stroke-width="0.7" opacity="0.32"/>
<line x1="246.02" y1="380.60" x2="246.02" y2="397.32" stroke="#5a8888" stroke-width="0.7" opacity="0.31"/>
<line x1="247.15" y1="376.69" x2="247.15" y2="395.53" stroke="#5a8888" stroke-width="0.7" opacity="0.42"/>
<line x1="248.25" y1="379.08" x2="248.25" y2="394.55" stroke="#5a8888" stroke-width="0.7" opacity="0.49"/>
<line x1="249.03" y1="375.78" x2="249.03" y2="393.81" stroke="#5a8888" stroke-width="0.7" opacity="0.59"/>
<line x1="250.14" y1="377.26" x2="250.14" y2="399.12" stroke="#5a8888" stroke-width="0.7" opacity="0.35"/>
<line x1="251.05" y1="378.20" x2="251.05" y2="399.35" stroke="#5a8888" stroke-width="0.7" opacity="0.50"/>
<line x1="251.80" y1="374.26" x2="251.80" y2="400.61" stroke="#5a8888" stroke-width="0.7" opacity="0.42"/>
<line x1="253.22" y1="376.89" x2="253.22" y2="390.69" stroke="#5a8888" stroke-width="0.7" opacity="0.28"/>
<line x1="253.84" y1="377.15" x2="253.84" y2="397.97" stroke="#5a8888" stroke-width="0.7" opacity="0.47"/>
<line x1="255.08" y1="378.41" x2="255.08" y2="399.72" stroke="#5a8888" stroke-width="0.7" opacity="0.46"/>
<line x1="256.20" y1="377.43" x2="256.20" y2="397.17" stroke="#5a8888" stroke-width="0.7" opacity="0.45"/>
<line x1="256.88" y1="376.36" x2="256.88" y2="396.86" stroke="#5a8888" stroke-width="0.7" opacity="0.40"/>
<line x1="258.27" y1="377.62" x2="258.27" y2="386.84" stroke="#5a8888" stroke-width="0.7" opacity="0.43"/>
<line x1="259.17" y1="379.89" x2="259.17" y2="404.28" stroke="#5a8888" stroke-width="0.7" opacity="0.31"/>
<line x1="260.35" y1="379.67" x2="260.35" y2="396.25" stroke="#5a8888" stroke-width="0.7" opacity="0.60"/>
<line x1="261.03" y1="374.30" x2="261.03" y2="380.16" stroke="#5a8888" stroke-width="0.7" opacity="0.59"/>
<line x1="262.38" y1="377.23" x2="262.38" y2="396.34" stroke="#5a8888" stroke-width="0.7" opacity="0.41"/>
<line x1="263.12" y1="377.82" x2="263.12" y2="392.81" stroke="#5a8888" stroke-width="0.7" opacity="0.55"/>
<line x1="263.82" y1="376.31" x2="263.82" y2="391.93" stroke="#5a8888" stroke-width="0.7" opacity="0.44"/>
<line x1="265.07" y1="375.65" x2="265.07" y2="388.17" stroke="#5a8888" stroke-width="0.7" opacity="0.58"/>
<line x1="266.16" y1="377.99" x2="266.16" y2="395.21" stroke="#5a8888" stroke-width="0.7" opacity="0.55"/>
<line x1="266.80" y1="375.01" x2="266.80" y2="390.97" stroke="#5a8888" stroke-width="0.7" opacity="0.35"/>
<line x1="267.54" y1="378.06" x2="267.54" y2="392.98" stroke="#5a8888" stroke-width="0.7" opacity="0.40"/>
<line x1="268.63" y1="377.46" x2="268.63" y2="396.21" stroke="#5a8888" stroke-width="0.7" opacity="0.42"/>
<line x1="269.88" y1="373.03" x2="269.88" y2="383.73" stroke="#5a8888" stroke-width="0.7" opacity="0.59"/>
<line x1="270.93" y1="376.31" x2="270.93" y2="387.39" stroke="#5a8888" stroke-width="0.7" opacity="0.50"/>
<line x1="271.90" y1="373.38" x2="271.90" y2="384.48" stroke="#5a8888" stroke-width="0.7" opacity="0.55"/>
<line x1="272.72" y1="371.72" x2="272.72" y2="386.66" stroke="#5a8888" stroke-width="0.7" opacity="0.39"/>
<line x1="273.79" y1="374.07" x2="273.79" y2="391.30" stroke="#5a8888" stroke-width="0.7" opacity="0.45"/>
<line x1="275.17" y1="372.00" x2="275.17" y2="379.67" stroke="#5a8888" stroke-width="0.7" opacity="0.60"/>
<line x1="275.79" y1="377.10" x2="275.79" y2="400.01" stroke="#5a8888" stroke-width="0.7" opacity="0.35"/>
<line x1="276.42" y1="375.98" x2="276.42" y2="392.10" stroke="#5a8888" stroke-width="0.7" opacity="0.55"/>
<line x1="277.04" y1="375.88" x2="277.04" y2="381.88" stroke="#5a8888" stroke-width="0.7" opacity="0.27"/>
<line x1="277.91" y1="373.10" x2="277.91" y2="399.17" stroke="#5a8888" stroke-width="0.7" opacity="0.48"/>
<line x1="279.20" y1="371.74" x2="279.20" y2="396.59" stroke="#5a8888" stroke-width="0.7" opacity="0.49"/>
<line x1="280.01" y1="373.05" x2="280.01" y2="388.85" stroke="#5a8888" stroke-width="0.7" opacity="0.29"/>
<line x1="281.36" y1="371.58" x2="281.36" y2="381.52" stroke="#5a8888" stroke-width="0.7" opacity="0.42"/>
<line x1="282.62" y1="372.61" x2="282.62" y2="390.67" stroke="#5a8888" stroke-width="0.7" opacity="0.28"/>
<line x1="283.42" y1="372.90" x2="283.42" y2="389.24" stroke="#5a8888" stroke-width="0.7" opacity="0.49"/>
<line x1="284.22" y1="368.74" x2="284.22" y2="386.77" stroke="#5a8888" stroke-width="0.7" opacity="0.51"/>
<line x1="285.63" y1="370.94" x2="285.63" y2="397.59" stroke="#5a8888" stroke-width="0.7" opacity="0.41"/>
<line x1="286.65" y1="371.76" x2="286.65" y2="379.27" stroke="#5a8888" stroke-width="0.7" opacity="0.48"/>
<line x1="287.34" y1="372.60" x2="287.34" y2="380.10" stroke="#5a8888" stroke-width="0.7" opacity="0.44"/>
<line x1="236.51" y1="358.85" x2="236.51" y2="384.41" stroke="#a8dcdc" stroke-width="1"/>
<line x1="247.24" y1="367.44" x2="247.24" y2="385.10" stroke="#a8dcdc" stroke-width="1"/>
<line x1="251.29" y1="336.89" x2="251.29" y2="385.34" stroke="#a8dcdc" stroke-width="1"/>
<line x1="271.13" y1="368.39" x2="271.13" y2="382.63" stroke="#a8dcdc" stroke-width="1"/>
<line x1="275.58" y1="333.08" x2="275.58" y2="381.37" stroke="#a8dcdc" stroke-width="1"/>
<line x1="324.17" y1="368.39" x2="324.17" y2="388.62" stroke="#a8dcdc" stroke-width="1"/>
<line x1="372.75" y1="403.71" x2="372.75" y2="420.07" stroke="#a8dcdc" stroke-width="1"/>
<line x1="227.0" y1="422.5" x2="834.3" y2="422.5" stroke="#6fa6a6" stroke-width="1"/>
<text x="217.80" y="234.60" font-size="7.4" font-weight="normal" fill="#dcdcdc" textLength="4.30" lengthAdjust="spacingAndGlyphs" stroke="#dcdcdc" stroke-width="0.35" >0</text>
<text x="210.30" y="253.69" font-size="7.4" font-weight="normal" fill="#dcdcdc" textLength="11.80" lengthAdjust="spacingAndGlyphs" stroke="#dcdcdc" stroke-width="0.35" >-10</text>
<text x="210.30" y="272.78" font-size="7.4" font-weight="normal" fill="#dcdcdc" textLength="11.80" lengthAdjust="spacingAndGlyphs" stroke="#dcdcdc" stroke-width="0.35" >-20</text>
<text x="210.30" y="291.87" font-size="7.4" font-weight="normal" fill="#dcdcdc" textLength="11.80" lengthAdjust="spacingAndGlyphs" stroke="#dcdcdc" stroke-width="0.35" >-30</text>
<text x="210.30" y="310.96" font-size="7.4" font-weight="normal" fill="#dcdcdc" textLength="11.80" lengthAdjust="spacingAndGlyphs" stroke="#dcdcdc" stroke-width="0.35" >-40</text>
<text x="210.30" y="330.05" font-size="7.4" font-weight="normal" fill="#dcdcdc" textLength="11.80" lengthAdjust="spacingAndGlyphs" stroke="#dcdcdc" stroke-width="0.35" >-50</text>
<text x="210.30" y="349.14" font-size="7.4" font-weight="normal" fill="#dcdcdc" textLength="11.80" lengthAdjust="spacingAndGlyphs" stroke="#dcdcdc" stroke-width="0.35" >-60</text>
<text x="210.30" y="368.23" font-size="7.4" font-weight="normal" fill="#dcdcdc" textLength="11.80" lengthAdjust="spacingAndGlyphs" stroke="#dcdcdc" stroke-width="0.35" >-70</text>
<text x="210.30" y="387.32" font-size="7.4" font-weight="normal" fill="#dcdcdc" textLength="11.80" lengthAdjust="spacingAndGlyphs" stroke="#dcdcdc" stroke-width="0.35" >-80</text>
<text x="210.30" y="406.41" font-size="7.4" font-weight="normal" fill="#dcdcdc" textLength="11.80" lengthAdjust="spacingAndGlyphs" stroke="#dcdcdc" stroke-width="0.35" >-90</text>
<text x="206.30" y="425.50" font-size="7.4" font-weight="normal" fill="#dcdcdc" textLength="15.80" lengthAdjust="spacingAndGlyphs" stroke="#dcdcdc" stroke-width="0.35" >-100</text>
<text x="225.15" y="435.10" font-size="8.4" font-weight="normal" fill="#dcdcdc" textLength="4.50" lengthAdjust="spacingAndGlyphs" stroke="#dcdcdc" stroke-width="0.35" >0</text>
<text x="261.39" y="435.10" font-size="8.4" font-weight="normal" fill="#dcdcdc" textLength="13.00" lengthAdjust="spacingAndGlyphs" stroke="#dcdcdc" stroke-width="0.35" >200</text>
<text x="301.87" y="435.10" font-size="8.4" font-weight="normal" fill="#dcdcdc" textLength="13.00" lengthAdjust="spacingAndGlyphs" stroke="#dcdcdc" stroke-width="0.35" >400</text>
<text x="342.36" y="435.10" font-size="8.4" font-weight="normal" fill="#dcdcdc" textLength="13.00" lengthAdjust="spacingAndGlyphs" stroke="#dcdcdc" stroke-width="0.35" >600</text>
<text x="382.85" y="435.10" font-size="8.4" font-weight="normal" fill="#dcdcdc" textLength="13.00" lengthAdjust="spacingAndGlyphs" stroke="#dcdcdc" stroke-width="0.35" >800</text>
<text x="421.13" y="435.10" font-size="8.4" font-weight="normal" fill="#dcdcdc" textLength="17.40" lengthAdjust="spacingAndGlyphs" stroke="#dcdcdc" stroke-width="0.35" >1000</text>
<text x="461.62" y="435.10" font-size="8.4" font-weight="normal" fill="#dcdcdc" textLength="17.40" lengthAdjust="spacingAndGlyphs" stroke="#dcdcdc" stroke-width="0.35" >1200</text>
<text x="502.11" y="435.10" font-size="8.4" font-weight="normal" fill="#dcdcdc" textLength="17.40" lengthAdjust="spacingAndGlyphs" stroke="#dcdcdc" stroke-width="0.35" >1400</text>
<text x="542.59" y="435.10" font-size="8.4" font-weight="normal" fill="#dcdcdc" textLength="17.40" lengthAdjust="spacingAndGlyphs" stroke="#dcdcdc" stroke-width="0.35" >1600</text>
<text x="583.08" y="435.10" font-size="8.4" font-weight="normal" fill="#dcdcdc" textLength="17.40" lengthAdjust="spacingAndGlyphs" stroke="#dcdcdc" stroke-width="0.35" >1800</text>
<text x="623.57" y="435.10" font-size="8.4" font-weight="normal" fill="#dcdcdc" textLength="17.40" lengthAdjust="spacingAndGlyphs" stroke="#dcdcdc" stroke-width="0.35" >2000</text>
<text x="664.05" y="435.10" font-size="8.4" font-weight="normal" fill="#dcdcdc" textLength="17.40" lengthAdjust="spacingAndGlyphs" stroke="#dcdcdc" stroke-width="0.35" >2200</text>
<text x="704.54" y="435.10" font-size="8.4" font-weight="normal" fill="#dcdcdc" textLength="17.40" lengthAdjust="spacingAndGlyphs" stroke="#dcdcdc" stroke-width="0.35" >2400</text>
<text x="745.03" y="435.10" font-size="8.4" font-weight="normal" fill="#dcdcdc" textLength="17.40" lengthAdjust="spacingAndGlyphs" stroke="#dcdcdc" stroke-width="0.35" >2600</text>
<text x="785.51" y="435.10" font-size="8.4" font-weight="normal" fill="#dcdcdc" textLength="17.40" lengthAdjust="spacingAndGlyphs" stroke="#dcdcdc" stroke-width="0.35" >2800</text>
<text x="826.00" y="435.10" font-size="8.4" font-weight="normal" fill="#dcdcdc" textLength="17.40" lengthAdjust="spacingAndGlyphs" stroke="#dcdcdc" stroke-width="0.35" >3000</text>
<text x="503.40" y="227.30" font-size="7.2" font-weight="normal" fill="#dcdcdc" textLength="24.50" lengthAdjust="spacingAndGlyphs"  >Спектр</text>
<text x="508.20" y="441.90" font-size="7.2" font-weight="normal" fill="#dcdcdc" textLength="44.50" lengthAdjust="spacingAndGlyphs"  >Частота [Гц]</text>
<text transform="translate(200.9,355.1) rotate(-90)" x="0" y="0" font-size="7.2" fill="#dcdcdc" textLength="55.7" lengthAdjust="spacingAndGlyphs">Амплитуда [дБ]</text>
<circle cx="16.3" cy="475.3" r="3.6" fill="#f5a02c"/>
<circle cx="18.6" cy="473.0" r="3.2" fill="#eadbe8"/>
<defs><linearGradient id="cl" x1="0" x2="0" y1="0" y2="1"><stop offset="0" stop-color="#b4d0f4"/><stop offset="1" stop-color="#5f94e4"/></linearGradient></defs>
<path d="M12,486 h12 a2.6,2.6 0 0 0 0.5,-5.2 a3.6,3.6 0 0 0 -6.8,-1.2 a3,3 0 0 0 -5.7,3.2 a1.6,1.6 0 0 0 0,3.2 Z" fill="url(#cl)"/>
<text x="29.70" y="477.40" font-size="7.2" font-weight="bold" fill="#1e1e1e" textLength="10.40" lengthAdjust="spacingAndGlyphs"  >7°C</text>
<text x="29.70" y="486.50" font-size="7.6" font-weight="normal" fill="#4a4a4a" textLength="42.40" lengthAdjust="spacingAndGlyphs"  >Mostly cloudy</text>
<rect x="242.2" y="473.2" width="6.4" height="6.4" fill="#1a8ee6"/>
<rect x="249.1" y="473.2" width="6.4" height="6.4" fill="#1a8ee6"/>
<rect x="242.2" y="480.1" width="6.4" height="6.4" fill="#1a8ee6"/>
<rect x="249.1" y="480.1" width="6.4" height="6.4" fill="#1a8ee6"/>
<rect x="264" y="471" width="124" height="17" rx="8.5" fill="#f5f1f7" stroke="#e2dbe6" stroke-width="0.6"/>
<circle cx="273.8" cy="478.6" r="3" fill="none" stroke="#222" stroke-width="1.1"/>
<path d="M276,480.8 L278.3,483.1" stroke="#222" stroke-width="1.2"/>
<text x="284.30" y="483.20" font-size="8.2" font-weight="normal" fill="#555" textLength="22.30" lengthAdjust="spacingAndGlyphs"  >Поиск</text>
<defs><linearGradient id="sky" x1="0" x2="0" y1="0" y2="1"><stop offset="0" stop-color="#4a5ab0"/><stop offset="0.55" stop-color="#8aa8e0"/><stop offset="1" stop-color="#f0f4ff"/></linearGradient><clipPath id="ov"><ellipse cx="372.2" cy="480.3" rx="13.7" ry="6.8"/></clipPath></defs>
<g clip-path="url(#ov)">
<rect x="358" y="473" width="28" height="15" fill="url(#sky)"/>
<path d="M358,476 Q364,473 369,475.5 Q374,478 380,475 Q384,473.5 386,474.5 L386,473 L358,473 Z" fill="#40d0a0"/>
<path d="M358,484 Q366,481 374,483 Q380,484.5 386,482.5 L386,488 L358,488 Z" fill="#f4f8ff"/>
<path d="M362,485 L362,480 L366.5,476.5 L371,480 L371,485 Z" fill="#b8602a"/>
<path d="M366.5,473.5 L368,478 L365,478 Z" fill="#c8d4f0"/>
<rect x="368" y="481.5" width="5" height="3.5" fill="#f0a040"/>
<path d="M380,485 L380.5,477 L381.5,485 Z" fill="#e8eef8"/>
</g>
<rect x="399" y="473" width="10" height="8.5" fill="#f2f2f2" stroke="#ddd" stroke-width="0.5"/>
<path d="M395.5,477 h4 v4.5 h6.5 v4.3 h-10.5 z" fill="#1e1e1e"/>
<rect x="399.5" y="477" width="6.5" height="4.5" fill="#9a9a9a"/>
<defs><linearGradient id="cpL" x1="0" x2="0" y1="0" y2="1"><stop offset="0" stop-color="#2a7ff0"/><stop offset="0.45" stop-color="#36c080"/><stop offset="0.7" stop-color="#f5c030"/><stop offset="1" stop-color="#f55a20"/></linearGradient><linearGradient id="cpR" x1="0" x2="0" y1="0" y2="1"><stop offset="0" stop-color="#2050e0"/><stop offset="0.5" stop-color="#a050e0"/><stop offset="1" stop-color="#f060a0"/></linearGradient></defs>
<path d="M423.5,473 L428.5,473 L425,485.7 L421.5,485.7 Q420.4,485.7 420.7,484.3 L422.8,474.2 Q423,473 423.5,473 Z" fill="url(#cpL)"/>
<path d="M428.5,473 L432.8,473 Q434.5,473 434.1,474.6 L432.3,484.5 Q432,485.7 431,485.7 L425,485.7 Z" fill="url(#cpR)"/>
<path d="M428.8,472.5 L424.8,486" stroke="#e8dcee" stroke-width="1.1"/>
<rect x="420.5" y="478.5" width="3" height="3" fill="#38c070" opacity="0.6"/>
<rect x="446" y="475.5" width="9" height="9.5" rx="1" fill="#5b5fc7"/>
<circle cx="456.5" cy="474.5" r="2.2" fill="#7b83eb"/>
<rect x="454.5" y="477.5" width="5" height="6.5" rx="2.2" fill="#7b83eb"/>
<circle cx="451.5" cy="473.5" r="2.4" fill="#7b83eb"/>
<text x="447.8" y="483" font-size="7" font-weight="bold" fill="#fff">T</text>
<defs><linearGradient id="edg" x1="0" x2="1" y1="0" y2="0"><stop offset="0" stop-color="#2aa4e0"/><stop offset="1" stop-color="#62d25a"/></linearGradient></defs>
<circle cx="477.8" cy="479.7" r="7.2" fill="#1670c8"/>
<path d="M470.8,478.2 A7.2,7.2 0 0 1 485,480.5 Q485,482.5 483,482.8 L476,482.8 Q474.5,478.5 478.5,477.2 Q474,476 470.8,478.2 Z" fill="url(#edg)"/>
<path d="M472.5,484.5 Q476,487.5 481,486.2 Q476.5,485.5 475,481.5 Q473.5,483 472.5,484.5 Z" fill="#0b4490" opacity="0.9"/>
<ellipse cx="479.2" cy="480.6" rx="2.6" ry="1.8" fill="#e6dcee"/>
<ellipse cx="502.7" cy="479.6" rx="6.4" ry="6.8" fill="#e51a2a"/>
<ellipse cx="502.7" cy="479.6" rx="2.6" ry="4.8" fill="#ead8ea"/>
<path d="M521,474 h5 l1.5,1.5 h7 v11 h-13.5 z" fill="#f0b400"/>
<rect x="521" y="477" width="13.5" height="9.5" fill="#ffd23c"/>
<rect x="524.5" y="483" width="6.5" height="2" fill="#1070d0"/>
<rect x="548" y="474" width="11" height="11" rx="1" fill="#28a8ea"/>
<rect x="545.5" y="476" width="8" height="8" rx="1" fill="#0a64b8"/>
<circle cx="549.5" cy="480" r="2.2" fill="none" stroke="#fff" stroke-width="1.2"/>
<circle cx="578.2" cy="479.6" r="6.8" fill="#e33b2e"/>
<path d="M578.2,479.6 L572.3,476.2 A6.8,6.8 0 0 0 578.2,486.4 Z" fill="#2da94f"/>
<path d="M578.2,479.6 L578.2,486.4 A6.8,6.8 0 0 0 584.1,476.2 L578.2,476.2 Z" fill="#fcc934"/>
<circle cx="578.2" cy="479.6" r="3" fill="#fff"/>
<circle cx="578.2" cy="479.6" r="2.3" fill="#1a73e8"/>
<rect x="576.5" y="488.5" width="3.5" height="1.2" rx="0.6" fill="#777"/>
<path d="M598,484 q-1,-7 5,-9.5 q5,-1.5 7.5,3" fill="none" stroke="#888" stroke-width="2"/>
<path d="M606,474.2 q4,1 4.8,4.5" fill="none" stroke="#e04a3a" stroke-width="2"/>
<rect x="597" y="484.5" width="12" height="1.5" fill="#999"/>
<rect x="601.7" y="488.5" width="3.5" height="1.2" rx="0.6" fill="#777"/>
<rect x="618" y="469" width="21" height="24" rx="2" fill="#f6eaf6" opacity="0.85"/>
<rect x="622" y="476" width="13" height="6.5" fill="#2a62c8"/>
<path d="M621.5,479 h4 l1.5,-4 l2,8 l1.5,-4 h5" fill="none" stroke="#111" stroke-width="1"/>
<rect x="624" y="488.5" width="9" height="1.4" rx="0.7" fill="#1e8a9a"/>
<path d="M732,481.5 L734.7,478.8 L737.4,481.5" fill="none" stroke="#333" stroke-width="1"/>
<text x="749.80" y="482.50" font-size="7.2" font-weight="normal" fill="#333" textLength="13.20" lengthAdjust="spacingAndGlyphs"  >ENG</text>
<path d="M773.5,478 a6,6 0 0 1 8.6,0 M775,479.6 a3.8,3.8 0 0 1 5.6,0 M776.6,481.2 a1.6,1.6 0 0 1 2.4,0" fill="none" stroke="#333" stroke-width="0.8"/>
<circle cx="777.8" cy="482.6" r="0.7" fill="#333"/>
<path d="M787.5,478.5 h2 l2.5,-2.2 v7 l-2.5,-2.2 h-2 z" fill="none" stroke="#333" stroke-width="0.8"/>
<path d="M793.5,478 q1.2,1.8 0,3.6 M795,476.8 q2.2,3 0,6" fill="none" stroke="#333" stroke-width="0.7"/>
<rect x="801.5" y="477.5" width="7.5" height="5" rx="0.8" fill="#222"/>
<rect x="809" y="479" width="1" height="2" fill="#222"/>
<path d="M802,477 l1.5,-2 l1.5,2" fill="#222"/>
<text x="836.00" y="477.60" font-size="7.4" font-weight="normal" fill="#333" textLength="16.40" lengthAdjust="spacingAndGlyphs"  >17:44</text>
<text x="819.60" y="486.40" font-size="7.4" font-weight="normal" fill="#333" textLength="32.80" lengthAdjust="spacingAndGlyphs"  >20.12.2024</text>
<path d="M858,482.5 h7 l-1,-1.2 v-2.5 a2.5,2.5 0 0 0 -5,0 v2.5 z M860.5,483.5 a1,1 0 0 0 2,0" fill="none" stroke="#333" stroke-width="0.8"/>
<rect x="872.1" y="456.7" width="1" height="1" fill="#3a3a3a"/>
<rect x="869.7" y="459.0" width="1" height="1" fill="#3a3a3a"/>
<rect x="872.1" y="459.0" width="1" height="1" fill="#3a3a3a"/>
<rect x="867.3" y="461.2" width="1" height="1" fill="#3a3a3a"/>
<rect x="869.7" y="461.2" width="1" height="1" fill="#3a3a3a"/>
<rect x="872.1" y="461.2" width="1" height="1" fill="#3a3a3a"/>
</svg>
</body></html>
